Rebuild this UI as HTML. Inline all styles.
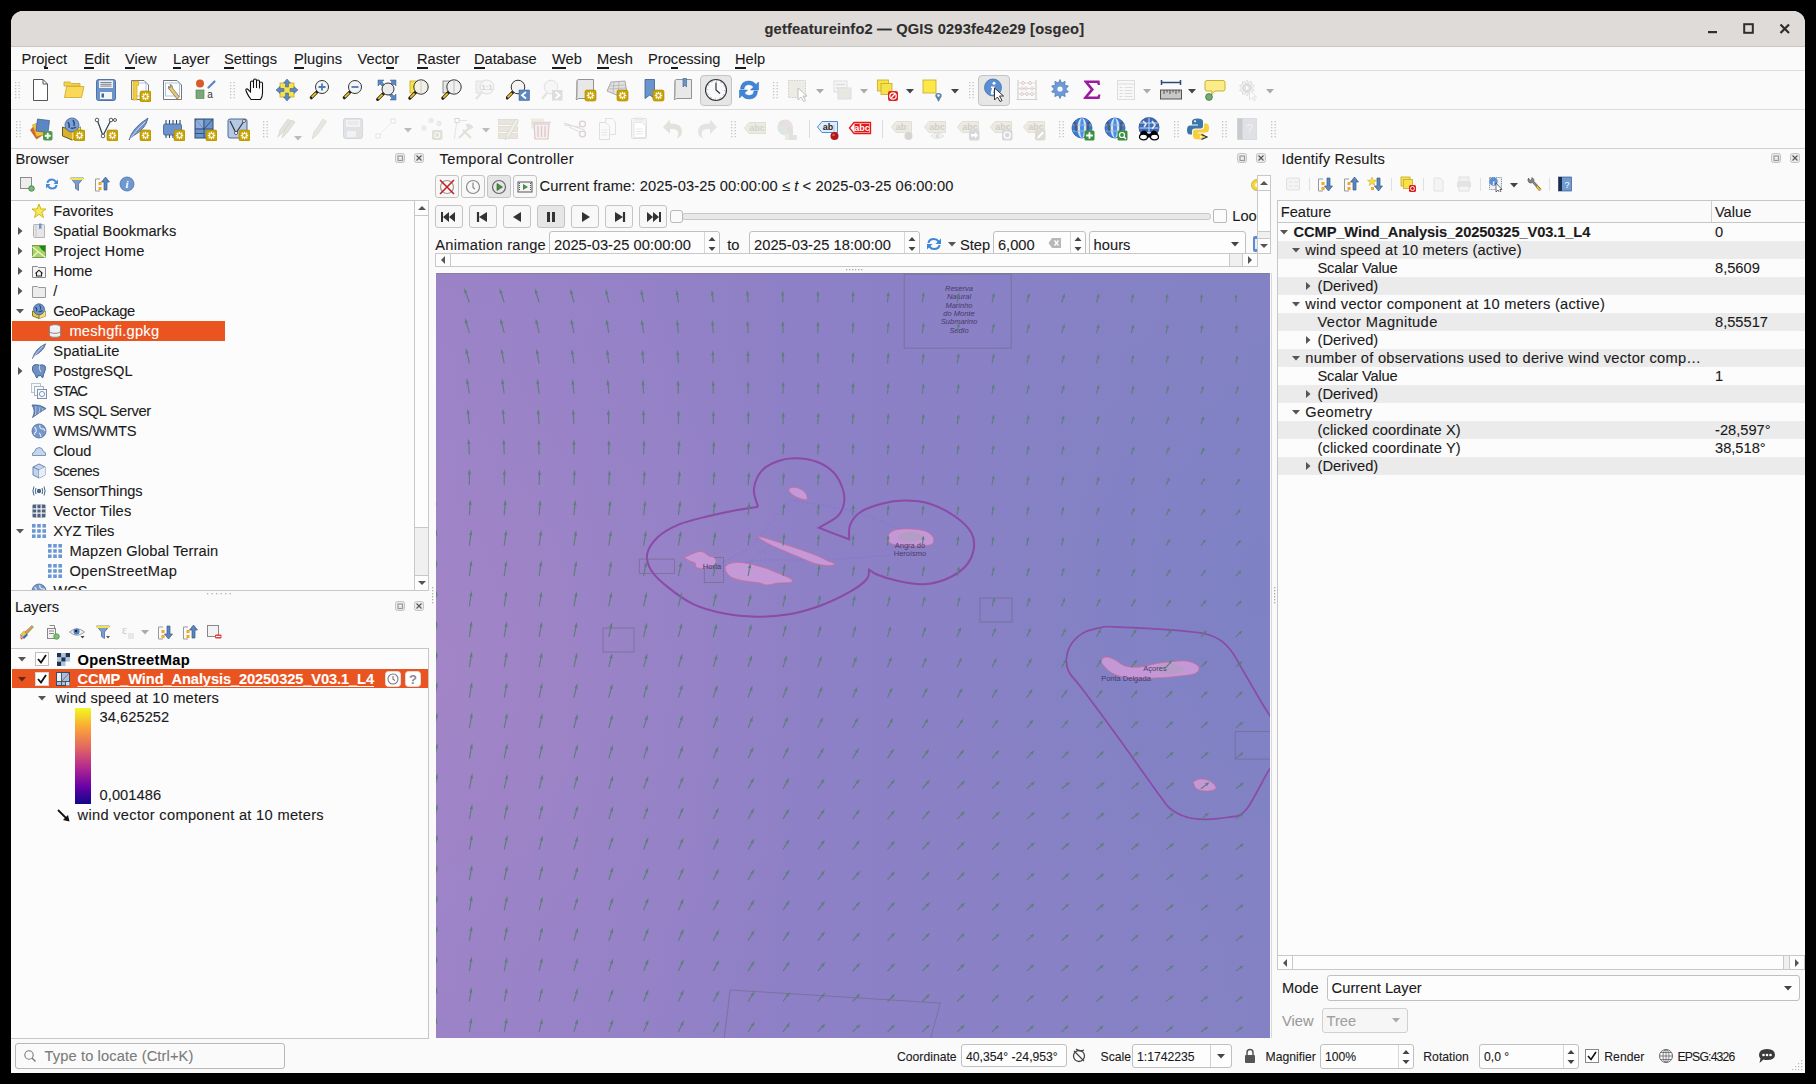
<!DOCTYPE html><html><head><meta charset="utf-8"><style>
html,body{margin:0;padding:0;width:1816px;height:1084px;overflow:hidden;background:#000;}
body{position:relative;font-family:"Liberation Sans",sans-serif;}
.t{position:absolute;white-space:pre;font-family:"Liberation Sans",sans-serif;-webkit-text-stroke:0.1px currentColor;}
.r{position:absolute;box-sizing:border-box;}
u{text-decoration:none;border-bottom:2px solid currentColor;}
</style></head><body>
<div class="r" style="left:11px;top:11px;width:1794px;height:1062px;background:#fafafa;border-radius:12px 12px 0 0;"></div><div class="r" style="left:11px;top:11px;width:1794px;height:36px;background:#dedbd8;border-radius:12px 12px 0 0;border-bottom:1px solid #c9c6c2;"></div><div class="t " style="left:764.50px;top:19.65px;font-size:14.67px;line-height:18px;font-weight:700;color:#2e2e2e;letter-spacing:0.165px;">getfeatureinfo2 — QGIS 0293fe42e29 [osgeo]</div><svg class="r" style="left:1706px;top:22px;" width="14" height="14" viewBox="0 0 14 14"><rect x="2" y="9" width="9" height="2.2" fill="#2e2e2e"/></svg><svg class="r" style="left:1742px;top:22px;" width="14" height="14" viewBox="0 0 14 14"><rect x="2.2" y="2.2" width="8.6" height="8.6" fill="none" stroke="#2e2e2e" stroke-width="2"/></svg><svg class="r" style="left:1778px;top:22px;" width="14" height="14" viewBox="0 0 14 14"><path d="M2.5 2.5 L11 11 M11 2.5 L2.5 11" stroke="#2e2e2e" stroke-width="2.2"/></svg><div class="r" style="left:11px;top:47px;width:1794px;height:24px;background:#fafafa;border-bottom:1px solid #dcdcdc;"></div><div class="t " style="left:21.50px;top:50.15px;font-size:14.67px;line-height:18px;font-weight:400;color:#1a1a1a;">Pro<u>j</u>ect</div><div class="t " style="left:84.20px;top:50.15px;font-size:14.67px;line-height:18px;font-weight:400;color:#1a1a1a;"><u>E</u>dit</div><div class="t " style="left:125.00px;top:50.15px;font-size:14.67px;line-height:18px;font-weight:400;color:#1a1a1a;"><u>V</u>iew</div><div class="t " style="left:173.00px;top:50.15px;font-size:14.67px;line-height:18px;font-weight:400;color:#1a1a1a;"><u>L</u>ayer</div><div class="t " style="left:224.00px;top:50.15px;font-size:14.67px;line-height:18px;font-weight:400;color:#1a1a1a;"><u>S</u>ettings</div><div class="t " style="left:294.00px;top:50.15px;font-size:14.67px;line-height:18px;font-weight:400;color:#1a1a1a;"><u>P</u>lugins</div><div class="t " style="left:357.60px;top:50.15px;font-size:14.67px;line-height:18px;font-weight:400;color:#1a1a1a;">Vect<u>o</u>r</div><div class="t " style="left:417.00px;top:50.15px;font-size:14.67px;line-height:18px;font-weight:400;color:#1a1a1a;"><u>R</u>aster</div><div class="t " style="left:474.00px;top:50.15px;font-size:14.67px;line-height:18px;font-weight:400;color:#1a1a1a;"><u>D</u>atabase</div><div class="t " style="left:552.00px;top:50.15px;font-size:14.67px;line-height:18px;font-weight:400;color:#1a1a1a;"><u>W</u>eb</div><div class="t " style="left:597.00px;top:50.15px;font-size:14.67px;line-height:18px;font-weight:400;color:#1a1a1a;"><u>M</u>esh</div><div class="t " style="left:648.00px;top:50.15px;font-size:14.67px;line-height:18px;font-weight:400;color:#1a1a1a;">Pro<u>c</u>essing</div><div class="t " style="left:735.00px;top:50.15px;font-size:14.67px;line-height:18px;font-weight:400;color:#1a1a1a;"><u>H</u>elp</div><div class="r" style="left:11px;top:71px;width:1794px;height:39px;background:#fafafa;border-bottom:1px solid #dcdcdc;"></div><div class="r" style="left:11px;top:110px;width:1794px;height:39px;background:#fafafa;border-bottom:1px solid #d0d0d0;"></div><div class="t " style="left:15.50px;top:150.15px;font-size:14.67px;line-height:18px;font-weight:400;color:#1a1a1a;">Browser</div><svg class="r" style="left:395px;top:153px;" width="10" height="10" viewBox="0 0 10 10"><rect x="0.5" y="0.5" width="9" height="9" rx="2" fill="#ececec" stroke="#c4c4c4"/><rect x="3" y="3" width="4.5" height="4.5" fill="none" stroke="#9a9a9a" stroke-width="1.2"/></svg><svg class="r" style="left:414px;top:153px;" width="10" height="10" viewBox="0 0 10 10"><rect x="0.5" y="0.5" width="9" height="9" rx="2" fill="#ececec" stroke="#c4c4c4"/><path d="M2.5 2.5L7.5 7.5M7.5 2.5L2.5 7.5" stroke="#555" stroke-width="1.1"/></svg><div class="r" style="left:11px;top:200px;width:418px;height:391px;background:#fcfcfc;border:1px solid #c6c6c6;border-left:none;"></div><div class="r" style="left:414px;top:200px;width:15px;height:391px;background:#fdfdfd;border:1px solid #c8c8c8;"></div><div class="r" style="left:414px;top:215px;width:15px;height:1px;background:#c8c8c8;"></div><div class="r" style="left:414px;top:575px;width:15px;height:1px;background:#c8c8c8;"></div><svg class="r" style="left:416.5px;top:203px;" width="10" height="10" viewBox="0 0 10 10"><path d="M1 7L5 3L9 7Z" fill="#555"/></svg><svg class="r" style="left:416.5px;top:578px;" width="10" height="10" viewBox="0 0 10 10"><path d="M1 3L5 7L9 3Z" fill="#555"/></svg><div class="r" style="left:415px;top:527px;width:13px;height:48px;background:#f0f0f0;border-top:1px solid #c8c8c8;"></div><div class="r" style="left:0;top:0;width:1816px;height:1084px;clip-path:inset(201px 1402px 494px 12px);"><div class="r" style="left:12px;top:321px;width:213px;height:20px;background:#e95420;"></div><svg class="r" style="left:31.0px;top:203.0px;" width="16" height="16" viewBox="0 0 16 16"><g transform="scale(1.0)"><path d="M8 1L9.9 6H15L10.9 9.2L12.5 14.5L8 11.3L3.5 14.5L5.1 9.2L1 6H6.1Z" fill="#f7e85a" stroke="#cbb000" stroke-width="0.9"/></g></svg><div class="t " style="left:53.30px;top:202.15px;font-size:14.67px;line-height:18px;font-weight:400;color:#1a1a1a;letter-spacing:-0.031px;">Favorites</div><svg class="r" style="left:14.5px;top:226px;" width="10" height="10" viewBox="0 0 10 10"><path d="M3 1L3 9L7.5 5Z" fill="#555"/></svg><svg class="r" style="left:31.0px;top:223.0px;" width="16" height="16" viewBox="0 0 16 16"><g transform="scale(1.0)"><path d="M3 1.5H12.5Q13.5 1.5 13.5 2.5V14.5H3.5Q2.5 14.5 2.5 13.5V2.5Q2.5 1.5 3 1.5Z" fill="#e6e6e6" stroke="#b4b4b4"/><path d="M5 1.5V14" stroke="#c8c8c8"/><path d="M8 0.5H10.5V6.5L9.25 5.2L8 6.5Z" fill="#6d96c9"/></g></svg><div class="t " style="left:53.30px;top:222.15px;font-size:14.67px;line-height:18px;font-weight:400;color:#1a1a1a;letter-spacing:0.047px;">Spatial Bookmarks</div><svg class="r" style="left:14.5px;top:246px;" width="10" height="10" viewBox="0 0 10 10"><path d="M3 1L3 9L7.5 5Z" fill="#555"/></svg><svg class="r" style="left:31.0px;top:243.0px;" width="16" height="16" viewBox="0 0 16 16"><g transform="scale(1.0)"><rect x="1.5" y="2.5" width="13" height="12" fill="#a6d266" stroke="#7a9a50"/><path d="M1.5 4L14.5 14.5M1.5 14L7 9" stroke="#e8f4c8" stroke-width="1.5"/><path d="M8 3H14V9L11 7Z" fill="#1a8a1a"/></g></svg><div class="t " style="left:53.30px;top:242.15px;font-size:14.67px;line-height:18px;font-weight:400;color:#1a1a1a;letter-spacing:0.204px;">Project Home</div><svg class="r" style="left:14.5px;top:266px;" width="10" height="10" viewBox="0 0 10 10"><path d="M3 1L3 9L7.5 5Z" fill="#555"/></svg><svg class="r" style="left:31.0px;top:263.0px;" width="16" height="16" viewBox="0 0 16 16"><g transform="scale(1.0)"><path d="M1.5 3.5H6.5L7.5 4.5H14.5V14.5H1.5Z" fill="#f4f4f4" stroke="#8a8a8a"/><path d="M4.5 10.5L8 7.2L11.5 10.5M5.5 9.8V13H10.5V9.8" fill="none" stroke="#222" stroke-width="1.1"/></g></svg><div class="t " style="left:53.30px;top:262.15px;font-size:14.67px;line-height:18px;font-weight:400;color:#1a1a1a;">Home</div><svg class="r" style="left:14.5px;top:286px;" width="10" height="10" viewBox="0 0 10 10"><path d="M3 1L3 9L7.5 5Z" fill="#555"/></svg><svg class="r" style="left:31.0px;top:283.0px;" width="16" height="16" viewBox="0 0 16 16"><g transform="scale(1.0)"><path d="M1.5 3.5H6.5L7.5 4.5H14.5V14.5H1.5Z" fill="#ececec" stroke="#9a9a9a"/></g></svg><div class="t " style="left:53.30px;top:282.15px;font-size:14.67px;line-height:18px;font-weight:400;color:#1a1a1a;">/</div><svg class="r" style="left:14.5px;top:306px;" width="10" height="10" viewBox="0 0 10 10"><path d="M1 3L9 3L5 7.5Z" fill="#555"/></svg><svg class="r" style="left:31.0px;top:303.0px;" width="16" height="16" viewBox="0 0 16 16"><g transform="scale(1.0)"><path d="M1.5 8L8 10.5L14.5 8V13L8 15.5L1.5 13Z" fill="#e8c838" stroke="#6a5a20" stroke-width="0.8"/><path d="M8 10.5L14.5 8V13L8 15.5Z" fill="#f6e070"/><path d="M8 10.5V15.5" stroke="#6a5a20" stroke-width="0.8"/><circle cx="8" cy="6.3" r="5.5" fill="#6e94c8" stroke="#3e5e90" stroke-width="0.8"/><path d="M4.5 4Q6.5 6 5.5 8.5M8.5 2Q10.5 4.5 9.5 6.5M11.5 7.5Q9.5 9 7.5 8.5" stroke="#2a4a80" stroke-width="1.2" fill="none"/></g></svg><div class="t " style="left:53.30px;top:302.15px;font-size:14.67px;line-height:18px;font-weight:400;color:#1a1a1a;letter-spacing:-0.315px;">GeoPackage</div><svg class="r" style="left:47.0px;top:323.0px;" width="16" height="16" viewBox="0 0 16 16"><g transform="scale(1.0)"><ellipse cx="8" cy="4" rx="5.5" ry="2.3" fill="#f6f6f6" stroke="#8a8a8a"/><path d="M2.5 4V12Q2.5 14.3 8 14.3Q13.5 14.3 13.5 12V4" fill="#f0f0f0" stroke="#8a8a8a"/><path d="M2.5 8Q2.5 10.3 8 10.3Q13.5 10.3 13.5 8" fill="none" stroke="#8a8a8a"/></g></svg><div class="t " style="left:69.40px;top:322.15px;font-size:14.67px;line-height:18px;font-weight:400;color:#ffffff;letter-spacing:0.227px;">meshgfi.gpkg</div><svg class="r" style="left:31.0px;top:343.0px;" width="16" height="16" viewBox="0 0 16 16"><g transform="scale(1.0)"><path d="M1.5 15.5Q4 6 14.5 0.8Q13 8 3.5 12.5Z" fill="#7396c8" stroke="#45618e" stroke-width="0.8"/><path d="M2 15Q6 9 12 3" stroke="#d0dcf0" stroke-width="0.8" fill="none"/></g></svg><div class="t " style="left:53.30px;top:342.15px;font-size:14.67px;line-height:18px;font-weight:400;color:#1a1a1a;letter-spacing:0.091px;">SpatiaLite</div><svg class="r" style="left:14.5px;top:366px;" width="10" height="10" viewBox="0 0 10 10"><path d="M3 1L3 9L7.5 5Z" fill="#555"/></svg><svg class="r" style="left:31.0px;top:363.0px;" width="16" height="16" viewBox="0 0 16 16"><g transform="scale(1.0)"><path d="M3 2Q1 3 1.5 7Q2 10 4 11Q4.5 14 6 15Q7 15 7 12.5Q9 13 10 12.5Q10.5 15 12 14.5Q12.5 11 13.5 9Q15.5 5 14 3Q12 1 8.5 2.2Q5.5 1 3 2Z" fill="#6f90c4" stroke="#3f5f8f" stroke-width="0.9"/><path d="M8.5 2.5Q7.5 6 10 9" stroke="#dfe8f5" stroke-width="0.9" fill="none"/></g></svg><div class="t " style="left:53.30px;top:362.15px;font-size:14.67px;line-height:18px;font-weight:400;color:#1a1a1a;letter-spacing:-0.064px;">PostgreSQL</div><svg class="r" style="left:31.0px;top:383.0px;" width="16" height="16" viewBox="0 0 16 16"><g transform="scale(1.0)"><rect x="0.5" y="0.5" width="9" height="9" fill="#f6f8fb" stroke="#b8c4d4"/><rect x="3.5" y="3.5" width="9" height="9" fill="#f6f8fb" stroke="#a4b4c8"/><rect x="6.5" y="6.5" width="9" height="9" fill="#f6f8fb" stroke="#7a90ac"/><circle cx="11" cy="11" r="2.6" fill="none" stroke="#7a90ac" stroke-width="0.9"/></g></svg><div class="t " style="left:53.30px;top:382.15px;font-size:14.67px;line-height:18px;font-weight:400;color:#1a1a1a;letter-spacing:-1.125px;">STAC</div><svg class="r" style="left:31.0px;top:403.0px;" width="16" height="16" viewBox="0 0 16 16"><g transform="scale(1.0)"><path d="M1 2Q9 1 15 5.5Q9 9 1.5 14.5Q5 8 1 2Z" fill="#6d8fc4" stroke="#40608e" stroke-width="0.8"/><path d="M5 3L4.5 12M9 4L8 10M12 5L11.5 7.5" stroke="#c6d4ea" stroke-width="0.7"/></g></svg><div class="t " style="left:53.30px;top:402.15px;font-size:14.67px;line-height:18px;font-weight:400;color:#1a1a1a;letter-spacing:-0.360px;">MS SQL Server</div><svg class="r" style="left:31.0px;top:423.0px;" width="16" height="16" viewBox="0 0 16 16"><g transform="scale(1.0)"><circle cx="8" cy="8" r="7" fill="#7597c9" stroke="#4a6a9a" stroke-width="0.8"/><path d="M3.5 4Q6 6 5 9Q3 10 3.5 12M9 2Q8 5 11 6Q13 5 14 8M8 10Q10 11 10 14" stroke="#e4ecf6" stroke-width="1.1" fill="none"/></g></svg><div class="t " style="left:53.30px;top:422.15px;font-size:14.67px;line-height:18px;font-weight:400;color:#1a1a1a;letter-spacing:-0.196px;">WMS/WMTS</div><svg class="r" style="left:31.0px;top:443.0px;" width="16" height="16" viewBox="0 0 16 16"><g transform="scale(1.0)"><path d="M1.5 12.5Q0.5 9.5 3.5 9Q4 5 8 4.5Q11.5 4.5 12.5 8.5Q15.5 9 14.5 12.5Z" fill="#c6d6ea" stroke="#6e8cb4" stroke-width="0.9"/></g></svg><div class="t " style="left:53.30px;top:442.15px;font-size:14.67px;line-height:18px;font-weight:400;color:#1a1a1a;letter-spacing:-0.039px;">Cloud</div><svg class="r" style="left:31.0px;top:463.0px;" width="16" height="16" viewBox="0 0 16 16"><g transform="scale(1.0)"><path d="M8 1L14 4V12L8 15L2 12V4Z" fill="#c4d4ea" stroke="#5c7aa6" stroke-width="0.9"/><path d="M2 4L8 7L14 4M8 7V15" stroke="#5c7aa6" stroke-width="0.9" fill="none"/><path d="M8 7L14 4V12L8 15Z" fill="#e8eef8"/></g></svg><div class="t " style="left:53.30px;top:462.15px;font-size:14.67px;line-height:18px;font-weight:400;color:#1a1a1a;letter-spacing:-0.532px;">Scenes</div><svg class="r" style="left:31.0px;top:483.0px;" width="16" height="16" viewBox="0 0 16 16"><g transform="scale(1.0)"><circle cx="8" cy="8" r="2.2" fill="#46648e"/><path d="M5 5Q3.5 8 5 11M11 5Q12.5 8 11 11M3 3.5Q0.8 8 3 12.5M13 3.5Q15.2 8 13 12.5" stroke="#46648e" stroke-width="1" fill="none"/></g></svg><div class="t " style="left:53.30px;top:482.15px;font-size:14.67px;line-height:18px;font-weight:400;color:#1a1a1a;letter-spacing:-0.103px;">SensorThings</div><svg class="r" style="left:31.0px;top:503.0px;" width="16" height="16" viewBox="0 0 16 16"><g transform="scale(1.0)"><rect x="1.5" y="1.5" width="13" height="13" rx="1" fill="#4c6180"/><path d="M5.8 1.5V14.5M10.2 1.5V14.5M1.5 5.8H14.5M1.5 10.2H14.5" stroke="#f2f2f2" stroke-width="1.2"/></g></svg><div class="t " style="left:53.30px;top:502.15px;font-size:14.67px;line-height:18px;font-weight:400;color:#1a1a1a;letter-spacing:0.203px;">Vector Tiles</div><svg class="r" style="left:14.5px;top:526px;" width="10" height="10" viewBox="0 0 10 10"><path d="M1 3L9 3L5 7.5Z" fill="#555"/></svg><svg class="r" style="left:31.0px;top:523.0px;" width="16" height="16" viewBox="0 0 16 16"><g transform="scale(1.0)"><g fill="#6b98d2"><rect x="1" y="1" width="3.6" height="3.6"/><rect x="6.2" y="1" width="3.6" height="3.6"/><rect x="11.4" y="1" width="3.6" height="3.6"/><rect x="1" y="6.2" width="3.6" height="3.6"/><rect x="6.2" y="6.2" width="3.6" height="3.6"/><rect x="11.4" y="6.2" width="3.6" height="3.6"/><rect x="1" y="11.4" width="3.6" height="3.6"/><rect x="6.2" y="11.4" width="3.6" height="3.6"/><rect x="11.4" y="11.4" width="3.6" height="3.6"/></g></g></svg><div class="t " style="left:53.30px;top:522.15px;font-size:14.67px;line-height:18px;font-weight:400;color:#1a1a1a;letter-spacing:-0.202px;">XYZ Tiles</div><svg class="r" style="left:47.0px;top:543.0px;" width="16" height="16" viewBox="0 0 16 16"><g transform="scale(1.0)"><g fill="#6b98d2"><rect x="1" y="1" width="3.6" height="3.6"/><rect x="6.2" y="1" width="3.6" height="3.6"/><rect x="11.4" y="1" width="3.6" height="3.6"/><rect x="1" y="6.2" width="3.6" height="3.6"/><rect x="6.2" y="6.2" width="3.6" height="3.6"/><rect x="11.4" y="6.2" width="3.6" height="3.6"/><rect x="1" y="11.4" width="3.6" height="3.6"/><rect x="6.2" y="11.4" width="3.6" height="3.6"/><rect x="11.4" y="11.4" width="3.6" height="3.6"/></g></g></svg><div class="t " style="left:69.40px;top:542.15px;font-size:14.67px;line-height:18px;font-weight:400;color:#1a1a1a;letter-spacing:0.082px;">Mapzen Global Terrain</div><svg class="r" style="left:47.0px;top:563.0px;" width="16" height="16" viewBox="0 0 16 16"><g transform="scale(1.0)"><g fill="#6b98d2"><rect x="1" y="1" width="3.6" height="3.6"/><rect x="6.2" y="1" width="3.6" height="3.6"/><rect x="11.4" y="1" width="3.6" height="3.6"/><rect x="1" y="6.2" width="3.6" height="3.6"/><rect x="6.2" y="6.2" width="3.6" height="3.6"/><rect x="11.4" y="6.2" width="3.6" height="3.6"/><rect x="1" y="11.4" width="3.6" height="3.6"/><rect x="6.2" y="11.4" width="3.6" height="3.6"/><rect x="11.4" y="11.4" width="3.6" height="3.6"/></g></g></svg><div class="t " style="left:69.40px;top:562.15px;font-size:14.67px;line-height:18px;font-weight:400;color:#1a1a1a;letter-spacing:0.333px;">OpenStreetMap</div><svg class="r" style="left:31.0px;top:583.0px;" width="16" height="16" viewBox="0 0 16 16"><g transform="scale(1.0)"><circle cx="8" cy="8" r="7" fill="#7597c9" stroke="#4a6a9a" stroke-width="0.8"/><path d="M3.5 4Q6 6 5 9Q3 10 3.5 12M9 2Q8 5 11 6Q13 5 14 8M8 10Q10 11 10 14" stroke="#e4ecf6" stroke-width="1.1" fill="none"/></g></svg><div class="t " style="left:53.30px;top:582.15px;font-size:14.67px;line-height:18px;font-weight:400;color:#1a1a1a;">WCS</div></div><svg class="r" style="left:19px;top:176px;" width="16" height="16" viewBox="0 0 16 16"><rect x="1.5" y="1.5" width="11" height="11" fill="#ededed" stroke="#8a8a8a"/><circle cx="12.5" cy="12.5" r="2.8" fill="#7cb87a" stroke="#3f7f3f" stroke-width="0.8"/></svg><svg class="r" style="left:44px;top:176px;" width="16" height="16" viewBox="0 0 16 16"><path d="M2.5 7Q3 2.5 8 2.5Q11 2.5 12.5 5L14 3.5V8H9.5L11 6.5Q10 4.5 8 4.5Q5 4.5 4.5 7Z M13.5 9Q13 13.5 8 13.5Q5 13.5 3.5 11L2 12.5V8H6.5L5 9.5Q6 11.5 8 11.5Q11 11.5 11.5 9Z" fill="#4a8ad8"/></svg><svg class="r" style="left:69px;top:176px;" width="16" height="16" viewBox="0 0 16 16"><path d="M1.5 2H14.5L9.5 8V14.5L6.5 12.5V8Z" fill="#7d9dc9" stroke="#4f6f9f" stroke-width="0.8"/><rect x="1.5" y="2" width="13" height="2" fill="#f6e24a"/></svg><svg class="r" style="left:94px;top:176px;" width="16" height="16" viewBox="0 0 16 16"><path d="M1.5 3H6M1.5 3V15H6" stroke="#999" fill="none"/><rect x="4.5" y="6" width="3" height="3" fill="#f5a623"/><rect x="4.5" y="11" width="3" height="3" fill="#f5a623"/><path d="M11.5 1L15.5 6H13V14H10V6H7.5Z" fill="#5a86c0" stroke="#3a5a8a" stroke-width="0.7"/></svg><svg class="r" style="left:119px;top:176px;" width="16" height="16" viewBox="0 0 16 16"><circle cx="8" cy="8" r="7" fill="#6e98d0" stroke="#4a72aa" stroke-width="0.8"/><text x="8" y="12.3" font-family="Liberation Serif" font-style="italic" font-weight="700" font-size="11" fill="#fff" text-anchor="middle">i</text></svg><svg class="r" style="left:207px;top:593px;" width="28" height="3" viewBox="0 0 28 3"><rect x="0.0" y="0" width="1.3" height="1.3" fill="#b0b0b0"/><rect x="4.5" y="0" width="1.3" height="1.3" fill="#b0b0b0"/><rect x="9.0" y="0" width="1.3" height="1.3" fill="#b0b0b0"/><rect x="13.5" y="0" width="1.3" height="1.3" fill="#b0b0b0"/><rect x="18.0" y="0" width="1.3" height="1.3" fill="#b0b0b0"/><rect x="22.5" y="0" width="1.3" height="1.3" fill="#b0b0b0"/></svg><div class="t " style="left:15.00px;top:598.15px;font-size:14.67px;line-height:18px;font-weight:400;color:#1a1a1a;">Layers</div><svg class="r" style="left:395px;top:601px;" width="10" height="10" viewBox="0 0 10 10"><rect x="0.5" y="0.5" width="9" height="9" rx="2" fill="#ececec" stroke="#c4c4c4"/><rect x="3" y="3" width="4.5" height="4.5" fill="none" stroke="#9a9a9a" stroke-width="1.2"/></svg><svg class="r" style="left:414px;top:601px;" width="10" height="10" viewBox="0 0 10 10"><rect x="0.5" y="0.5" width="9" height="9" rx="2" fill="#ececec" stroke="#c4c4c4"/><path d="M2.5 2.5L7.5 7.5M7.5 2.5L2.5 7.5" stroke="#555" stroke-width="1.1"/></svg><div class="r" style="left:11px;top:648px;width:418px;height:391px;background:#fcfcfc;border:1px solid #c6c6c6;border-left:none;"></div><div class="r" style="left:12px;top:669px;width:416px;height:19px;background:#e95420;"></div><svg class="r" style="left:17px;top:654px;" width="10" height="10" viewBox="0 0 10 10"><path d="M1 3L9 3L5 7.5Z" fill="#555"/></svg><svg class="r" style="left:35px;top:652px;" width="14" height="14" viewBox="0 0 14 14"><rect x="0.5" y="0.5" width="13" height="13" fill="#fff" stroke="#bdbdbd"/><path d="M3 7L6 10.5L11 3" stroke="#111" stroke-width="1.8" fill="none"/></svg><svg class="r" style="left:57px;top:653px;" width="13" height="13" viewBox="0 0 13 13"><rect x="0.00" y="0.00" width="4.4" height="4.4" fill="#1f3350"/><rect x="4.33" y="0.00" width="4.4" height="4.4" fill="#a8c4e0"/><rect x="8.66" y="0.00" width="4.4" height="4.4" fill="#1f3350"/><rect x="0.00" y="4.33" width="4.4" height="4.4" fill="#a8c4e0"/><rect x="4.33" y="4.33" width="4.4" height="4.4" fill="#1f3350"/><rect x="8.66" y="4.33" width="4.4" height="4.4" fill="#a8c4e0"/><rect x="0.00" y="8.66" width="4.4" height="4.4" fill="#1f3350"/><rect x="4.33" y="8.66" width="4.4" height="4.4" fill="#a8c4e0"/><rect x="8.66" y="8.66" width="4.4" height="4.4" fill="#fafafa"/></svg><div class="t " style="left:77.50px;top:650.65px;font-size:14.67px;line-height:18px;font-weight:700;color:#000;letter-spacing:0.322px;">OpenStreetMap</div><svg class="r" style="left:17px;top:673.5px;" width="10" height="10" viewBox="0 0 10 10"><path d="M1 3L9 3L5 7.5Z" fill="#5a2a14"/></svg><svg class="r" style="left:35px;top:672px;" width="14" height="14" viewBox="0 0 14 14"><rect x="0.5" y="0.5" width="13" height="13" fill="#fff" stroke="#d8d8d8"/><path d="M3 7L6 10.5L11 3" stroke="#111" stroke-width="1.8" fill="none"/></svg><svg class="r" style="left:56px;top:672px;" width="14" height="14" viewBox="0 0 14 14"><rect x="0.5" y="0.5" width="13" height="13" fill="#a8c0dc" stroke="#3a4a60" stroke-width="1"/><rect x="1" y="1" width="4" height="8" fill="#eef2f6"/><path d="M5.5 0.5V13.5M0.5 9.5H13.5M9.5 9.5V13.5" stroke="#3a4a60" stroke-width="0.9"/><path d="M6 9L13 1" stroke="#9a5050" stroke-width="0.8"/><rect x="10" y="10" width="3.5" height="3.5" fill="#d8dde4"/></svg><div class="t " style="left:77.50px;top:670.15px;font-size:14.67px;line-height:18px;font-weight:700;color:#ffffff;letter-spacing:-0.111px;text-decoration:underline;text-underline-offset:2px;text-decoration-thickness:1px;">CCMP_Wind_Analysis_20250325_V03.1_L4</div><svg class="r" style="left:385px;top:671px;" width="16" height="16" viewBox="0 0 16 16"><rect x="0.5" y="0.5" width="15" height="15" rx="3" fill="#fff" stroke="#ddd"/><circle cx="8" cy="8" r="5" fill="none" stroke="#777" stroke-width="1.1"/><path d="M8 5V8.3L10 9.5" stroke="#777" stroke-width="1.1" fill="none"/></svg><svg class="r" style="left:405px;top:671px;" width="16" height="16" viewBox="0 0 16 16"><rect x="0.5" y="0.5" width="15" height="15" rx="3" fill="#fff" stroke="#ddd"/><text x="8" y="13" font-family="Liberation Sans" font-weight="700" font-size="13" fill="#888" text-anchor="middle">?</text></svg><svg class="r" style="left:37px;top:693px;" width="10" height="10" viewBox="0 0 10 10"><path d="M1 3L9 3L5 7.5Z" fill="#555"/></svg><div class="t " style="left:55.50px;top:689.15px;font-size:14.67px;line-height:18px;font-weight:400;color:#1a1a1a;letter-spacing:0.166px;">wind speed at 10 meters</div><div class="r" style="left:75px;top:708px;width:16px;height:96px;background:linear-gradient(to bottom,#f0f921 0%,#fca636 20%,#e16462 42%,#b12a90 62%,#6a00a8 82%,#0d0887 100%);"></div><div class="t " style="left:99.50px;top:708.15px;font-size:14.67px;line-height:18px;font-weight:400;color:#1a1a1a;letter-spacing:0.052px;">34,625252</div><div class="t " style="left:99.50px;top:785.65px;font-size:14.67px;line-height:18px;font-weight:400;color:#1a1a1a;letter-spacing:0.076px;">0,001486</div><svg class="r" style="left:56px;top:808px;" width="16" height="16" viewBox="0 0 16 16"><path d="M2 2L12 12" stroke="#111" stroke-width="1.8"/><path d="M13.5 13.5L7 12L12 7Z" fill="#111"/></svg><div class="t " style="left:77.50px;top:805.65px;font-size:14.67px;line-height:18px;font-weight:400;color:#1a1a1a;letter-spacing:0.301px;">wind vector component at 10 meters</div><svg class="r" style="left:19.0px;top:624.0px;" width="16" height="16" viewBox="0 0 16 16"><path d="M1 11L5 7L9 11L5 15Z" fill="#3a6ab8"/><path d="M1.5 10.5L5.5 6.5L8 9L4 13Z" fill="#f2c83a"/><path d="M1 12L4 15L2 15.5Z" fill="#e04040"/><path d="M6 8L13 1.5L14.5 3L8 10Z" fill="#c8a060" stroke="#8a6a30" stroke-width="0.5"/></svg><svg class="r" style="left:44.0px;top:624.0px;" width="16" height="16" viewBox="0 0 16 16"><rect x="3.5" y="4.5" width="8" height="10" fill="#f2f2f2" stroke="#888"/><path d="M5.5 1.5H10.5V4.5M5 7H10M5 9.5H10" stroke="#888" fill="none"/><circle cx="12.5" cy="12.5" r="2.8" fill="#7cc070" stroke="#3f8f3f" stroke-width="0.7"/></svg><svg class="r" style="left:69.0px;top:624.0px;" width="16" height="16" viewBox="0 0 16 16"><path d="M0.5 8Q8 1.5 15.5 8Q8 14.5 0.5 8Z" fill="#f0f0f0" stroke="#999"/><circle cx="7.5" cy="7.5" r="3" fill="#4a7ac0"/><circle cx="7" cy="7" r="1.1" fill="#111"/><path d="M11.5 12H15.5L13.5 14.5Z" fill="#444"/></svg><svg class="r" style="left:94.5px;top:624.0px;" width="16" height="16" viewBox="0 0 16 16"><path d="M1.5 2H14.5L9.5 8V14.5L6.5 12.5V8Z" fill="#7d9dc9" stroke="#4f6f9f" stroke-width="0.8"/><rect x="1.5" y="2" width="13" height="2" fill="#f6e24a"/><path d="M11 12H15L13 14.5Z" fill="#555"/></svg><svg class="r" style="left:120.0px;top:624.0px;" width="16" height="16" viewBox="0 0 16 16"><text x="2" y="10" font-family="Liberation Serif" font-size="12" fill="#c8c8c8">ε</text><rect x="8" y="9" width="6" height="6" fill="#e8e8e8"/></svg><svg class="r" style="left:140px;top:627px;" width="10" height="10" viewBox="0 0 10 10"><path d="M1 3L9 3L5 7.5Z" fill="#aaa"/></svg><svg class="r" style="left:156.5px;top:624.0px;" width="16" height="16" viewBox="0 0 16 16"><path d="M1.5 3H6M1.5 3V15H6" stroke="#999" fill="none"/><rect x="4.5" y="6" width="3" height="3" fill="#f5a623"/><rect x="4.5" y="11" width="3" height="3" fill="#f5a623"/><path d="M11.5 15L15.5 10H13V2H10V10H7.5Z" fill="#5a86c0" stroke="#3a5a8a" stroke-width="0.7"/></svg><svg class="r" style="left:181.5px;top:624.0px;" width="16" height="16" viewBox="0 0 16 16"><path d="M1.5 3H6M1.5 3V15H6" stroke="#999" fill="none"/><rect x="4.5" y="6" width="3" height="3" fill="#f5a623"/><rect x="4.5" y="11" width="3" height="3" fill="#f5a623"/><path d="M11.5 1L15.5 6H13V14H10V6H7.5Z" fill="#5a86c0" stroke="#3a5a8a" stroke-width="0.7"/></svg><svg class="r" style="left:205.75px;top:624.0px;" width="16" height="16" viewBox="0 0 16 16"><rect x="1.5" y="1.5" width="11" height="11" fill="#f2f2f2" stroke="#888"/><rect x="9" y="10.5" width="6.5" height="4" rx="1" fill="#e04040"/><rect x="10" y="12" width="4.5" height="1" fill="#fff"/></svg><div class="r" style="left:15px;top:1043px;width:270px;height:26px;background:#fafafa;border:1px solid #b8b8b8;border-radius:3px;"></div><svg class="r" style="left:23px;top:1049px;" width="14" height="14" viewBox="0 0 14 14"><circle cx="6" cy="6" r="4.2" fill="none" stroke="#7a7a7a" stroke-width="1.1"/><path d="M9 9L12.5 12.5" stroke="#7a7a7a" stroke-width="1.4"/></svg><div class="t " style="left:44.50px;top:1047.15px;font-size:14.67px;line-height:18px;font-weight:400;color:#7a7a7a;letter-spacing:0.121px;">Type to locate (Ctrl+K)</div><div class="t " style="left:439.50px;top:150.15px;font-size:14.67px;line-height:18px;font-weight:400;color:#1a1a1a;letter-spacing:0.348px;">Temporal Controller</div><svg class="r" style="left:1237px;top:153px;" width="10" height="10" viewBox="0 0 10 10"><rect x="0.5" y="0.5" width="9" height="9" rx="2" fill="#ececec" stroke="#c4c4c4"/><rect x="3" y="3" width="4.5" height="4.5" fill="none" stroke="#9a9a9a" stroke-width="1.2"/></svg><svg class="r" style="left:1256px;top:153px;" width="10" height="10" viewBox="0 0 10 10"><rect x="0.5" y="0.5" width="9" height="9" rx="2" fill="#ececec" stroke="#c4c4c4"/><path d="M2.5 2.5L7.5 7.5M7.5 2.5L2.5 7.5" stroke="#555" stroke-width="1.1"/></svg><div class="r" style="left:435px;top:175px;width:24px;height:23px;background:#f8f8f8;border:1px solid #c4c4c4;border-radius:3px;"></div><div class="r" style="left:461px;top:175px;width:24px;height:23px;background:#f8f8f8;border:1px solid #c4c4c4;border-radius:3px;"></div><div class="r" style="left:487px;top:175px;width:24px;height:23px;background:#e6e6e6;border:1px solid #c4c4c4;border-radius:3px;"></div><div class="r" style="left:513px;top:175px;width:24px;height:23px;background:#f8f8f8;border:1px solid #c4c4c4;border-radius:3px;"></div><svg class="r" style="left:437px;top:177px;" width="20" height="20" viewBox="0 0 20 20"><circle cx="10" cy="10" r="6.5" fill="none" stroke="#999" stroke-width="1.2"/><path d="M3 3L17 17M17 3L3 17" stroke="#c81818" stroke-width="1.5"/></svg><svg class="r" style="left:463px;top:177px;" width="20" height="20" viewBox="0 0 20 20"><circle cx="10" cy="10" r="6.5" fill="none" stroke="#888" stroke-width="1.2"/><path d="M10 5.5V10.5L12 12" stroke="#888" stroke-width="1.2" fill="none"/></svg><svg class="r" style="left:489px;top:177px;" width="20" height="20" viewBox="0 0 20 20"><circle cx="10" cy="10" r="6.5" fill="none" stroke="#666" stroke-width="1.2"/><path d="M8 6.5V13.5L13.5 10Z" fill="#4a8a4a" stroke="#2a5a2a" stroke-width="0.6"/></svg><svg class="r" style="left:515px;top:177px;" width="20" height="20" viewBox="0 0 20 20"><rect x="3" y="5" width="14" height="10" fill="#f4f4f4" stroke="#555" stroke-width="1"/><path d="M4.5 6V14M15.5 6V14" stroke="#555" stroke-dasharray="1 1"/><path d="M8 7V13L13 10Z" fill="#4a8a4a"/></svg><div class="t " style="left:539.50px;top:177.15px;font-size:14.67px;line-height:18px;font-weight:400;color:#1a1a1a;letter-spacing:0.105px;">Current frame: 2025-03-25 00:00:00 ≤ <i>t</i> &lt; 2025-03-25 06:00:00</div><div class="r" style="left:435px;top:205px;width:28px;height:23px;background:#f8f8f8;border:1px solid #c4c4c4;border-radius:3px;"></div><div class="r" style="left:469px;top:205px;width:28px;height:23px;background:#f8f8f8;border:1px solid #c4c4c4;border-radius:3px;"></div><div class="r" style="left:503px;top:205px;width:28px;height:23px;background:#f8f8f8;border:1px solid #c4c4c4;border-radius:3px;"></div><div class="r" style="left:537px;top:205px;width:28px;height:23px;background:#e6e6e6;border:1px solid #c4c4c4;border-radius:3px;"></div><div class="r" style="left:571px;top:205px;width:28px;height:23px;background:#f8f8f8;border:1px solid #c4c4c4;border-radius:3px;"></div><div class="r" style="left:605px;top:205px;width:28px;height:23px;background:#f8f8f8;border:1px solid #c4c4c4;border-radius:3px;"></div><div class="r" style="left:639px;top:205px;width:28px;height:23px;background:#f8f8f8;border:1px solid #c4c4c4;border-radius:3px;"></div><svg class="r" style="left:439.0px;top:206.5px;" width="20" height="20" viewBox="0 0 20 20"><path d="M3 5V15" stroke="#333" stroke-width="2"/><path d="M4 10L10 5V15Z M10 10L16 5V15Z" fill="#333"/></svg><svg class="r" style="left:473.0px;top:206.5px;" width="20" height="20" viewBox="0 0 20 20"><path d="M5 5V15" stroke="#333" stroke-width="2.2"/><path d="M6 10L14 5V15Z" fill="#333"/></svg><svg class="r" style="left:507.0px;top:206.5px;" width="20" height="20" viewBox="0 0 20 20"><path d="M6 10L14 5V15Z" fill="#333"/></svg><svg class="r" style="left:541.0px;top:206.5px;" width="20" height="20" viewBox="0 0 20 20"><rect x="6" y="5" width="3" height="10" fill="#333"/><rect x="11" y="5" width="3" height="10" fill="#333"/></svg><svg class="r" style="left:575.0px;top:206.5px;" width="20" height="20" viewBox="0 0 20 20"><path d="M7 5V15L15 10Z" fill="#333"/></svg><svg class="r" style="left:609.0px;top:206.5px;" width="20" height="20" viewBox="0 0 20 20"><path d="M6 5V15L14 10Z" fill="#333"/><path d="M15 5V15" stroke="#333" stroke-width="2.2"/></svg><svg class="r" style="left:643.0px;top:206.5px;" width="20" height="20" viewBox="0 0 20 20"><path d="M4 5V15L10 10Z M10 5V15L16 10Z" fill="#333"/><path d="M17 5V15" stroke="#333" stroke-width="2"/></svg><div class="r" style="left:682px;top:213px;width:529px;height:7px;background:#e8e8e8;border:1px solid #c8c8c8;border-radius:3px;"></div><div class="r" style="left:670px;top:210px;width:13px;height:13px;background:#fafafa;border:1px solid #b8b8b8;border-radius:3px;"></div><svg class="r" style="left:1213px;top:209px;" width="14" height="14" viewBox="0 0 14 14"><rect x="0.5" y="0.5" width="13" height="13" rx="1.5" fill="#fbfbfb" stroke="#b8b8b8"/></svg><div class="t " style="left:1232.30px;top:207.15px;font-size:14.67px;line-height:18px;font-weight:400;color:#1a1a1a;">Loo</div><div class="r" style="left:0;top:0;width:1816px;height:1084px;clip-path:inset(175px 559px 831px 435px);"><div class="t " style="left:435.30px;top:236.15px;font-size:14.67px;line-height:18px;font-weight:400;color:#1a1a1a;letter-spacing:0.264px;">Animation range</div><div class="r" style="left:549px;top:231px;width:171px;height:25px;background:#fdfdfd;border:1px solid #c0c0c0;border-radius:3px;"></div><div class="r" style="left:704px;top:232px;width:1px;height:23px;background:#d8d8d8;"></div><svg class="r" style="left:707px;top:234.5px;" width="10" height="8" viewBox="0 0 10 8"><path d="M1.5 6L5 2L8.5 6Z" fill="#444"/></svg><svg class="r" style="left:707px;top:244.5px;" width="10" height="8" viewBox="0 0 10 8"><path d="M1.5 2L5 6L8.5 2Z" fill="#444"/></svg><div class="t " style="left:554.00px;top:236.15px;font-size:14.67px;line-height:18px;font-weight:400;color:#1a1a1a;letter-spacing:0.048px;">2025-03-25 00:00:00</div><div class="t " style="left:727.30px;top:236.15px;font-size:14.67px;line-height:18px;font-weight:400;color:#1a1a1a;">to</div><div class="r" style="left:749px;top:231px;width:171px;height:25px;background:#fdfdfd;border:1px solid #c0c0c0;border-radius:3px;"></div><div class="r" style="left:904px;top:232px;width:1px;height:23px;background:#d8d8d8;"></div><svg class="r" style="left:907px;top:234.5px;" width="10" height="8" viewBox="0 0 10 8"><path d="M1.5 6L5 2L8.5 6Z" fill="#444"/></svg><svg class="r" style="left:907px;top:244.5px;" width="10" height="8" viewBox="0 0 10 8"><path d="M1.5 2L5 6L8.5 2Z" fill="#444"/></svg><div class="t " style="left:754.00px;top:236.15px;font-size:14.67px;line-height:18px;font-weight:400;color:#1a1a1a;letter-spacing:0.048px;">2025-03-25 18:00:00</div><svg class="r" style="left:925px;top:235px;" width="18" height="18" viewBox="0 0 18 18"><path d="M2.5 8Q3 3 9 3Q12.5 3 14 5.5L16 3.5V9H10.5L12.5 7Q11.5 5 9 5Q5 5 4.5 8Z M15.5 10Q15 15 9 15Q5.5 15 4 12.5L2 14.5V9H7.5L5.5 11Q6.5 13 9 13Q13 13 13.5 10Z" fill="#3d85d8"/></svg><svg class="r" style="left:947px;top:239px;" width="10" height="10" viewBox="0 0 10 10"><path d="M1 3L9 3L5 7.5Z" fill="#555"/></svg><div class="t " style="left:960.00px;top:236.15px;font-size:14.67px;line-height:18px;font-weight:400;color:#1a1a1a;letter-spacing:-0.039px;">Step</div><div class="r" style="left:993px;top:231px;width:93px;height:25px;background:#fdfdfd;border:1px solid #c0c0c0;border-radius:3px;"></div><div class="r" style="left:1070px;top:232px;width:1px;height:23px;background:#d8d8d8;"></div><svg class="r" style="left:1073px;top:234.5px;" width="10" height="8" viewBox="0 0 10 8"><path d="M1.5 6L5 2L8.5 6Z" fill="#444"/></svg><svg class="r" style="left:1073px;top:244.5px;" width="10" height="8" viewBox="0 0 10 8"><path d="M1.5 2L5 6L8.5 2Z" fill="#444"/></svg><div class="t " style="left:998.00px;top:236.15px;font-size:14.67px;line-height:18px;font-weight:400;color:#1a1a1a;letter-spacing:-0.037px;">6,000</div><svg class="r" style="left:1048px;top:237px;" width="14" height="12" viewBox="0 0 14 12"><path d="M4 1H13V11H4L0.5 6Z" fill="#b8b8b8"/><path d="M6.5 3.5L10.5 8.5M10.5 3.5L6.5 8.5" stroke="#fff" stroke-width="1.3"/></svg><div class="r" style="left:1089px;top:231px;width:157px;height:25px;background:#fdfdfd;border:1px solid #c0c0c0;border-radius:3px;"></div><div class="t " style="left:1093.50px;top:236.15px;font-size:14.67px;line-height:18px;font-weight:400;color:#1a1a1a;letter-spacing:0.066px;">hours</div><svg class="r" style="left:1229.5px;top:238.5px;" width="10" height="10" viewBox="0 0 10 10"><path d="M1 3L9 3L5 7.5Z" fill="#444"/></svg><svg class="r" style="left:1251px;top:235px;" width="10" height="18" viewBox="0 0 10 18"><rect x="2" y="1" width="12" height="16" rx="2" fill="#5b8bd0"/><rect x="4" y="4" width="6" height="10" fill="#e8eef8"/></svg></div><div class="r" style="left:1257px;top:175px;width:14px;height:79px;background:#fdfdfd;border:1px solid #c8c8c8;"></div><div class="r" style="left:1257px;top:190px;width:14px;height:1px;background:#c8c8c8;"></div><div class="r" style="left:1257px;top:238px;width:14px;height:1px;background:#c8c8c8;"></div><svg class="r" style="left:1259.0px;top:178px;" width="10" height="10" viewBox="0 0 10 10"><path d="M1 7L5 3L9 7Z" fill="#555"/></svg><svg class="r" style="left:1259.0px;top:241px;" width="10" height="10" viewBox="0 0 10 10"><path d="M1 3L5 7L9 3Z" fill="#555"/></svg><div class="r" style="left:1258px;top:231px;width:12px;height:7px;background:#f0f0f0;border-top:1px solid #c8c8c8;"></div><div class="r" style="left:435px;top:253px;width:823px;height:14px;background:#fdfdfd;border:1px solid #c8c8c8;"></div><div class="r" style="left:450px;top:253px;width:1px;height:14px;background:#c8c8c8;"></div><div class="r" style="left:1242px;top:253px;width:1px;height:14px;background:#c8c8c8;"></div><svg class="r" style="left:438px;top:255.0px;" width="10" height="10" viewBox="0 0 10 10"><path d="M7 1L3 5L7 9Z" fill="#555"/></svg><svg class="r" style="left:1245px;top:255.0px;" width="10" height="10" viewBox="0 0 10 10"><path d="M3 1L7 5L3 9Z" fill="#555"/></svg><div class="r" style="left:1229px;top:254px;width:13px;height:12px;background:#f0f0f0;border-left:1px solid #c8c8c8;"></div><svg class="r" style="left:846px;top:269px;" width="18" height="2" viewBox="0 0 18 2"><rect x="0" y="0" width="1.3" height="1.3" fill="#a8a8a8"/><rect x="3" y="0" width="1.3" height="1.3" fill="#a8a8a8"/><rect x="6" y="0" width="1.3" height="1.3" fill="#a8a8a8"/><rect x="9" y="0" width="1.3" height="1.3" fill="#a8a8a8"/><rect x="12" y="0" width="1.3" height="1.3" fill="#a8a8a8"/><rect x="15" y="0" width="1.3" height="1.3" fill="#a8a8a8"/></svg><svg class="r" style="left:432px;top:587px;" width="2" height="18" viewBox="0 0 2 18"><rect x="0" y="0" width="1.3" height="1.3" fill="#b0b0b0"/><rect x="0" y="3" width="1.3" height="1.3" fill="#b0b0b0"/><rect x="0" y="6" width="1.3" height="1.3" fill="#b0b0b0"/><rect x="0" y="9" width="1.3" height="1.3" fill="#b0b0b0"/><rect x="0" y="12" width="1.3" height="1.3" fill="#b0b0b0"/><rect x="0" y="15" width="1.3" height="1.3" fill="#b0b0b0"/></svg><svg class="r" style="left:1274px;top:587px;" width="2" height="18" viewBox="0 0 2 18"><rect x="0" y="0" width="1.3" height="1.3" fill="#a8a8a8"/><rect x="0" y="3" width="1.3" height="1.3" fill="#a8a8a8"/><rect x="0" y="6" width="1.3" height="1.3" fill="#a8a8a8"/><rect x="0" y="9" width="1.3" height="1.3" fill="#a8a8a8"/><rect x="0" y="12" width="1.3" height="1.3" fill="#a8a8a8"/><rect x="0" y="15" width="1.3" height="1.3" fill="#a8a8a8"/></svg><div class="t " style="left:1281.40px;top:150.15px;font-size:14.67px;line-height:18px;font-weight:400;color:#1a1a1a;letter-spacing:0.212px;">Identify Results</div><svg class="r" style="left:1771px;top:153px;" width="10" height="10" viewBox="0 0 10 10"><rect x="0.5" y="0.5" width="9" height="9" rx="2" fill="#ececec" stroke="#c4c4c4"/><rect x="3" y="3" width="4.5" height="4.5" fill="none" stroke="#9a9a9a" stroke-width="1.2"/></svg><svg class="r" style="left:1790px;top:153px;" width="10" height="10" viewBox="0 0 10 10"><rect x="0.5" y="0.5" width="9" height="9" rx="2" fill="#ececec" stroke="#c4c4c4"/><path d="M2.5 2.5L7.5 7.5M7.5 2.5L2.5 7.5" stroke="#555" stroke-width="1.1"/></svg><div class="r" style="left:1277px;top:200px;width:528px;height:770px;background:#fcfcfc;border:1px solid #c6c6c6;border-right:none;"></div><div class="r" style="left:1278px;top:201px;width:527px;height:22px;background:#fafafa;border-bottom:1px solid #c6c6c6;"></div><div class="r" style="left:1711px;top:201px;width:1px;height:21px;background:#d0d0d0;"></div><div class="t " style="left:1280.70px;top:203.15px;font-size:14.67px;line-height:18px;font-weight:400;color:#1a1a1a;">Feature</div><div class="t " style="left:1714.90px;top:203.15px;font-size:14.67px;line-height:18px;font-weight:400;color:#1a1a1a;">Value</div><svg class="r" style="left:1279px;top:227px;" width="10" height="10" viewBox="0 0 10 10"><path d="M1 3L9 3L5 7.5Z" fill="#555"/></svg><div class="t " style="left:1293.60px;top:223.15px;font-size:14.67px;line-height:18px;font-weight:400;color:#1a1a1a;letter-spacing:-0.108px;"><b>CCMP_Wind_Analysis_20250325_V03.1_L4</b></div><div class="t " style="left:1715.00px;top:223.15px;font-size:14.67px;line-height:18px;font-weight:400;color:#1a1a1a;">0</div><div class="r" style="left:1278px;top:241px;width:527px;height:18px;background:#ebebeb;"></div><svg class="r" style="left:1291px;top:245px;" width="10" height="10" viewBox="0 0 10 10"><path d="M1 3L9 3L5 7.5Z" fill="#555"/></svg><div class="t " style="left:1305.30px;top:241.15px;font-size:14.67px;line-height:18px;font-weight:400;color:#1a1a1a;letter-spacing:0.143px;">wind speed at 10 meters (active)</div><div class="t " style="left:1317.50px;top:259.15px;font-size:14.67px;line-height:18px;font-weight:400;color:#1a1a1a;letter-spacing:-0.168px;">Scalar Value</div><div class="t " style="left:1715.00px;top:259.15px;font-size:14.67px;line-height:18px;font-weight:400;color:#1a1a1a;">8,5609</div><div class="r" style="left:1278px;top:277px;width:527px;height:18px;background:#ebebeb;"></div><svg class="r" style="left:1303px;top:281px;" width="10" height="10" viewBox="0 0 10 10"><path d="M3 1L3 9L7.5 5Z" fill="#555"/></svg><div class="t " style="left:1317.50px;top:277.15px;font-size:14.67px;line-height:18px;font-weight:400;color:#1a1a1a;letter-spacing:0.059px;">(Derived)</div><svg class="r" style="left:1291px;top:299px;" width="10" height="10" viewBox="0 0 10 10"><path d="M1 3L9 3L5 7.5Z" fill="#555"/></svg><div class="t " style="left:1305.30px;top:295.15px;font-size:14.67px;line-height:18px;font-weight:400;color:#1a1a1a;letter-spacing:0.266px;">wind vector component at 10 meters (active)</div><div class="r" style="left:1278px;top:313px;width:527px;height:18px;background:#ebebeb;"></div><div class="t " style="left:1317.50px;top:313.15px;font-size:14.67px;line-height:18px;font-weight:400;color:#1a1a1a;letter-spacing:0.383px;">Vector Magnitude</div><div class="t " style="left:1715.00px;top:313.15px;font-size:14.67px;line-height:18px;font-weight:400;color:#1a1a1a;">8,55517</div><svg class="r" style="left:1303px;top:335px;" width="10" height="10" viewBox="0 0 10 10"><path d="M3 1L3 9L7.5 5Z" fill="#555"/></svg><div class="t " style="left:1317.50px;top:331.15px;font-size:14.67px;line-height:18px;font-weight:400;color:#1a1a1a;letter-spacing:0.059px;">(Derived)</div><div class="r" style="left:1278px;top:349px;width:527px;height:18px;background:#ebebeb;"></div><svg class="r" style="left:1291px;top:353px;" width="10" height="10" viewBox="0 0 10 10"><path d="M1 3L9 3L5 7.5Z" fill="#555"/></svg><div class="t " style="left:1305.30px;top:349.15px;font-size:14.67px;line-height:18px;font-weight:400;color:#1a1a1a;letter-spacing:0.253px;">number of observations used to derive wind vector comp…</div><div class="t " style="left:1317.50px;top:367.15px;font-size:14.67px;line-height:18px;font-weight:400;color:#1a1a1a;letter-spacing:-0.168px;">Scalar Value</div><div class="t " style="left:1715.00px;top:367.15px;font-size:14.67px;line-height:18px;font-weight:400;color:#1a1a1a;">1</div><div class="r" style="left:1278px;top:385px;width:527px;height:18px;background:#ebebeb;"></div><svg class="r" style="left:1303px;top:389px;" width="10" height="10" viewBox="0 0 10 10"><path d="M3 1L3 9L7.5 5Z" fill="#555"/></svg><div class="t " style="left:1317.50px;top:385.15px;font-size:14.67px;line-height:18px;font-weight:400;color:#1a1a1a;letter-spacing:0.059px;">(Derived)</div><svg class="r" style="left:1291px;top:407px;" width="10" height="10" viewBox="0 0 10 10"><path d="M1 3L9 3L5 7.5Z" fill="#555"/></svg><div class="t " style="left:1305.30px;top:403.15px;font-size:14.67px;line-height:18px;font-weight:400;color:#1a1a1a;letter-spacing:0.332px;">Geometry</div><div class="r" style="left:1278px;top:421px;width:527px;height:18px;background:#ebebeb;"></div><div class="t " style="left:1317.50px;top:421.15px;font-size:14.67px;line-height:18px;font-weight:400;color:#1a1a1a;letter-spacing:0.107px;">(clicked coordinate X)</div><div class="t " style="left:1715.00px;top:421.15px;font-size:14.67px;line-height:18px;font-weight:400;color:#1a1a1a;">-28,597°</div><div class="t " style="left:1317.50px;top:439.15px;font-size:14.67px;line-height:18px;font-weight:400;color:#1a1a1a;letter-spacing:0.119px;">(clicked coordinate Y)</div><div class="t " style="left:1715.00px;top:439.15px;font-size:14.67px;line-height:18px;font-weight:400;color:#1a1a1a;">38,518°</div><div class="r" style="left:1278px;top:457px;width:527px;height:18px;background:#ebebeb;"></div><svg class="r" style="left:1303px;top:461px;" width="10" height="10" viewBox="0 0 10 10"><path d="M3 1L3 9L7.5 5Z" fill="#555"/></svg><div class="t " style="left:1317.50px;top:457.15px;font-size:14.67px;line-height:18px;font-weight:400;color:#1a1a1a;letter-spacing:0.059px;">(Derived)</div><div class="r" style="left:1277px;top:955px;width:528px;height:15px;background:#fdfdfd;border:1px solid #c8c8c8;"></div><div class="r" style="left:1292px;top:955px;width:1px;height:15px;background:#c8c8c8;"></div><div class="r" style="left:1789px;top:955px;width:1px;height:15px;background:#c8c8c8;"></div><svg class="r" style="left:1280px;top:957.5px;" width="10" height="10" viewBox="0 0 10 10"><path d="M7 1L3 5L7 9Z" fill="#555"/></svg><svg class="r" style="left:1792px;top:957.5px;" width="10" height="10" viewBox="0 0 10 10"><path d="M3 1L7 5L3 9Z" fill="#555"/></svg><div class="r" style="left:1783px;top:956px;width:6px;height:13px;background:#f0f0f0;border-left:1px solid #c8c8c8;"></div><div class="t " style="left:1282.00px;top:979.15px;font-size:14.67px;line-height:18px;font-weight:400;color:#1a1a1a;">Mode</div><div class="r" style="left:1327px;top:975px;width:473px;height:26px;background:#fdfdfd;border:1px solid #c0c0c0;border-radius:3px;"></div><div class="t " style="left:1331.60px;top:979.15px;font-size:14.67px;line-height:18px;font-weight:400;color:#1a1a1a;letter-spacing:0.045px;">Current Layer</div><svg class="r" style="left:1783px;top:983px;" width="10" height="10" viewBox="0 0 10 10"><path d="M1 3L9 3L5 7.5Z" fill="#444"/></svg><div class="t " style="left:1282.00px;top:1011.95px;font-size:14.67px;line-height:18px;font-weight:400;color:#9a9a9a;">View</div><div class="r" style="left:1322px;top:1008px;width:86px;height:25px;background:#f6f6f6;border:1px solid #d0d0d0;border-radius:3px;"></div><div class="t " style="left:1326.50px;top:1011.95px;font-size:14.67px;line-height:18px;font-weight:400;color:#a0a0a0;">Tree</div><svg class="r" style="left:1391px;top:1014.5px;" width="10" height="10" viewBox="0 0 10 10"><path d="M1 3L9 3L5 7.5Z" fill="#aaa"/></svg><div class="r" style="left:1271px;top:273px;width:1px;height:765px;background:#d8d8d8;"></div><div class="r" style="left:0;top:0;width:1816px;height:1084px;clip-path:inset(170px 559px 884px 1240px);"><svg class="r" style="left:1250px;top:178px;" width="14" height="14" viewBox="0 0 14 14"><circle cx="7" cy="7" r="5.5" fill="#f4d838" stroke="#c8a820" stroke-width="0.8"/><circle cx="7" cy="7" r="2" fill="#fafafa"/></svg></div><div class="r" style="left:436px;top:273px;width:834px;height:765px;overflow:hidden;background:radial-gradient(ellipse 330px 420px at 100% 40%,rgba(122,130,198,0.6) 0%,rgba(122,130,198,0) 100%),radial-gradient(ellipse 380px 520px at 0% 52%,rgba(164,134,198,0.7) 0%,rgba(164,134,198,0.35) 45%,rgba(164,134,198,0) 100%),linear-gradient(90deg,#9a82c8 0%,#9381c7 25%,#8c80c6 50%,#8881c5 75%,#8482c4 100%);"><svg class="r" style="left:0;top:0" width="834" height="765"><path d="M322.1 233.8 C321.4 230.8 317.2 222.1 317.9 216.0 C318.6 209.9 322.1 201.9 326.3 197.2 C330.5 192.5 337.4 189.8 343.0 187.8 C348.6 185.8 353.5 185.1 359.8 185.3 C366.1 185.5 374.4 186.5 380.7 188.8 C387.0 191.1 393.0 194.8 397.4 199.3 C401.8 203.8 405.0 210.8 406.8 216.0 C408.5 221.2 408.8 226.1 407.9 230.7 C407.0 235.2 405.8 239.3 401.6 243.3 C397.4 247.3 385.9 252.9 382.8 254.8 L382.8 254.8 C387.8 256.7 408.0 264.4 413.1 266.3 L413.1 266.3 C413.3 263.8 412.3 256.1 414.2 251.6 C416.1 247.1 419.4 242.5 424.6 239.0 C429.8 235.5 438.3 232.6 445.6 230.7 C452.9 228.8 460.6 227.6 468.6 227.6 C476.6 227.6 485.3 228.1 493.7 230.7 C502.1 233.3 511.8 238.4 518.8 243.3 C525.8 248.2 532.4 254.4 535.5 260.0 C538.6 265.6 538.6 271.1 537.6 276.7 C536.6 282.3 533.8 288.6 529.3 293.5 C524.8 298.4 517.4 303.0 510.4 306.0 C503.4 309.0 495.4 310.9 487.4 311.3 C479.4 311.6 470.0 309.7 462.3 308.1 C454.6 306.5 446.3 303.7 441.4 301.8 C436.5 299.9 434.4 297.5 433.0 296.6 L433.0 296.6 C432.6 298.2 434.0 302.3 430.9 306.0 C427.8 309.7 422.2 314.1 414.2 318.6 C406.2 323.1 393.3 329.4 382.8 333.2 C372.3 337.0 361.9 339.9 351.4 341.6 C340.9 343.4 330.5 343.9 320.0 343.7 C309.5 343.5 299.1 342.7 288.6 340.6 C278.1 338.5 266.6 335.5 257.2 331.1 C247.8 326.7 239.1 320.0 232.1 314.4 C225.1 308.8 218.9 303.3 215.4 297.7 C211.9 292.1 210.2 286.5 211.2 280.9 C212.2 275.3 216.5 269.1 221.7 264.2 C226.9 259.3 234.2 255.1 242.6 251.6 C251.0 248.1 262.1 245.7 271.9 243.3 C281.7 240.9 292.8 238.6 301.2 237.0 C309.6 235.4 318.6 234.3 322.1 233.8" fill="none" stroke="#8a4aa6" stroke-width="2" stroke-linejoin="miter"/><path d="M669.8 353.5 C680.0 354.0 715.0 355.5 731.3 356.7 C747.6 357.9 758.6 358.8 767.4 360.5 C776.2 362.2 779.2 363.9 784.0 367.0 C788.8 370.1 791.8 373.3 796.0 379.0 C800.2 384.7 802.8 390.6 809.0 401.0 C815.2 411.4 825.7 430.6 833.2 441.6 C840.7 452.6 854.0 457.8 854.0 467.0 C854.0 476.2 840.6 485.0 833.2 496.7 C825.8 508.4 816.9 529.0 809.8 537.0 C802.7 545.0 799.5 543.1 790.7 544.5 C781.9 545.9 765.9 546.8 756.8 545.5 C747.7 544.2 741.5 540.8 736.0 537.0 C730.5 533.2 732.7 534.7 724.0 523.0 C715.3 511.3 696.9 484.8 684.0 467.0 C671.1 449.2 654.9 427.4 646.4 416.1 C637.9 404.8 635.7 404.2 633.0 399.0 C630.3 393.8 630.0 389.8 630.5 385.0 C631.0 380.2 632.9 374.3 636.0 370.0 C639.1 365.7 643.4 361.8 649.0 359.0 C654.6 356.2 666.3 354.4 669.8 353.5" fill="none" stroke="#8a4ca6" stroke-width="1.7"/><rect x="468.20000000000005" y="1" width="107.0" height="74.10000000000002" fill="none" stroke="#6f6a8a" stroke-width="0.8" opacity="0.8"/><rect x="203.29999999999995" y="286.1" width="35.10000000000002" height="14.299999999999955" fill="none" stroke="#6f6a8a" stroke-width="0.8" opacity="0.8"/><rect x="268.29999999999995" y="284.5" width="19.300000000000068" height="25.100000000000023" fill="none" stroke="#6f6a8a" stroke-width="0.8" opacity="0.8"/><rect x="167" y="355" width="31" height="24" fill="none" stroke="#6f6a8a" stroke-width="0.8" opacity="0.8"/><rect x="544" y="325" width="32" height="24" fill="none" stroke="#6f6a8a" stroke-width="0.8" opacity="0.8"/><rect x="799.2" y="458.5" width="36.799999999999955" height="27.600000000000023" fill="none" stroke="#6f6a8a" stroke-width="0.8" opacity="0.8"/><path d="M288.0 767.0 L294.2 717.0 L418.6 724.7 L504.3 730.1 L494.2 767.0" fill="none" stroke="#6f6a8a" stroke-width="0.8" opacity="0.8"/><path d="M281.0 292.0 L314.0 275.0 L354.0 227.0 L414.0 237.0 L494.0 267.0" fill="none" stroke="#7070e0" stroke-width="0.8" stroke-dasharray="2 2" opacity="0.7"/><path d="M281.0 294.0 L324.0 287.0 L394.0 287.0 L454.0 282.0" fill="none" stroke="#7070e0" stroke-width="0.8" stroke-dasharray="2 2" opacity="0.7"/><path d="M299.0 302.0 L334.0 272.0" fill="none" stroke="#7070e0" stroke-width="0.8" stroke-dasharray="2 2" opacity="0.7"/><path d="M354.0 215.0 C355.0 214.9 358.0 214.2 360.0 214.5 C362.0 214.8 364.3 215.9 366.0 217.0 C367.7 218.1 369.2 219.4 370.0 221.0 C370.8 222.6 372.0 225.8 371.0 226.5 C370.0 227.2 366.3 226.2 364.0 225.5 C361.7 224.8 358.8 223.2 357.0 222.0 C355.2 220.8 353.5 219.2 353.0 218.0 C352.5 216.8 353.8 215.5 354.0 215.0" fill="#c89ad8" stroke="#d86a8a" stroke-width="0.7" opacity="0.95"/><path d="M321.0 263.0 C323.2 263.6 329.3 265.1 334.0 266.5 C338.7 267.9 344.0 269.8 349.0 271.5 C354.0 273.2 359.0 274.8 364.0 276.5 C369.0 278.2 374.3 280.1 379.0 282.0 C383.7 283.9 388.7 286.5 392.0 288.0 C395.3 289.5 399.0 290.2 399.0 291.0 C399.0 291.8 395.3 292.6 392.0 292.5 C388.7 292.4 383.7 291.8 379.0 290.5 C374.3 289.2 368.7 286.4 364.0 284.5 C359.3 282.6 355.5 280.9 351.0 279.0 C346.5 277.1 341.2 275.0 337.0 273.0 C332.8 271.0 328.7 268.7 326.0 267.0 C323.3 265.3 321.8 263.7 321.0 263.0" fill="#c89ad8" stroke="#d86a8a" stroke-width="0.7" opacity="0.95"/><path d="M248.5 284.5 C249.9 283.8 254.4 281.5 257.0 280.5 C259.6 279.5 262.2 278.7 264.0 278.5 C265.8 278.3 266.5 278.8 268.0 279.5 C269.5 280.2 271.3 282.2 273.0 283.0 C274.7 283.8 276.8 283.5 278.0 284.5 C279.2 285.5 280.2 287.6 280.0 289.0 C279.8 290.4 278.5 292.2 277.0 293.0 C275.5 293.8 273.0 293.6 271.0 294.0 C269.0 294.4 266.8 295.5 265.0 295.5 C263.2 295.5 261.0 294.9 260.0 294.0 C259.0 293.1 260.0 291.0 259.0 290.0 C258.0 289.0 255.8 288.9 254.0 288.0 C252.2 287.1 249.4 285.1 248.5 284.5" fill="#c89ad8" stroke="#d86a8a" stroke-width="0.7" opacity="0.95"/><path d="M289.0 294.0 C289.8 293.4 291.5 291.2 294.0 290.5 C296.5 289.8 300.7 289.4 304.0 289.5 C307.3 289.6 309.8 290.1 314.0 291.0 C318.2 291.9 324.8 293.7 329.0 295.0 C333.2 296.3 335.7 297.7 339.0 299.0 C342.3 300.3 346.2 301.7 349.0 303.0 C351.8 304.3 355.2 305.9 356.0 307.0 C356.8 308.1 356.3 309.0 354.0 309.5 C351.7 310.0 345.8 309.6 342.0 310.0 C338.2 310.4 334.0 312.0 331.0 312.0 C328.0 312.0 327.7 310.7 324.0 310.0 C320.3 309.3 313.5 308.8 309.0 308.0 C304.5 307.2 300.0 306.3 297.0 305.0 C294.0 303.7 292.3 301.8 291.0 300.0 C289.7 298.2 289.3 295.0 289.0 294.0" fill="#c89ad8" stroke="#d86a8a" stroke-width="0.7" opacity="0.95"/><path d="M452.0 262.0 C453.2 261.2 455.3 258.0 459.0 257.0 C462.7 256.0 469.0 255.8 474.0 256.0 C479.0 256.2 485.2 256.7 489.0 258.0 C492.8 259.3 495.8 261.8 497.0 264.0 C498.2 266.2 498.2 269.5 496.0 271.0 C493.8 272.5 488.5 272.7 484.0 273.0 C479.5 273.3 474.0 273.5 469.0 273.0 C464.0 272.5 456.8 271.8 454.0 270.0 C451.2 268.2 452.3 263.3 452.0 262.0" fill="#c89ad8" stroke="#d86a8a" stroke-width="0.7" opacity="0.95"/><path d="M664.0 388.0 C665.0 387.3 667.5 384.2 670.0 384.0 C672.5 383.8 675.8 385.5 679.0 387.0 C682.2 388.5 684.8 391.8 689.0 393.0 C693.2 394.2 698.2 394.5 704.0 394.0 C709.8 393.5 716.5 391.0 724.0 390.0 C731.5 389.0 742.7 387.5 749.0 388.0 C755.3 388.5 760.2 391.0 762.0 393.0 C763.8 395.0 763.0 398.3 760.0 400.0 C757.0 401.7 750.8 402.2 744.0 403.0 C737.2 403.8 727.3 404.7 719.0 405.0 C710.7 405.3 701.2 405.8 694.0 405.0 C686.8 404.2 681.0 402.8 676.0 400.0 C671.0 397.2 666.0 390.0 664.0 388.0" fill="#c89ad8" stroke="#d86a8a" stroke-width="0.7" opacity="0.95"/><path d="M757.0 509.0 C758.2 508.5 761.2 506.2 764.0 506.0 C766.8 505.8 771.3 506.5 774.0 508.0 C776.7 509.5 780.3 513.3 780.0 515.0 C779.7 516.7 775.2 517.8 772.0 518.0 C768.8 518.2 763.5 517.5 761.0 516.0 C758.5 514.5 757.7 510.2 757.0 509.0" fill="#c89ad8" stroke="#d86a8a" stroke-width="0.7" opacity="0.95"/><ellipse cx="474" cy="264" rx="12" ry="5" fill="#a8a0b8" opacity="0.6"/><ellipse cx="734" cy="396" rx="14" ry="5" fill="#a8a0b8" opacity="0.5"/><text x="474" y="275" font-family="Liberation Sans" font-size="7.5" fill="#4a3a6a" text-anchor="middle">Angra do</text><text x="474" y="283" font-family="Liberation Sans" font-size="7.5" fill="#4a3a6a" text-anchor="middle">Heroísmo</text><text x="276" y="295.5" font-family="Liberation Sans" font-size="7.5" fill="#4a3a6a" text-anchor="middle">Horta</text><text x="690" y="408" font-family="Liberation Sans" font-size="7.5" fill="#4a3a6a" text-anchor="middle">Ponta Delgada</text><text x="719" y="398" font-family="Liberation Sans" font-size="7.5" fill="#4a3a6a" text-anchor="middle">Açores</text><text x="523" y="18.0" font-family="Liberation Sans" font-style="italic" font-size="7.5" fill="#4a3a6a" text-anchor="middle">Reserva</text><text x="523" y="26.30000000000001" font-family="Liberation Sans" font-style="italic" font-size="7.5" fill="#4a3a6a" text-anchor="middle">Natural</text><text x="523" y="34.60000000000002" font-family="Liberation Sans" font-style="italic" font-size="7.5" fill="#4a3a6a" text-anchor="middle">Marinho</text><text x="523" y="42.89999999999998" font-family="Liberation Sans" font-style="italic" font-size="7.5" fill="#4a3a6a" text-anchor="middle">do Monte</text><text x="523" y="51.19999999999999" font-family="Liberation Sans" font-style="italic" font-size="7.5" fill="#4a3a6a" text-anchor="middle">Submarino</text><text x="523" y="59.5" font-family="Liberation Sans" font-style="italic" font-size="7.5" fill="#4a3a6a" text-anchor="middle">Sedlo</text><path d="M-6.7 15.0L-3.3 19.6L-6.3 20.7Z" fill="#5d7e78"/><path d="M28.1 15.0L31.5 19.6L28.5 20.7Z" fill="#5d7e78"/><path d="M63.6 15.2L66.8 20.0L63.8 21.0Z" fill="#5d7e78"/><path d="M99.0 15.5L102.1 20.3L99.0 21.2Z" fill="#5d7e78"/><path d="M134.4 15.8L137.3 20.7L134.2 21.5Z" fill="#5d7e78"/><path d="M169.7 16.0L172.5 21.1L169.4 21.8Z" fill="#5d7e78"/><path d="M205.1 16.3L207.7 21.4L204.5 22.0Z" fill="#5d7e78"/><path d="M240.4 16.7L242.8 21.8L239.7 22.3Z" fill="#5d7e78"/><path d="M275.8 16.9L278.0 22.0L274.8 22.4Z" fill="#5d7e78"/><path d="M311.2 17.1L313.2 22.2L310.0 22.4Z" fill="#5d7e78"/><path d="M346.6 17.4L348.3 22.4L345.1 22.5Z" fill="#5d7e78"/><path d="M381.9 17.7L383.5 22.7L380.3 22.6Z" fill="#5d7e78"/><path d="M417.2 18.0L418.6 22.9L415.4 22.8Z" fill="#5d7e78"/><path d="M452.6 18.4L453.7 23.2L450.5 22.9Z" fill="#5d7e78"/><path d="M487.9 18.8L488.8 23.5L485.6 23.1Z" fill="#5d7e78"/><path d="M523.2 19.2L523.9 23.8L520.8 23.2Z" fill="#5d7e78"/><path d="M558.4 19.6L558.9 24.1L555.8 23.4Z" fill="#5d7e78"/><path d="M593.6 20.1L594.0 24.5L590.9 23.6Z" fill="#5d7e78"/><path d="M628.8 20.5L629.0 24.8L626.0 23.8Z" fill="#5d7e78"/><path d="M663.0 20.6L663.5 24.8L660.4 23.9Z" fill="#5d7e78"/><path d="M697.3 20.7L698.0 24.7L694.9 24.1Z" fill="#5d7e78"/><path d="M731.5 20.9L732.6 24.7L729.4 24.3Z" fill="#5d7e78"/><path d="M765.8 21.1L767.1 24.8L763.9 24.5Z" fill="#5d7e78"/><path d="M800.2 21.3L801.6 24.8L798.4 24.7Z" fill="#5d7e78"/><path d="M835.0 21.3L836.5 24.8L833.3 24.7Z" fill="#5d7e78"/><path d="M-5.9 45.1L-2.8 49.9L-5.8 50.8Z" fill="#5d7e78"/><path d="M29.0 45.1L32.1 49.9L29.0 50.8Z" fill="#5d7e78"/><path d="M64.3 45.3L67.3 50.2L64.2 51.0Z" fill="#5d7e78"/><path d="M99.7 45.6L102.5 50.5L99.4 51.3Z" fill="#5d7e78"/><path d="M135.0 45.8L137.7 50.9L134.6 51.5Z" fill="#5d7e78"/><path d="M170.3 46.1L172.9 51.2L169.7 51.8Z" fill="#5d7e78"/><path d="M205.6 46.4L208.0 51.6L204.8 52.1Z" fill="#5d7e78"/><path d="M240.9 46.7L243.1 52.0L240.0 52.4Z" fill="#5d7e78"/><path d="M276.2 47.0L278.3 52.3L275.1 52.6Z" fill="#5d7e78"/><path d="M311.5 47.4L313.4 52.6L310.2 52.7Z" fill="#5d7e78"/><path d="M346.8 47.7L348.5 52.8L345.3 52.9Z" fill="#5d7e78"/><path d="M382.0 48.1L383.5 53.1L380.3 53.0Z" fill="#5d7e78"/><path d="M417.3 48.5L418.6 53.4L415.4 53.2Z" fill="#5d7e78"/><path d="M452.6 48.8L453.7 53.6L450.5 53.3Z" fill="#5d7e78"/><path d="M487.8 49.2L488.8 53.9L485.6 53.5Z" fill="#5d7e78"/><path d="M523.1 49.6L523.8 54.2L520.7 53.7Z" fill="#5d7e78"/><path d="M558.3 50.1L558.9 54.6L555.8 53.8Z" fill="#5d7e78"/><path d="M593.4 50.5L593.9 54.9L590.8 54.0Z" fill="#5d7e78"/><path d="M628.6 51.0L628.9 55.2L625.8 54.2Z" fill="#5d7e78"/><path d="M663.0 51.1L663.5 55.2L660.4 54.4Z" fill="#5d7e78"/><path d="M697.5 51.3L698.1 55.3L695.0 54.5Z" fill="#5d7e78"/><path d="M731.9 51.4L732.8 55.3L729.6 54.7Z" fill="#5d7e78"/><path d="M766.4 51.6L767.4 55.4L764.2 54.8Z" fill="#5d7e78"/><path d="M800.9 51.8L802.1 55.4L798.9 55.0Z" fill="#5d7e78"/><path d="M835.7 51.8L836.9 55.4L833.7 55.0Z" fill="#5d7e78"/><path d="M-5.0 75.1L-2.2 80.1L-5.3 80.9Z" fill="#5d7e78"/><path d="M29.8 75.1L32.7 80.1L29.5 80.9Z" fill="#5d7e78"/><path d="M65.1 75.4L67.8 80.4L64.7 81.1Z" fill="#5d7e78"/><path d="M100.4 75.7L103.0 80.8L99.8 81.3Z" fill="#5d7e78"/><path d="M135.7 75.9L138.1 81.1L135.0 81.6Z" fill="#5d7e78"/><path d="M171.0 76.2L173.3 81.5L170.1 81.9Z" fill="#5d7e78"/><path d="M206.2 76.5L208.4 81.8L205.2 82.1Z" fill="#5d7e78"/><path d="M241.4 76.8L243.4 82.2L240.3 82.4Z" fill="#5d7e78"/><path d="M276.7 77.2L278.5 82.6L275.3 82.8Z" fill="#5d7e78"/><path d="M311.8 77.6L313.6 82.9L310.4 83.0Z" fill="#5d7e78"/><path d="M347.0 78.1L348.6 83.2L345.4 83.2Z" fill="#5d7e78"/><path d="M382.2 78.5L383.6 83.5L380.4 83.4Z" fill="#5d7e78"/><path d="M417.3 78.9L418.6 83.8L415.4 83.6Z" fill="#5d7e78"/><path d="M452.5 79.3L453.7 84.1L450.5 83.8Z" fill="#5d7e78"/><path d="M487.8 79.7L488.7 84.4L485.6 83.9Z" fill="#5d7e78"/><path d="M523.0 80.1L523.8 84.7L520.6 84.1Z" fill="#5d7e78"/><path d="M558.1 80.5L558.8 85.0L555.7 84.3Z" fill="#5d7e78"/><path d="M593.3 81.0L593.8 85.3L590.7 84.5Z" fill="#5d7e78"/><path d="M628.4 81.4L628.8 85.6L625.7 84.7Z" fill="#5d7e78"/><path d="M663.0 81.6L663.5 85.7L660.4 84.8Z" fill="#5d7e78"/><path d="M697.6 81.8L698.2 85.8L695.1 84.9Z" fill="#5d7e78"/><path d="M732.3 82.0L733.0 85.9L729.9 85.1Z" fill="#5d7e78"/><path d="M766.9 82.2L767.7 86.0L764.6 85.2Z" fill="#5d7e78"/><path d="M801.6 82.4L802.4 86.1L799.3 85.4Z" fill="#5d7e78"/><path d="M836.4 82.4L837.3 86.1L834.1 85.4Z" fill="#5d7e78"/><path d="M-4.1 105.3L-1.6 110.4L-4.8 111.0Z" fill="#5d7e78"/><path d="M30.7 105.3L33.2 110.4L30.1 111.0Z" fill="#5d7e78"/><path d="M66.0 105.5L68.4 110.7L65.2 111.2Z" fill="#5d7e78"/><path d="M101.2 105.8L103.5 111.0L100.3 111.4Z" fill="#5d7e78"/><path d="M136.4 106.1L138.6 111.4L135.4 111.7Z" fill="#5d7e78"/><path d="M171.6 106.3L173.7 111.7L170.5 111.9Z" fill="#5d7e78"/><path d="M206.8 106.6L208.7 112.0L205.5 112.2Z" fill="#5d7e78"/><path d="M242.0 106.9L243.8 112.4L240.6 112.5Z" fill="#5d7e78"/><path d="M277.1 107.4L278.8 112.9L275.6 112.9Z" fill="#5d7e78"/><path d="M312.2 107.9L313.7 113.3L310.5 113.3Z" fill="#5d7e78"/><path d="M347.2 108.4L348.7 113.6L345.5 113.5Z" fill="#5d7e78"/><path d="M382.3 108.9L383.7 113.9L380.5 113.8Z" fill="#5d7e78"/><path d="M417.3 109.4L418.6 114.2L415.4 114.0Z" fill="#5d7e78"/><path d="M452.5 109.8L453.7 114.5L450.5 114.2Z" fill="#5d7e78"/><path d="M487.7 110.2L488.7 114.8L485.5 114.4Z" fill="#5d7e78"/><path d="M522.9 110.6L523.7 115.1L520.6 114.5Z" fill="#5d7e78"/><path d="M558.0 111.0L558.7 115.4L555.6 114.7Z" fill="#5d7e78"/><path d="M593.1 111.4L593.7 115.7L590.6 114.9Z" fill="#5d7e78"/><path d="M628.2 111.8L628.7 116.0L625.6 115.1Z" fill="#5d7e78"/><path d="M663.0 112.1L663.5 116.1L660.4 115.2Z" fill="#5d7e78"/><path d="M697.8 112.3L698.3 116.3L695.3 115.4Z" fill="#5d7e78"/><path d="M732.6 112.6L733.1 116.4L730.1 115.5Z" fill="#5d7e78"/><path d="M767.4 112.8L768.0 116.6L764.9 115.7Z" fill="#5d7e78"/><path d="M802.3 113.1L802.8 116.8L799.7 115.8Z" fill="#5d7e78"/><path d="M837.1 113.1L837.6 116.8L834.6 115.8Z" fill="#5d7e78"/><path d="M-3.2 135.5L-1.0 140.7L-4.2 141.1Z" fill="#5d7e78"/><path d="M31.6 135.5L33.8 140.7L30.7 141.1Z" fill="#5d7e78"/><path d="M66.8 135.7L68.9 141.0L65.7 141.3Z" fill="#5d7e78"/><path d="M102.0 136.0L104.0 141.3L100.8 141.6Z" fill="#5d7e78"/><path d="M137.1 136.2L139.0 141.6L135.8 141.8Z" fill="#5d7e78"/><path d="M172.3 136.5L174.1 141.9L170.9 142.0Z" fill="#5d7e78"/><path d="M207.4 136.8L209.1 142.3L205.9 142.3Z" fill="#5d7e78"/><path d="M242.6 137.1L244.1 142.6L240.9 142.5Z" fill="#5d7e78"/><path d="M277.5 137.6L279.0 143.1L275.8 143.1Z" fill="#5d7e78"/><path d="M312.5 138.2L313.9 143.6L310.7 143.5Z" fill="#5d7e78"/><path d="M347.5 138.7L348.8 144.0L345.6 143.8Z" fill="#5d7e78"/><path d="M382.4 139.3L383.7 144.3L380.5 144.1Z" fill="#5d7e78"/><path d="M417.3 139.8L418.6 144.6L415.4 144.4Z" fill="#5d7e78"/><path d="M452.5 140.2L453.7 144.9L450.5 144.6Z" fill="#5d7e78"/><path d="M487.7 140.6L488.7 145.2L485.5 144.8Z" fill="#5d7e78"/><path d="M522.8 141.0L523.7 145.5L520.5 145.0Z" fill="#5d7e78"/><path d="M557.9 141.4L558.7 145.8L555.5 145.2Z" fill="#5d7e78"/><path d="M593.0 141.8L593.6 146.1L590.5 145.4Z" fill="#5d7e78"/><path d="M628.0 142.3L628.6 146.4L625.5 145.5Z" fill="#5d7e78"/><path d="M663.0 142.6L663.5 146.6L660.4 145.7Z" fill="#5d7e78"/><path d="M698.0 142.9L698.4 146.8L695.4 145.8Z" fill="#5d7e78"/><path d="M733.0 143.2L733.3 147.0L730.3 146.0Z" fill="#5d7e78"/><path d="M767.9 143.5L768.2 147.2L765.2 146.1Z" fill="#5d7e78"/><path d="M802.9 143.8L803.1 147.5L800.1 146.2Z" fill="#5d7e78"/><path d="M837.7 143.8L837.9 147.5L835.0 146.2Z" fill="#5d7e78"/><path d="M-2.3 165.7L-0.4 171.1L-3.6 171.3Z" fill="#5d7e78"/><path d="M32.5 165.7L34.4 171.1L31.2 171.3Z" fill="#5d7e78"/><path d="M67.7 165.9L69.5 171.4L66.3 171.5Z" fill="#5d7e78"/><path d="M102.8 166.2L104.5 171.7L101.3 171.7Z" fill="#5d7e78"/><path d="M137.9 166.4L139.5 171.9L136.3 171.9Z" fill="#5d7e78"/><path d="M173.0 166.7L174.5 172.2L171.3 172.2Z" fill="#5d7e78"/><path d="M208.1 167.0L209.5 172.5L206.3 172.4Z" fill="#5d7e78"/><path d="M243.2 167.2L244.5 172.8L241.3 172.6Z" fill="#5d7e78"/><path d="M278.0 167.8L279.3 173.4L276.1 173.2Z" fill="#5d7e78"/><path d="M312.8 168.4L314.1 174.0L310.9 173.8Z" fill="#5d7e78"/><path d="M347.7 169.1L349.0 174.4L345.8 174.2Z" fill="#5d7e78"/><path d="M382.5 169.7L383.8 174.7L380.6 174.5Z" fill="#5d7e78"/><path d="M417.3 170.3L418.6 175.1L415.5 174.9Z" fill="#5d7e78"/><path d="M452.5 170.7L453.7 175.3L450.5 175.1Z" fill="#5d7e78"/><path d="M487.6 171.1L488.7 175.6L485.5 175.2Z" fill="#5d7e78"/><path d="M522.7 171.5L523.6 175.9L520.5 175.4Z" fill="#5d7e78"/><path d="M557.8 171.9L558.6 176.2L555.5 175.6Z" fill="#5d7e78"/><path d="M592.8 172.3L593.6 176.5L590.4 175.8Z" fill="#5d7e78"/><path d="M627.9 172.7L628.5 176.8L625.4 176.0Z" fill="#5d7e78"/><path d="M663.0 173.1L663.5 177.0L660.4 176.1Z" fill="#5d7e78"/><path d="M698.2 173.4L698.5 177.3L695.5 176.3Z" fill="#5d7e78"/><path d="M733.3 173.8L733.5 177.6L730.5 176.4Z" fill="#5d7e78"/><path d="M768.4 174.2L768.4 177.9L765.5 176.6Z" fill="#5d7e78"/><path d="M803.5 174.6L803.4 178.2L800.6 176.7Z" fill="#5d7e78"/><path d="M838.3 174.6L838.2 178.2L835.4 176.7Z" fill="#5d7e78"/><path d="M-1.4 196.0L0.2 201.5L-3.0 201.5Z" fill="#5d7e78"/><path d="M33.5 196.0L35.0 201.5L31.8 201.5Z" fill="#5d7e78"/><path d="M68.5 196.2L70.0 201.7L66.8 201.7Z" fill="#5d7e78"/><path d="M103.6 196.4L105.0 202.0L101.8 201.9Z" fill="#5d7e78"/><path d="M138.6 196.7L140.0 202.3L136.8 202.1Z" fill="#5d7e78"/><path d="M173.7 196.9L174.9 202.5L171.8 202.3Z" fill="#5d7e78"/><path d="M208.7 197.2L209.9 202.8L206.7 202.5Z" fill="#5d7e78"/><path d="M243.8 197.4L244.9 203.0L241.7 202.7Z" fill="#5d7e78"/><path d="M278.5 198.1L279.6 203.7L276.4 203.4Z" fill="#5d7e78"/><path d="M313.2 198.7L314.3 204.3L311.1 204.1Z" fill="#5d7e78"/><path d="M347.9 199.4L349.1 204.7L345.9 204.5Z" fill="#5d7e78"/><path d="M382.6 200.1L383.9 205.1L380.7 204.9Z" fill="#5d7e78"/><path d="M417.4 200.7L418.7 205.5L415.5 205.3Z" fill="#5d7e78"/><path d="M452.5 201.1L453.6 205.8L450.5 205.5Z" fill="#5d7e78"/><path d="M487.6 201.5L488.6 206.1L485.4 205.7Z" fill="#5d7e78"/><path d="M522.6 201.9L523.6 206.3L520.4 205.9Z" fill="#5d7e78"/><path d="M557.7 202.3L558.5 206.6L555.4 206.1Z" fill="#5d7e78"/><path d="M592.7 202.8L593.5 206.9L590.3 206.3Z" fill="#5d7e78"/><path d="M627.7 203.2L628.4 207.2L625.3 206.5Z" fill="#5d7e78"/><path d="M663.0 203.6L663.5 207.5L660.5 206.6Z" fill="#5d7e78"/><path d="M698.4 204.0L698.6 207.9L695.6 206.7Z" fill="#5d7e78"/><path d="M733.6 204.4L733.6 208.2L730.7 206.9Z" fill="#5d7e78"/><path d="M768.9 204.9L768.7 208.6L765.9 207.0Z" fill="#5d7e78"/><path d="M804.0 205.4L803.6 209.0L800.9 207.2Z" fill="#5d7e78"/><path d="M838.9 205.4L838.5 209.0L835.8 207.2Z" fill="#5d7e78"/><path d="M-0.4 226.3L0.8 231.9L-2.4 231.7Z" fill="#5d7e78"/><path d="M34.4 226.3L35.7 231.9L32.5 231.7Z" fill="#5d7e78"/><path d="M69.4 226.5L70.6 232.1L67.4 231.9Z" fill="#5d7e78"/><path d="M104.4 226.8L105.5 232.4L102.4 232.1Z" fill="#5d7e78"/><path d="M139.4 227.0L140.5 232.6L137.3 232.3Z" fill="#5d7e78"/><path d="M174.4 227.2L175.4 232.8L172.2 232.5Z" fill="#5d7e78"/><path d="M209.4 227.4L210.3 233.0L207.2 232.7Z" fill="#5d7e78"/><path d="M244.4 227.6L245.3 233.3L242.1 232.8Z" fill="#5d7e78"/><path d="M279.0 228.3L279.9 234.0L276.7 233.6Z" fill="#5d7e78"/><path d="M313.5 229.0L314.5 234.7L311.4 234.3Z" fill="#5d7e78"/><path d="M348.1 229.7L349.2 235.1L346.0 234.8Z" fill="#5d7e78"/><path d="M382.8 230.5L383.9 235.5L380.8 235.3Z" fill="#5d7e78"/><path d="M417.4 231.2L418.7 235.9L415.5 235.7Z" fill="#5d7e78"/><path d="M452.5 231.6L453.6 236.2L450.5 235.9Z" fill="#5d7e78"/><path d="M487.5 232.0L488.6 236.5L485.4 236.1Z" fill="#5d7e78"/><path d="M522.5 232.4L523.5 236.7L520.4 236.3Z" fill="#5d7e78"/><path d="M557.5 232.8L558.5 237.0L555.3 236.5Z" fill="#5d7e78"/><path d="M592.5 233.2L593.4 237.3L590.3 236.7Z" fill="#5d7e78"/><path d="M627.5 233.6L628.3 237.6L625.2 236.9Z" fill="#5d7e78"/><path d="M663.0 234.1L663.5 238.0L660.5 237.0Z" fill="#5d7e78"/><path d="M698.5 234.5L698.7 238.4L695.7 237.2Z" fill="#5d7e78"/><path d="M733.9 235.1L733.8 238.8L730.9 237.3Z" fill="#5d7e78"/><path d="M769.3 235.6L768.8 239.3L766.1 237.5Z" fill="#5d7e78"/><path d="M804.5 236.2L803.8 239.7L801.3 237.8Z" fill="#5d7e78"/><path d="M839.4 236.2L838.7 239.7L836.2 237.8Z" fill="#5d7e78"/><path d="M0.5 256.7L1.4 262.4L-1.7 262.0Z" fill="#5d7e78"/><path d="M35.3 256.7L36.3 262.4L33.1 262.0Z" fill="#5d7e78"/><path d="M70.3 256.9L71.2 262.6L68.0 262.2Z" fill="#5d7e78"/><path d="M105.3 257.1L106.1 262.8L102.9 262.3Z" fill="#5d7e78"/><path d="M140.2 257.3L141.0 263.0L137.8 262.5Z" fill="#5d7e78"/><path d="M175.2 257.5L175.9 263.2L172.7 262.7Z" fill="#5d7e78"/><path d="M210.1 257.7L210.8 263.3L207.6 262.8Z" fill="#5d7e78"/><path d="M245.0 257.8L245.7 263.5L242.5 263.0Z" fill="#5d7e78"/><path d="M279.5 258.6L280.2 264.3L277.0 263.8Z" fill="#5d7e78"/><path d="M313.9 259.3L314.8 265.0L311.6 264.6Z" fill="#5d7e78"/><path d="M348.4 260.1L349.4 265.5L346.2 265.2Z" fill="#5d7e78"/><path d="M382.9 260.9L384.0 265.9L380.8 265.7Z" fill="#5d7e78"/><path d="M417.4 261.6L418.7 266.4L415.5 266.1Z" fill="#5d7e78"/><path d="M452.4 262.0L453.6 266.6L450.4 266.3Z" fill="#5d7e78"/><path d="M487.4 262.4L488.6 266.9L485.4 266.5Z" fill="#5d7e78"/><path d="M522.4 262.9L523.5 267.2L520.3 266.7Z" fill="#5d7e78"/><path d="M557.4 263.3L558.4 267.4L555.2 267.0Z" fill="#5d7e78"/><path d="M592.4 263.7L593.3 267.7L590.2 267.2Z" fill="#5d7e78"/><path d="M627.3 264.1L628.2 268.0L625.1 267.4Z" fill="#5d7e78"/><path d="M663.0 264.5L663.5 268.4L660.5 267.5Z" fill="#5d7e78"/><path d="M698.7 265.1L698.7 268.9L695.8 267.6Z" fill="#5d7e78"/><path d="M734.2 265.7L733.9 269.4L731.1 267.8Z" fill="#5d7e78"/><path d="M769.7 266.4L769.0 270.0L766.4 268.1Z" fill="#5d7e78"/><path d="M805.0 267.1L804.0 270.5L801.7 268.3Z" fill="#5d7e78"/><path d="M839.8 267.1L838.9 270.5L836.5 268.3Z" fill="#5d7e78"/><path d="M0.6 287.2L1.5 292.9L-1.7 292.4Z" fill="#5d7e78"/><path d="M35.5 287.2L36.4 292.9L33.2 292.4Z" fill="#5d7e78"/><path d="M70.5 287.4L71.3 293.1L68.1 292.6Z" fill="#5d7e78"/><path d="M105.5 287.6L106.2 293.3L103.0 292.8Z" fill="#5d7e78"/><path d="M140.5 287.9L141.1 293.5L138.0 293.0Z" fill="#5d7e78"/><path d="M175.4 288.1L176.0 293.8L172.9 293.2Z" fill="#5d7e78"/><path d="M210.4 288.3L211.0 294.0L207.8 293.4Z" fill="#5d7e78"/><path d="M245.4 288.5L245.9 294.2L242.7 293.6Z" fill="#5d7e78"/><path d="M279.9 289.2L280.5 294.9L277.3 294.3Z" fill="#5d7e78"/><path d="M314.5 289.9L315.1 295.6L311.9 295.0Z" fill="#5d7e78"/><path d="M349.0 290.6L349.7 296.1L346.6 295.5Z" fill="#5d7e78"/><path d="M383.6 291.3L384.4 296.4L381.3 296.0Z" fill="#5d7e78"/><path d="M418.2 292.0L419.1 296.8L416.0 296.4Z" fill="#5d7e78"/><path d="M453.2 292.4L454.1 297.1L450.9 296.6Z" fill="#5d7e78"/><path d="M488.2 292.8L489.0 297.4L485.9 296.8Z" fill="#5d7e78"/><path d="M523.2 293.2L523.9 297.6L520.8 297.0Z" fill="#5d7e78"/><path d="M558.2 293.6L558.8 297.9L555.7 297.2Z" fill="#5d7e78"/><path d="M593.2 294.0L593.8 298.2L590.7 297.4Z" fill="#5d7e78"/><path d="M628.1 294.4L628.6 298.4L625.6 297.6Z" fill="#5d7e78"/><path d="M663.7 294.9L663.9 298.9L660.9 297.7Z" fill="#5d7e78"/><path d="M699.3 295.4L699.0 299.3L696.2 297.9Z" fill="#5d7e78"/><path d="M734.7 296.0L734.2 299.8L731.5 298.1Z" fill="#5d7e78"/><path d="M770.1 296.7L769.2 300.3L766.7 298.3Z" fill="#5d7e78"/><path d="M805.4 297.3L804.2 300.8L801.9 298.6Z" fill="#5d7e78"/><path d="M840.2 297.3L839.1 300.8L836.8 298.6Z" fill="#5d7e78"/><path d="M0.8 317.7L1.6 323.3L-1.6 322.9Z" fill="#5d7e78"/><path d="M35.6 317.7L36.4 323.3L33.3 322.9Z" fill="#5d7e78"/><path d="M70.6 317.9L71.4 323.6L68.2 323.1Z" fill="#5d7e78"/><path d="M105.7 318.2L106.3 323.9L103.2 323.3Z" fill="#5d7e78"/><path d="M140.7 318.4L141.3 324.1L138.1 323.5Z" fill="#5d7e78"/><path d="M175.7 318.7L176.2 324.4L173.1 323.8Z" fill="#5d7e78"/><path d="M210.7 319.0L211.1 324.7L208.0 324.0Z" fill="#5d7e78"/><path d="M245.7 319.2L246.0 324.9L242.9 324.2Z" fill="#5d7e78"/><path d="M280.4 319.8L280.7 325.6L277.6 324.8Z" fill="#5d7e78"/><path d="M315.0 320.5L315.4 326.2L312.3 325.5Z" fill="#5d7e78"/><path d="M349.7 321.1L350.1 326.6L347.0 325.9Z" fill="#5d7e78"/><path d="M384.3 321.7L384.8 327.0L381.7 326.3Z" fill="#5d7e78"/><path d="M419.0 322.3L419.6 327.3L416.4 326.6Z" fill="#5d7e78"/><path d="M454.0 322.7L454.5 327.6L451.4 326.8Z" fill="#5d7e78"/><path d="M489.1 323.1L489.5 327.9L486.4 327.0Z" fill="#5d7e78"/><path d="M524.1 323.5L524.4 328.1L521.3 327.2Z" fill="#5d7e78"/><path d="M559.0 323.9L559.3 328.4L556.2 327.4Z" fill="#5d7e78"/><path d="M594.0 324.3L594.2 328.7L591.2 327.6Z" fill="#5d7e78"/><path d="M629.0 324.7L629.1 328.9L626.1 327.8Z" fill="#5d7e78"/><path d="M664.4 325.2L664.2 329.4L661.4 328.0Z" fill="#5d7e78"/><path d="M699.9 325.8L699.3 329.8L696.6 328.2Z" fill="#5d7e78"/><path d="M735.2 326.3L734.4 330.2L731.8 328.4Z" fill="#5d7e78"/><path d="M770.5 326.9L769.4 330.7L767.0 328.6Z" fill="#5d7e78"/><path d="M805.8 327.6L804.4 331.2L802.2 328.9Z" fill="#5d7e78"/><path d="M840.6 327.6L839.3 331.2L837.0 328.9Z" fill="#5d7e78"/><path d="M0.9 348.1L1.7 353.8L-1.5 353.3Z" fill="#5d7e78"/><path d="M35.7 348.1L36.5 353.8L33.3 353.3Z" fill="#5d7e78"/><path d="M70.8 348.4L71.5 354.1L68.3 353.6Z" fill="#5d7e78"/><path d="M105.9 348.7L106.4 354.4L103.3 353.8Z" fill="#5d7e78"/><path d="M140.9 349.0L141.4 354.7L138.3 354.1Z" fill="#5d7e78"/><path d="M176.0 349.3L176.3 355.0L173.2 354.3Z" fill="#5d7e78"/><path d="M211.0 349.6L211.3 355.3L208.2 354.6Z" fill="#5d7e78"/><path d="M246.0 349.9L246.2 355.6L243.1 354.8Z" fill="#5d7e78"/><path d="M280.8 350.5L280.9 356.2L277.8 355.4Z" fill="#5d7e78"/><path d="M315.6 351.1L315.7 356.8L312.6 355.9Z" fill="#5d7e78"/><path d="M350.3 351.6L350.4 357.2L347.4 356.3Z" fill="#5d7e78"/><path d="M385.1 352.2L385.2 357.5L382.2 356.6Z" fill="#5d7e78"/><path d="M419.8 352.7L420.0 357.8L416.9 356.9Z" fill="#5d7e78"/><path d="M454.9 353.2L455.0 358.1L451.9 357.1Z" fill="#5d7e78"/><path d="M489.9 353.6L489.9 358.4L486.9 357.3Z" fill="#5d7e78"/><path d="M524.9 354.0L524.8 358.7L521.8 357.5Z" fill="#5d7e78"/><path d="M559.9 354.4L559.7 358.9L556.8 357.7Z" fill="#5d7e78"/><path d="M594.9 354.8L594.6 359.2L591.7 357.9Z" fill="#5d7e78"/><path d="M629.8 355.2L629.5 359.5L626.6 358.1Z" fill="#5d7e78"/><path d="M665.2 355.7L664.6 359.9L661.8 358.3Z" fill="#5d7e78"/><path d="M700.5 356.2L699.7 360.3L697.0 358.5Z" fill="#5d7e78"/><path d="M735.8 356.7L734.7 360.7L732.2 358.7Z" fill="#5d7e78"/><path d="M771.0 357.2L769.7 361.1L767.3 358.9Z" fill="#5d7e78"/><path d="M806.2 357.8L804.6 361.5L802.4 359.2Z" fill="#5d7e78"/><path d="M841.0 357.8L839.5 361.5L837.3 359.2Z" fill="#5d7e78"/><path d="M1.0 378.6L1.8 384.3L-1.4 383.8Z" fill="#5d7e78"/><path d="M35.9 378.6L36.6 384.3L33.4 383.8Z" fill="#5d7e78"/><path d="M71.0 378.9L71.6 384.6L68.4 384.0Z" fill="#5d7e78"/><path d="M106.1 379.2L106.6 385.0L103.4 384.3Z" fill="#5d7e78"/><path d="M141.2 379.6L141.5 385.3L138.4 384.6Z" fill="#5d7e78"/><path d="M176.2 379.9L176.5 385.7L173.4 384.9Z" fill="#5d7e78"/><path d="M211.3 380.3L211.4 386.0L208.3 385.2Z" fill="#5d7e78"/><path d="M246.3 380.6L246.3 386.4L243.3 385.5Z" fill="#5d7e78"/><path d="M281.2 381.2L281.2 386.9L278.1 386.0Z" fill="#5d7e78"/><path d="M316.1 381.7L315.9 387.4L312.9 386.4Z" fill="#5d7e78"/><path d="M350.9 382.2L350.8 387.7L347.8 386.7Z" fill="#5d7e78"/><path d="M385.8 382.7L385.6 388.1L382.6 387.0Z" fill="#5d7e78"/><path d="M420.6 383.2L420.5 388.4L417.4 387.3Z" fill="#5d7e78"/><path d="M455.7 383.6L455.4 388.7L452.4 387.5Z" fill="#5d7e78"/><path d="M490.7 384.1L490.3 388.9L487.4 387.7Z" fill="#5d7e78"/><path d="M525.7 384.5L525.3 389.2L522.4 387.9Z" fill="#5d7e78"/><path d="M560.7 384.9L560.2 389.5L557.3 388.1Z" fill="#5d7e78"/><path d="M595.7 385.3L595.1 389.8L592.3 388.3Z" fill="#5d7e78"/><path d="M630.7 385.7L629.9 390.1L627.2 388.5Z" fill="#5d7e78"/><path d="M665.9 386.2L665.0 390.4L662.3 388.6Z" fill="#5d7e78"/><path d="M701.1 386.6L700.0 390.8L697.4 388.8Z" fill="#5d7e78"/><path d="M736.3 387.1L734.9 391.1L732.5 389.0Z" fill="#5d7e78"/><path d="M771.4 387.6L769.9 391.5L767.6 389.2Z" fill="#5d7e78"/><path d="M806.6 388.1L804.8 391.8L802.7 389.5Z" fill="#5d7e78"/><path d="M841.4 388.1L839.7 391.8L837.5 389.5Z" fill="#5d7e78"/><path d="M1.2 409.0L1.8 414.7L-1.3 414.2Z" fill="#5d7e78"/><path d="M36.0 409.0L36.7 414.7L33.5 414.2Z" fill="#5d7e78"/><path d="M71.1 409.4L71.7 415.1L68.5 414.5Z" fill="#5d7e78"/><path d="M106.3 409.8L106.7 415.5L103.5 414.8Z" fill="#5d7e78"/><path d="M141.4 410.2L141.6 415.9L138.5 415.1Z" fill="#5d7e78"/><path d="M176.5 410.6L176.6 416.3L173.5 415.5Z" fill="#5d7e78"/><path d="M211.6 410.9L211.6 416.7L208.5 415.8Z" fill="#5d7e78"/><path d="M246.6 411.3L246.5 417.1L243.4 416.1Z" fill="#5d7e78"/><path d="M281.6 411.8L281.4 417.5L278.3 416.5Z" fill="#5d7e78"/><path d="M316.6 412.3L316.2 418.0L313.2 416.9Z" fill="#5d7e78"/><path d="M351.6 412.8L351.1 418.3L348.1 417.2Z" fill="#5d7e78"/><path d="M386.5 413.3L386.0 418.6L383.1 417.4Z" fill="#5d7e78"/><path d="M421.4 413.8L420.9 419.0L418.0 417.7Z" fill="#5d7e78"/><path d="M456.5 414.2L455.8 419.3L453.0 417.9Z" fill="#5d7e78"/><path d="M491.6 414.6L490.8 419.6L487.9 418.1Z" fill="#5d7e78"/><path d="M526.6 415.1L525.7 419.8L522.9 418.3Z" fill="#5d7e78"/><path d="M561.6 415.5L560.6 420.1L557.9 418.5Z" fill="#5d7e78"/><path d="M596.6 415.9L595.5 420.4L592.8 418.7Z" fill="#5d7e78"/><path d="M631.5 416.4L630.4 420.7L627.8 418.9Z" fill="#5d7e78"/><path d="M666.6 416.7L665.3 421.0L662.8 419.0Z" fill="#5d7e78"/><path d="M701.8 417.1L700.3 421.3L697.9 419.2Z" fill="#5d7e78"/><path d="M736.9 417.5L735.2 421.6L732.9 419.4Z" fill="#5d7e78"/><path d="M771.9 417.9L770.1 421.9L767.9 419.6Z" fill="#5d7e78"/><path d="M807.0 418.3L805.0 422.2L802.9 419.8Z" fill="#5d7e78"/><path d="M841.8 418.3L839.9 422.2L837.8 419.8Z" fill="#5d7e78"/><path d="M1.3 439.5L1.9 445.2L-1.2 444.6Z" fill="#5d7e78"/><path d="M36.1 439.5L36.7 445.2L33.6 444.6Z" fill="#5d7e78"/><path d="M71.3 439.9L71.8 445.6L68.6 445.0Z" fill="#5d7e78"/><path d="M106.5 440.3L106.8 446.0L103.7 445.3Z" fill="#5d7e78"/><path d="M141.6 440.8L141.8 446.5L138.7 445.7Z" fill="#5d7e78"/><path d="M176.7 441.2L176.7 446.9L173.7 446.0Z" fill="#5d7e78"/><path d="M211.8 441.6L211.7 447.3L208.6 446.4Z" fill="#5d7e78"/><path d="M246.9 442.1L246.6 447.8L243.6 446.7Z" fill="#5d7e78"/><path d="M282.0 442.5L281.6 448.2L278.6 447.1Z" fill="#5d7e78"/><path d="M317.1 443.0L316.5 448.6L313.5 447.4Z" fill="#5d7e78"/><path d="M352.2 443.4L351.4 448.9L348.5 447.6Z" fill="#5d7e78"/><path d="M387.2 443.9L386.4 449.3L383.5 447.8Z" fill="#5d7e78"/><path d="M422.3 444.4L421.3 449.6L418.5 448.1Z" fill="#5d7e78"/><path d="M457.3 444.8L456.3 449.9L453.5 448.3Z" fill="#5d7e78"/><path d="M492.4 445.3L491.2 450.2L488.5 448.5Z" fill="#5d7e78"/><path d="M527.4 445.7L526.1 450.5L523.5 448.7Z" fill="#5d7e78"/><path d="M562.4 446.2L561.0 450.8L558.4 448.9Z" fill="#5d7e78"/><path d="M597.4 446.6L595.9 451.1L593.4 449.1Z" fill="#5d7e78"/><path d="M632.4 447.1L630.8 451.4L628.3 449.3Z" fill="#5d7e78"/><path d="M667.4 447.4L665.7 451.6L663.3 449.5Z" fill="#5d7e78"/><path d="M702.4 447.7L700.6 451.8L698.3 449.6Z" fill="#5d7e78"/><path d="M737.4 448.0L735.5 452.1L733.3 449.8Z" fill="#5d7e78"/><path d="M772.4 448.3L770.4 452.3L768.2 449.9Z" fill="#5d7e78"/><path d="M807.4 448.6L805.3 452.5L803.2 450.1Z" fill="#5d7e78"/><path d="M842.2 448.6L840.1 452.5L838.0 450.1Z" fill="#5d7e78"/><path d="M1.4 470.0L2.0 475.7L-1.2 475.1Z" fill="#5d7e78"/><path d="M36.3 470.0L36.8 475.7L33.7 475.1Z" fill="#5d7e78"/><path d="M71.5 470.4L71.9 476.1L68.7 475.5Z" fill="#5d7e78"/><path d="M106.6 470.9L106.9 476.6L103.8 475.8Z" fill="#5d7e78"/><path d="M141.8 471.3L141.9 477.1L138.8 476.2Z" fill="#5d7e78"/><path d="M176.9 471.8L176.8 477.5L173.8 476.6Z" fill="#5d7e78"/><path d="M212.1 472.3L211.8 478.0L208.8 477.0Z" fill="#5d7e78"/><path d="M247.1 472.8L246.7 478.5L243.7 477.4Z" fill="#5d7e78"/><path d="M282.4 473.2L281.7 478.9L278.8 477.7Z" fill="#5d7e78"/><path d="M317.6 473.7L316.7 479.2L313.8 477.9Z" fill="#5d7e78"/><path d="M352.8 474.1L351.8 479.6L348.9 478.1Z" fill="#5d7e78"/><path d="M387.9 474.6L386.8 479.9L384.0 478.3Z" fill="#5d7e78"/><path d="M423.1 475.1L421.7 480.2L419.0 478.5Z" fill="#5d7e78"/><path d="M458.2 475.5L456.7 480.5L454.0 478.7Z" fill="#5d7e78"/><path d="M493.2 476.0L491.6 480.9L489.0 479.0Z" fill="#5d7e78"/><path d="M528.3 476.5L526.5 481.2L524.0 479.2Z" fill="#5d7e78"/><path d="M563.3 476.9L561.4 481.5L559.0 479.4Z" fill="#5d7e78"/><path d="M598.2 477.4L596.3 481.8L594.0 479.6Z" fill="#5d7e78"/><path d="M633.2 477.9L631.2 482.1L628.9 479.9Z" fill="#5d7e78"/><path d="M668.1 478.1L666.0 482.3L663.8 480.0Z" fill="#5d7e78"/><path d="M703.1 478.3L700.9 482.4L698.7 480.1Z" fill="#5d7e78"/><path d="M738.0 478.5L735.8 482.6L733.7 480.2Z" fill="#5d7e78"/><path d="M772.9 478.7L770.6 482.7L768.6 480.3Z" fill="#5d7e78"/><path d="M807.8 478.9L805.5 482.9L803.5 480.4Z" fill="#5d7e78"/><path d="M842.6 478.9L840.3 482.9L838.3 480.4Z" fill="#5d7e78"/><path d="M1.5 500.4L2.1 506.1L-1.1 505.5Z" fill="#5d7e78"/><path d="M36.4 500.4L36.9 506.1L33.8 505.5Z" fill="#5d7e78"/><path d="M71.6 500.9L72.0 506.6L68.8 505.9Z" fill="#5d7e78"/><path d="M106.8 501.4L107.0 507.1L103.9 506.3Z" fill="#5d7e78"/><path d="M142.0 501.9L142.0 507.7L138.9 506.8Z" fill="#5d7e78"/><path d="M177.2 502.5L177.0 508.2L173.9 507.2Z" fill="#5d7e78"/><path d="M212.3 503.0L211.9 508.7L208.9 507.6Z" fill="#5d7e78"/><path d="M247.4 503.5L246.8 509.2L243.8 508.0Z" fill="#5d7e78"/><path d="M282.7 503.9L281.9 509.6L279.0 508.2Z" fill="#5d7e78"/><path d="M318.1 504.4L317.0 509.9L314.2 508.4Z" fill="#5d7e78"/><path d="M353.4 504.8L352.1 510.2L349.3 508.6Z" fill="#5d7e78"/><path d="M388.6 505.3L387.1 510.6L384.4 508.8Z" fill="#5d7e78"/><path d="M423.9 505.8L422.1 510.9L419.5 509.0Z" fill="#5d7e78"/><path d="M459.0 506.3L457.1 511.2L454.6 509.3Z" fill="#5d7e78"/><path d="M494.0 506.8L492.0 511.6L489.6 509.5Z" fill="#5d7e78"/><path d="M529.1 507.3L526.9 511.9L524.6 509.7Z" fill="#5d7e78"/><path d="M564.1 507.7L561.8 512.2L559.6 510.0Z" fill="#5d7e78"/><path d="M599.1 508.2L596.7 512.6L594.5 510.2Z" fill="#5d7e78"/><path d="M634.0 508.7L631.6 512.9L629.5 510.5Z" fill="#5d7e78"/><path d="M668.9 508.8L666.4 513.0L664.3 510.5Z" fill="#5d7e78"/><path d="M703.7 508.9L701.2 513.0L699.2 510.5Z" fill="#5d7e78"/><path d="M738.6 509.0L736.0 513.1L734.0 510.6Z" fill="#5d7e78"/><path d="M773.4 509.1L770.9 513.2L768.9 510.6Z" fill="#5d7e78"/><path d="M808.2 509.2L805.7 513.2L803.7 510.7Z" fill="#5d7e78"/><path d="M843.1 509.2L840.5 513.2L838.6 510.7Z" fill="#5d7e78"/><path d="M1.4 531.0L2.0 536.7L-1.2 536.1Z" fill="#5d7e78"/><path d="M36.3 531.0L36.8 536.7L33.7 536.1Z" fill="#5d7e78"/><path d="M71.5 531.4L71.9 537.2L68.8 536.5Z" fill="#5d7e78"/><path d="M106.8 531.9L106.9 537.6L103.8 536.8Z" fill="#5d7e78"/><path d="M142.0 532.4L142.0 538.1L138.9 537.2Z" fill="#5d7e78"/><path d="M177.2 532.9L176.9 538.6L173.9 537.6Z" fill="#5d7e78"/><path d="M212.3 533.4L211.9 539.1L208.9 538.0Z" fill="#5d7e78"/><path d="M247.5 533.9L246.8 539.6L243.9 538.4Z" fill="#5d7e78"/><path d="M282.8 534.4L281.9 540.0L279.1 538.6Z" fill="#5d7e78"/><path d="M318.2 534.9L317.0 540.4L314.2 538.9Z" fill="#5d7e78"/><path d="M353.5 535.4L352.1 540.7L349.4 539.1Z" fill="#5d7e78"/><path d="M388.8 535.9L387.2 541.1L384.5 539.3Z" fill="#5d7e78"/><path d="M424.0 536.5L422.2 541.5L419.6 539.6Z" fill="#5d7e78"/><path d="M459.0 536.9L457.1 541.8L454.6 539.8Z" fill="#5d7e78"/><path d="M494.0 537.4L492.0 542.1L489.6 540.0Z" fill="#5d7e78"/><path d="M529.0 537.8L526.9 542.4L524.6 540.2Z" fill="#5d7e78"/><path d="M564.0 538.3L561.8 542.7L559.5 540.4Z" fill="#5d7e78"/><path d="M598.9 538.7L596.6 543.0L594.5 540.7Z" fill="#5d7e78"/><path d="M633.9 539.2L631.5 543.3L629.4 540.9Z" fill="#5d7e78"/><path d="M668.7 539.3L666.3 543.4L664.2 540.9Z" fill="#5d7e78"/><path d="M703.6 539.4L701.1 543.5L699.1 541.0Z" fill="#5d7e78"/><path d="M738.4 539.5L736.0 543.6L734.0 541.1Z" fill="#5d7e78"/><path d="M773.2 539.7L770.8 543.6L768.8 541.1Z" fill="#5d7e78"/><path d="M808.1 539.8L805.6 543.7L803.7 541.2Z" fill="#5d7e78"/><path d="M842.9 539.8L840.5 543.7L838.5 541.2Z" fill="#5d7e78"/><path d="M1.3 561.5L1.9 567.2L-1.3 566.6Z" fill="#5d7e78"/><path d="M36.2 561.5L36.7 567.2L33.6 566.6Z" fill="#5d7e78"/><path d="M71.5 561.9L71.8 567.7L68.7 567.0Z" fill="#5d7e78"/><path d="M106.7 562.4L106.9 568.1L103.8 567.3Z" fill="#5d7e78"/><path d="M142.0 562.9L141.9 568.6L138.9 567.7Z" fill="#5d7e78"/><path d="M177.2 563.4L176.9 569.1L173.9 568.1Z" fill="#5d7e78"/><path d="M212.4 563.9L211.9 569.6L208.9 568.5Z" fill="#5d7e78"/><path d="M247.5 564.4L246.9 570.1L243.9 568.8Z" fill="#5d7e78"/><path d="M282.9 564.9L282.0 570.5L279.1 569.1Z" fill="#5d7e78"/><path d="M318.3 565.4L317.1 570.9L314.3 569.3Z" fill="#5d7e78"/><path d="M353.6 566.0L352.2 571.3L349.5 569.6Z" fill="#5d7e78"/><path d="M388.9 566.6L387.2 571.7L384.6 569.8Z" fill="#5d7e78"/><path d="M424.1 567.1L422.2 572.1L419.7 570.1Z" fill="#5d7e78"/><path d="M459.1 567.6L457.1 572.4L454.7 570.3Z" fill="#5d7e78"/><path d="M494.0 568.0L492.0 572.6L489.6 570.5Z" fill="#5d7e78"/><path d="M529.0 568.4L526.8 572.9L524.5 570.7Z" fill="#5d7e78"/><path d="M563.9 568.8L561.7 573.2L559.5 570.9Z" fill="#5d7e78"/><path d="M598.8 569.2L596.5 573.5L594.4 571.1Z" fill="#5d7e78"/><path d="M633.7 569.6L631.4 573.7L629.3 571.3Z" fill="#5d7e78"/><path d="M668.5 569.8L666.2 573.8L664.1 571.4Z" fill="#5d7e78"/><path d="M703.4 569.9L701.0 573.9L699.0 571.5Z" fill="#5d7e78"/><path d="M738.2 570.1L735.9 574.0L733.9 571.5Z" fill="#5d7e78"/><path d="M773.1 570.2L770.7 574.1L768.7 571.6Z" fill="#5d7e78"/><path d="M808.0 570.3L805.5 574.2L803.6 571.7Z" fill="#5d7e78"/><path d="M842.8 570.3L840.4 574.2L838.4 571.7Z" fill="#5d7e78"/><path d="M1.2 592.0L1.8 597.7L-1.3 597.2Z" fill="#5d7e78"/><path d="M36.0 592.0L36.7 597.7L33.5 597.2Z" fill="#5d7e78"/><path d="M71.4 592.5L71.8 598.2L68.6 597.5Z" fill="#5d7e78"/><path d="M106.7 592.9L106.9 598.6L103.8 597.8Z" fill="#5d7e78"/><path d="M142.0 593.4L141.9 599.1L138.8 598.2Z" fill="#5d7e78"/><path d="M177.2 593.9L176.9 599.6L173.9 598.5Z" fill="#5d7e78"/><path d="M212.4 594.3L211.9 600.1L209.0 598.9Z" fill="#5d7e78"/><path d="M247.6 594.8L246.9 600.5L244.0 599.3Z" fill="#5d7e78"/><path d="M283.0 595.4L282.0 600.9L279.2 599.5Z" fill="#5d7e78"/><path d="M318.4 596.0L317.1 601.4L314.4 599.8Z" fill="#5d7e78"/><path d="M353.7 596.6L352.2 601.8L349.5 600.0Z" fill="#5d7e78"/><path d="M389.0 597.2L387.2 602.2L384.7 600.3Z" fill="#5d7e78"/><path d="M424.2 597.8L422.3 602.7L419.8 600.6Z" fill="#5d7e78"/><path d="M459.1 598.2L457.1 602.9L454.7 600.8Z" fill="#5d7e78"/><path d="M494.0 598.6L492.0 603.2L489.6 601.0Z" fill="#5d7e78"/><path d="M528.9 599.0L526.8 603.4L524.5 601.2Z" fill="#5d7e78"/><path d="M563.8 599.3L561.6 603.7L559.4 601.4Z" fill="#5d7e78"/><path d="M598.6 599.7L596.5 603.9L594.3 601.6Z" fill="#5d7e78"/><path d="M633.5 600.1L631.3 604.2L629.2 601.7Z" fill="#5d7e78"/><path d="M668.4 600.2L666.1 604.3L664.0 601.8Z" fill="#5d7e78"/><path d="M703.2 600.4L700.9 604.4L698.9 601.9Z" fill="#5d7e78"/><path d="M738.1 600.6L735.8 604.5L733.8 602.0Z" fill="#5d7e78"/><path d="M773.0 600.7L770.6 604.6L768.6 602.1Z" fill="#5d7e78"/><path d="M807.8 600.9L805.4 604.7L803.5 602.1Z" fill="#5d7e78"/><path d="M842.7 600.9L840.3 604.7L838.4 602.1Z" fill="#5d7e78"/><path d="M1.1 622.6L1.7 628.3L-1.4 627.7Z" fill="#5d7e78"/><path d="M35.9 622.6L36.6 628.3L33.4 627.7Z" fill="#5d7e78"/><path d="M71.3 623.0L71.7 628.7L68.6 628.0Z" fill="#5d7e78"/><path d="M106.6 623.4L106.8 629.1L103.7 628.3Z" fill="#5d7e78"/><path d="M141.9 623.9L141.9 629.6L138.8 628.7Z" fill="#5d7e78"/><path d="M177.2 624.3L176.9 630.0L173.9 629.0Z" fill="#5d7e78"/><path d="M212.5 624.8L212.0 630.5L209.0 629.3Z" fill="#5d7e78"/><path d="M247.7 625.3L246.9 631.0L244.0 629.7Z" fill="#5d7e78"/><path d="M283.1 625.9L282.1 631.4L279.2 630.0Z" fill="#5d7e78"/><path d="M318.5 626.5L317.2 631.9L314.4 630.2Z" fill="#5d7e78"/><path d="M353.8 627.2L352.3 632.3L349.6 630.5Z" fill="#5d7e78"/><path d="M389.1 627.8L387.3 632.8L384.7 630.8Z" fill="#5d7e78"/><path d="M424.3 628.5L422.3 633.3L419.9 631.2Z" fill="#5d7e78"/><path d="M459.2 628.9L457.1 633.5L454.7 631.3Z" fill="#5d7e78"/><path d="M494.0 629.2L491.9 633.7L489.6 631.5Z" fill="#5d7e78"/><path d="M528.9 629.5L526.8 633.9L524.5 631.7Z" fill="#5d7e78"/><path d="M563.7 629.9L561.6 634.1L559.3 631.8Z" fill="#5d7e78"/><path d="M598.5 630.2L596.4 634.4L594.2 632.0Z" fill="#5d7e78"/><path d="M633.3 630.5L631.2 634.6L629.1 632.2Z" fill="#5d7e78"/><path d="M668.2 630.7L666.0 634.7L663.9 632.3Z" fill="#5d7e78"/><path d="M703.1 630.9L700.9 634.8L698.8 632.4Z" fill="#5d7e78"/><path d="M737.9 631.1L735.7 634.9L733.7 632.4Z" fill="#5d7e78"/><path d="M772.8 631.3L770.5 635.1L768.6 632.5Z" fill="#5d7e78"/><path d="M807.7 631.4L805.4 635.2L803.4 632.6Z" fill="#5d7e78"/><path d="M842.5 631.4L840.2 635.2L838.3 632.6Z" fill="#5d7e78"/><path d="M1.0 653.1L1.7 658.8L-1.5 658.3Z" fill="#5d7e78"/><path d="M35.8 653.1L36.5 658.8L33.3 658.3Z" fill="#5d7e78"/><path d="M71.2 653.5L71.7 659.2L68.5 658.6Z" fill="#5d7e78"/><path d="M106.6 653.9L106.8 659.6L103.7 658.8Z" fill="#5d7e78"/><path d="M141.9 654.3L141.9 660.1L138.8 659.2Z" fill="#5d7e78"/><path d="M177.2 654.8L176.9 660.5L173.9 659.5Z" fill="#5d7e78"/><path d="M212.5 655.3L212.0 661.0L209.0 659.8Z" fill="#5d7e78"/><path d="M247.7 655.7L247.0 661.4L244.0 660.1Z" fill="#5d7e78"/><path d="M283.2 656.4L282.1 661.9L279.3 660.4Z" fill="#5d7e78"/><path d="M318.6 657.1L317.2 662.3L314.5 660.7Z" fill="#5d7e78"/><path d="M353.9 657.7L352.3 662.8L349.7 661.0Z" fill="#5d7e78"/><path d="M389.2 658.5L387.3 663.3L384.8 661.3Z" fill="#5d7e78"/><path d="M424.4 659.2L422.3 663.8L419.9 661.7Z" fill="#5d7e78"/><path d="M459.2 659.5L457.1 664.0L454.8 661.8Z" fill="#5d7e78"/><path d="M494.0 659.8L491.9 664.2L489.6 662.0Z" fill="#5d7e78"/><path d="M528.8 660.1L526.7 664.4L524.5 662.2Z" fill="#5d7e78"/><path d="M563.6 660.4L561.5 664.6L559.3 662.3Z" fill="#5d7e78"/><path d="M598.4 660.7L596.3 664.8L594.1 662.5Z" fill="#5d7e78"/><path d="M633.1 661.0L631.1 665.0L628.9 662.6Z" fill="#5d7e78"/><path d="M668.0 661.2L665.9 665.1L663.8 662.7Z" fill="#5d7e78"/><path d="M702.9 661.4L700.8 665.3L698.7 662.8Z" fill="#5d7e78"/><path d="M737.8 661.6L735.6 665.4L733.6 662.9Z" fill="#5d7e78"/><path d="M772.7 661.8L770.4 665.5L768.5 663.0Z" fill="#5d7e78"/><path d="M807.5 662.0L805.3 665.7L803.4 663.1Z" fill="#5d7e78"/><path d="M842.4 662.0L840.1 665.7L838.2 663.1Z" fill="#5d7e78"/><path d="M0.9 683.6L1.6 689.3L-1.6 688.8Z" fill="#5d7e78"/><path d="M35.7 683.6L36.4 689.3L33.3 688.8Z" fill="#5d7e78"/><path d="M71.1 684.0L71.6 689.7L68.5 689.1Z" fill="#5d7e78"/><path d="M106.5 684.4L106.7 690.1L103.6 689.3Z" fill="#5d7e78"/><path d="M141.9 684.8L141.8 690.6L138.8 689.6Z" fill="#5d7e78"/><path d="M177.2 685.3L176.9 691.0L173.9 689.9Z" fill="#5d7e78"/><path d="M212.5 685.7L212.0 691.4L209.0 690.2Z" fill="#5d7e78"/><path d="M247.8 686.2L247.0 691.8L244.1 690.5Z" fill="#5d7e78"/><path d="M283.3 686.9L282.2 692.3L279.3 690.8Z" fill="#5d7e78"/><path d="M318.7 687.6L317.3 692.8L314.6 691.2Z" fill="#5d7e78"/><path d="M354.0 688.3L352.3 693.4L349.7 691.5Z" fill="#5d7e78"/><path d="M389.2 689.1L387.4 693.9L384.9 691.8Z" fill="#5d7e78"/><path d="M424.4 689.9L422.3 694.4L420.0 692.2Z" fill="#5d7e78"/><path d="M459.2 690.1L457.1 694.6L454.8 692.4Z" fill="#5d7e78"/><path d="M494.0 690.4L491.9 694.8L489.6 692.5Z" fill="#5d7e78"/><path d="M528.7 690.7L526.7 694.9L524.4 692.6Z" fill="#5d7e78"/><path d="M563.5 690.9L561.4 695.1L559.2 692.8Z" fill="#5d7e78"/><path d="M598.2 691.2L596.2 695.3L594.0 692.9Z" fill="#5d7e78"/><path d="M633.0 691.5L631.0 695.4L628.8 693.1Z" fill="#5d7e78"/><path d="M667.9 691.7L665.8 695.6L663.7 693.2Z" fill="#5d7e78"/><path d="M702.8 691.9L700.7 695.7L698.6 693.3Z" fill="#5d7e78"/><path d="M737.6 692.1L735.5 695.9L733.5 693.4Z" fill="#5d7e78"/><path d="M772.5 692.3L770.3 696.0L768.4 693.5Z" fill="#5d7e78"/><path d="M807.4 692.5L805.2 696.1L803.3 693.6Z" fill="#5d7e78"/><path d="M842.2 692.5L840.0 696.1L838.1 693.6Z" fill="#5d7e78"/><path d="M0.8 714.2L1.5 719.9L-1.6 719.4Z" fill="#5d7e78"/><path d="M35.6 714.2L36.4 719.9L33.2 719.4Z" fill="#5d7e78"/><path d="M71.1 714.5L71.5 720.2L68.4 719.6Z" fill="#5d7e78"/><path d="M106.5 714.9L106.7 720.6L103.6 719.9Z" fill="#5d7e78"/><path d="M141.9 715.3L141.8 721.0L138.8 720.1Z" fill="#5d7e78"/><path d="M177.2 715.7L176.9 721.4L173.9 720.4Z" fill="#5d7e78"/><path d="M212.6 716.2L212.0 721.9L209.0 720.7Z" fill="#5d7e78"/><path d="M247.9 716.6L247.0 722.3L244.1 720.9Z" fill="#5d7e78"/><path d="M283.3 717.4L282.2 722.8L279.4 721.3Z" fill="#5d7e78"/><path d="M318.7 718.1L317.3 723.3L314.6 721.6Z" fill="#5d7e78"/><path d="M354.1 718.9L352.4 723.9L349.8 722.0Z" fill="#5d7e78"/><path d="M389.3 719.7L387.4 724.4L385.0 722.4Z" fill="#5d7e78"/><path d="M424.5 720.5L422.3 725.0L420.1 722.7Z" fill="#5d7e78"/><path d="M459.2 720.8L457.1 725.1L454.8 722.9Z" fill="#5d7e78"/><path d="M493.9 721.0L491.9 725.3L489.6 723.0Z" fill="#5d7e78"/><path d="M528.7 721.2L526.6 725.4L524.4 723.1Z" fill="#5d7e78"/><path d="M563.4 721.5L561.4 725.6L559.2 723.2Z" fill="#5d7e78"/><path d="M598.1 721.7L596.1 725.7L594.0 723.4Z" fill="#5d7e78"/><path d="M632.8 721.9L630.9 725.8L628.7 723.5Z" fill="#5d7e78"/><path d="M667.7 722.2L665.7 726.0L663.6 723.6Z" fill="#5d7e78"/><path d="M702.6 722.4L700.6 726.2L698.5 723.7Z" fill="#5d7e78"/><path d="M737.5 722.6L735.4 726.3L733.4 723.8Z" fill="#5d7e78"/><path d="M772.4 722.9L770.3 726.5L768.3 723.9Z" fill="#5d7e78"/><path d="M807.2 723.1L805.1 726.6L803.2 724.1Z" fill="#5d7e78"/><path d="M842.1 723.1L839.9 726.6L838.0 724.1Z" fill="#5d7e78"/><path d="M0.7 744.7L1.4 750.4L-1.7 749.9Z" fill="#5d7e78"/><path d="M35.5 744.7L36.3 750.4L33.1 749.9Z" fill="#5d7e78"/><path d="M71.0 745.0L71.5 750.8L68.3 750.1Z" fill="#5d7e78"/><path d="M106.4 745.4L106.7 751.1L103.6 750.4Z" fill="#5d7e78"/><path d="M141.9 745.8L141.8 751.5L138.7 750.6Z" fill="#5d7e78"/><path d="M177.2 746.2L176.9 751.9L173.9 750.8Z" fill="#5d7e78"/><path d="M212.6 746.6L212.0 752.3L209.0 751.1Z" fill="#5d7e78"/><path d="M247.9 747.1L247.1 752.7L244.2 751.4Z" fill="#5d7e78"/><path d="M283.4 747.9L282.2 753.3L279.4 751.7Z" fill="#5d7e78"/><path d="M318.8 748.7L317.4 753.8L314.7 752.1Z" fill="#5d7e78"/><path d="M354.2 749.5L352.4 754.4L349.9 752.5Z" fill="#5d7e78"/><path d="M389.4 750.4L387.4 755.0L385.0 752.9Z" fill="#5d7e78"/><path d="M424.6 751.2L422.3 755.6L420.1 753.3Z" fill="#5d7e78"/><path d="M459.2 751.4L457.1 755.7L454.9 753.4Z" fill="#5d7e78"/><path d="M493.9 751.6L491.8 755.8L489.6 753.5Z" fill="#5d7e78"/><path d="M528.6 751.8L526.6 755.9L524.4 753.6Z" fill="#5d7e78"/><path d="M563.3 752.0L561.3 756.0L559.1 753.7Z" fill="#5d7e78"/><path d="M598.0 752.2L596.1 756.2L593.9 753.8Z" fill="#5d7e78"/><path d="M632.6 752.4L630.8 756.3L628.6 753.9Z" fill="#5d7e78"/><path d="M667.5 752.6L665.7 756.4L663.5 754.1Z" fill="#5d7e78"/><path d="M702.4 752.9L700.5 756.6L698.4 754.2Z" fill="#5d7e78"/><path d="M737.3 753.1L735.3 756.8L733.3 754.3Z" fill="#5d7e78"/><path d="M772.2 753.4L770.2 757.0L768.2 754.4Z" fill="#5d7e78"/><path d="M807.1 753.6L805.0 757.1L803.1 754.5Z" fill="#5d7e78"/><path d="M841.9 753.6L839.8 757.1L838.0 754.5Z" fill="#5d7e78"/><path d="M0.7 775.1L1.4 780.8L-1.7 780.3Z" fill="#5d7e78"/><path d="M35.5 775.1L36.3 780.8L33.1 780.3Z" fill="#5d7e78"/><path d="M71.0 775.4L71.5 781.1L68.3 780.5Z" fill="#5d7e78"/><path d="M106.4 775.8L106.7 781.5L103.6 780.7Z" fill="#5d7e78"/><path d="M141.9 776.2L141.8 781.9L138.7 781.0Z" fill="#5d7e78"/><path d="M177.2 776.6L176.9 782.3L173.9 781.2Z" fill="#5d7e78"/><path d="M212.6 777.0L212.0 782.7L209.0 781.5Z" fill="#5d7e78"/><path d="M247.9 777.5L247.1 783.1L244.2 781.7Z" fill="#5d7e78"/><path d="M283.4 778.3L282.2 783.7L279.4 782.1Z" fill="#5d7e78"/><path d="M318.8 779.1L317.4 784.2L314.7 782.5Z" fill="#5d7e78"/><path d="M354.2 779.9L352.4 784.8L349.9 782.9Z" fill="#5d7e78"/><path d="M389.4 780.8L387.4 785.4L385.0 783.3Z" fill="#5d7e78"/><path d="M424.6 781.6L422.3 786.0L420.1 783.7Z" fill="#5d7e78"/><path d="M459.2 781.8L457.1 786.1L454.9 783.8Z" fill="#5d7e78"/><path d="M493.9 782.0L491.8 786.2L489.6 783.9Z" fill="#5d7e78"/><path d="M528.6 782.2L526.6 786.3L524.4 784.0Z" fill="#5d7e78"/><path d="M563.3 782.4L561.3 786.4L559.1 784.1Z" fill="#5d7e78"/><path d="M598.0 782.6L596.1 786.5L593.9 784.2Z" fill="#5d7e78"/><path d="M632.6 782.8L630.8 786.7L628.6 784.3Z" fill="#5d7e78"/><path d="M667.5 783.0L665.7 786.8L663.5 784.4Z" fill="#5d7e78"/><path d="M702.4 783.3L700.5 787.0L698.4 784.6Z" fill="#5d7e78"/><path d="M737.3 783.5L735.3 787.2L733.3 784.7Z" fill="#5d7e78"/><path d="M772.2 783.8L770.2 787.3L768.2 784.8Z" fill="#5d7e78"/><path d="M807.1 784.0L805.0 787.5L803.1 784.9Z" fill="#5d7e78"/><path d="M841.9 784.0L839.8 787.5L838.0 784.9Z" fill="#5d7e78"/><path d="M-1.4 29.5L-4.8 20.2M33.4 29.5L30.0 20.2M68.2 29.5L65.3 20.5M103.1 29.5L100.5 20.8M137.9 29.5L135.7 21.1M172.8 29.5L170.9 21.4M207.6 29.5L206.1 21.7M242.4 29.5L241.3 22.1M277.3 29.5L276.4 22.2M312.1 29.5L311.6 22.3M347.0 29.5L346.7 22.5M381.8 29.5L381.9 22.7M416.6 29.5L417.0 22.8M451.5 29.5L452.1 23.1M486.3 29.5L487.2 23.3M521.2 29.5L522.3 23.5M556.0 29.5L557.4 23.8M590.8 29.5L592.4 24.0M625.7 29.5L627.5 24.3M660.5 29.5L662.0 24.3M695.4 29.5L696.5 24.4M730.2 29.5L731.0 24.5M765.0 29.5L765.5 24.6M799.9 29.5L800.0 24.7M834.7 29.5L834.9 24.7M-1.4 59.9L-4.3 50.3M33.4 59.9L30.5 50.3M68.2 59.9L65.8 50.6M103.1 59.9L101.0 50.9M137.9 59.9L136.1 51.2M172.8 59.9L171.3 51.5M207.6 59.9L206.4 51.9M242.4 59.9L241.5 52.2M277.3 59.9L276.7 52.4M312.1 59.9L311.8 52.6M347.0 59.9L346.9 52.8M381.8 59.9L381.9 53.0M416.6 59.9L417.0 53.3M451.5 59.9L452.1 53.5M486.3 59.9L487.2 53.7M521.2 59.9L522.3 53.9M556.0 59.9L557.3 54.2M590.8 59.9L592.4 54.4M625.7 59.9L627.4 54.7M660.5 59.9L662.0 54.8M695.4 59.9L696.6 54.9M730.2 59.9L731.2 55.0M765.0 59.9L765.8 55.1M799.9 59.9L800.5 55.2M834.7 59.9L835.3 55.2M-1.4 90.3L-3.7 80.5M33.4 90.3L31.1 80.5M68.2 90.3L66.3 80.8M103.1 90.3L101.4 81.1M137.9 90.3L136.5 81.4M172.8 90.3L171.7 81.7M207.6 90.3L206.8 82.0M242.4 90.3L241.8 82.3M277.3 90.3L276.9 82.7M312.1 90.3L312.0 82.9M347.0 90.3L347.0 83.2M381.8 90.3L382.0 83.4M416.6 90.3L417.0 83.7M451.5 90.3L452.1 83.9M486.3 90.3L487.2 84.1M521.2 90.3L522.2 84.4M556.0 90.3L557.2 84.6M590.8 90.3L592.3 84.9M625.7 90.3L627.3 85.1M660.5 90.3L662.0 85.2M695.4 90.3L696.7 85.4M730.2 90.3L731.4 85.5M765.0 90.3L766.1 85.6M799.9 90.3L800.9 85.7M834.7 90.3L835.7 85.7M-1.4 120.7L-3.2 110.7M33.4 120.7L31.7 110.7M68.2 120.7L66.8 111.0M103.1 120.7L101.9 111.2M137.9 120.7L137.0 111.5M172.8 120.7L172.1 111.8M207.6 120.7L207.1 112.1M242.4 120.7L242.2 112.4M277.3 120.7L277.2 112.9M312.1 120.7L312.1 113.3M347.0 120.7L347.1 113.5M381.8 120.7L382.1 113.8M416.6 120.7L417.0 114.1M451.5 120.7L452.1 114.3M486.3 120.7L487.1 114.6M521.2 120.7L522.2 114.8M556.0 120.7L557.2 115.0M590.8 120.7L592.2 115.3M625.7 120.7L627.2 115.5M660.5 120.7L662.0 115.7M695.4 120.7L696.8 115.8M730.2 120.7L731.6 116.0M765.0 120.7L766.4 116.1M799.9 120.7L801.3 116.3M834.7 120.7L836.1 116.3M-1.4 151.1L-2.6 140.9M33.4 151.1L32.2 140.9M68.2 151.1L67.3 141.2M103.1 151.1L102.4 141.5M137.9 151.1L137.4 141.7M172.8 151.1L172.5 142.0M207.6 151.1L207.5 142.3M242.4 151.1L242.5 142.6M277.3 151.1L277.4 143.1M312.1 151.1L312.3 143.6M347.0 151.1L347.2 143.9M381.8 151.1L382.1 144.2M416.6 151.1L417.0 144.5M451.5 151.1L452.1 144.8M486.3 151.1L487.1 145.0M521.2 151.1L522.1 145.2M556.0 151.1L557.1 145.5M590.8 151.1L592.1 145.7M625.7 151.1L627.0 146.0M660.5 151.1L662.0 146.1M695.4 151.1L696.9 146.3M730.2 151.1L731.8 146.5M765.0 151.1L766.7 146.7M799.9 151.1L801.6 146.9M834.7 151.1L836.5 146.9M-1.4 181.4L-2.0 171.2M33.4 181.4L32.8 171.2M68.2 181.4L67.9 171.4M103.1 181.4L102.9 171.7M137.9 181.4L137.9 171.9M172.8 181.4L172.9 172.2M207.6 181.4L207.9 172.5M242.4 181.4L242.9 172.7M277.3 181.4L277.7 173.3M312.1 181.4L312.5 173.9M347.0 181.4L347.4 174.3M381.8 181.4L382.2 174.6M416.6 181.4L417.1 175.0M451.5 181.4L452.1 175.2M486.3 181.4L487.1 175.4M521.2 181.4L522.1 175.7M556.0 181.4L557.0 175.9M590.8 181.4L592.0 176.1M625.7 181.4L626.9 176.4M660.5 181.4L662.0 176.6M695.4 181.4L697.0 176.8M730.2 181.4L732.0 177.0M765.0 181.4L767.0 177.2M799.9 181.4L802.0 177.5M834.7 181.4L836.8 177.5M-1.4 211.8L-1.4 201.5M33.4 211.8L33.4 201.5M68.2 211.8L68.4 201.7M103.1 211.8L103.4 201.9M137.9 211.8L138.4 202.2M172.8 211.8L173.4 202.4M207.6 211.8L208.3 202.6M242.4 211.8L243.3 202.9M277.3 211.8L278.0 203.5M312.1 211.8L312.7 204.2M347.0 211.8L347.5 204.6M381.8 211.8L382.3 205.0M416.6 211.8L417.1 205.4M451.5 211.8L452.1 205.6M486.3 211.8L487.0 205.9M521.2 211.8L522.0 206.1M556.0 211.8L557.0 206.3M590.8 211.8L591.9 206.6M625.7 211.8L626.8 206.8M660.5 211.8L662.0 207.0M695.4 211.8L697.1 207.3M730.2 211.8L732.2 207.5M765.0 211.8L767.3 207.8M799.9 211.8L802.3 208.1M834.7 211.8L837.1 208.1M-1.4 242.2L-0.8 231.8M33.4 242.2L34.1 231.8M68.2 242.2L69.0 232.0M103.1 242.2L103.9 232.2M137.9 242.2L138.9 232.4M172.8 242.2L173.8 232.6M207.6 242.2L208.7 232.9M242.4 242.2L243.7 233.1M277.3 242.2L278.3 233.8M312.1 242.2L312.9 234.5M347.0 242.2L347.6 235.0M381.8 242.2L382.4 235.4M416.6 242.2L417.1 235.8M451.5 242.2L452.0 236.1M486.3 242.2L487.0 236.3M521.2 242.2L522.0 236.5M556.0 242.2L556.9 236.8M590.8 242.2L591.8 237.0M625.7 242.2L626.7 237.2M660.5 242.2L662.0 237.5M695.4 242.2L697.2 237.8M730.2 242.2L732.4 238.1M765.0 242.2L767.5 238.4M799.9 242.2L802.6 238.8M834.7 242.2L837.4 238.8M-1.4 272.6L-0.2 262.2M33.4 272.6L34.7 262.2M68.2 272.6L69.6 262.4M103.1 272.6L104.5 262.6M137.9 272.6L139.4 262.7M172.8 272.6L174.3 262.9M207.6 272.6L209.2 263.1M242.4 272.6L244.1 263.3M277.3 272.6L278.6 264.0M312.1 272.6L313.2 264.8M347.0 272.6L347.8 265.4M381.8 272.6L382.4 265.8M416.6 272.6L417.1 266.3M451.5 272.6L452.0 266.5M486.3 272.6L487.0 266.7M521.2 272.6L521.9 267.0M556.0 272.6L556.8 267.2M590.8 272.6L591.7 267.4M625.7 272.6L626.6 267.7M660.5 272.6L662.0 267.9M695.4 272.6L697.3 268.3M730.2 272.6L732.5 268.6M765.0 272.6L767.7 269.0M799.9 272.6L802.8 269.4M834.7 272.6L837.7 269.4M-1.4 303.0L-0.1 292.6M33.4 303.0L34.8 292.6M68.2 303.0L69.7 292.9M103.1 303.0L104.6 293.1M137.9 303.0L139.5 293.3M172.8 303.0L174.5 293.5M207.6 303.0L209.4 293.7M242.4 303.0L244.3 293.9M277.3 303.0L278.9 294.6M312.1 303.0L313.5 295.3M347.0 303.0L348.2 295.8M381.8 303.0L382.8 296.2M416.6 303.0L417.5 296.6M451.5 303.0L452.5 296.8M486.3 303.0L487.4 297.1M521.2 303.0L522.4 297.3M556.0 303.0L557.3 297.5M590.8 303.0L592.2 297.8M625.7 303.0L627.1 298.0M660.5 303.0L662.4 298.3M695.4 303.0L697.6 298.6M730.2 303.0L732.8 299.0M765.0 303.0L768.0 299.3M799.9 303.0L803.1 299.7M834.7 303.0L837.9 299.7M-1.4 333.4L0.0 323.1M33.4 333.4L34.8 323.1M68.2 333.4L69.8 323.3M103.1 333.4L104.8 323.6M137.9 333.4L139.7 323.8M172.8 333.4L174.6 324.1M207.6 333.4L209.6 324.3M242.4 333.4L244.5 324.6M277.3 333.4L279.1 325.2M312.1 333.4L313.8 325.8M347.0 333.4L348.5 326.3M381.8 333.4L383.3 326.6M416.6 333.4L418.0 327.0M451.5 333.4L453.0 327.2M486.3 333.4L487.9 327.4M521.2 333.4L522.8 327.7M556.0 333.4L557.8 327.9M590.8 333.4L592.7 328.1M625.7 333.4L627.6 328.4M660.5 333.4L662.8 328.7M695.4 333.4L698.0 329.0M730.2 333.4L733.1 329.3M765.0 333.4L768.2 329.7M799.9 333.4L803.3 330.0M834.7 333.4L838.1 330.0M-1.4 363.8L0.1 353.6M33.4 363.8L34.9 353.6M68.2 363.8L69.9 353.8M103.1 363.8L104.9 354.1M137.9 363.8L139.8 354.4M172.8 363.8L174.8 354.7M207.6 363.8L209.7 355.0M242.4 363.8L244.6 355.2M277.3 363.8L279.4 355.8M312.1 363.8L314.1 356.4M347.0 363.8L348.9 356.7M381.8 363.8L383.7 357.1M416.6 363.8L418.5 357.4M451.5 363.8L453.4 357.6M486.3 363.8L488.4 357.9M521.2 363.8L523.3 358.1M556.0 363.8L558.3 358.3M590.8 363.8L593.2 358.6M625.7 363.8L628.1 358.8M660.5 363.8L663.2 359.1M695.4 363.8L698.3 359.4M730.2 363.8L733.4 359.7M765.0 363.8L768.5 360.0M799.9 363.8L803.5 360.3M834.7 363.8L838.4 360.3M-1.4 394.2L0.2 384.0M33.4 394.2L35.0 384.0M68.2 394.2L70.0 384.3M103.1 394.2L105.0 384.6M137.9 394.2L140.0 385.0M172.8 394.2L174.9 385.3M207.6 394.2L209.9 385.6M242.4 394.2L244.8 385.9M277.3 394.2L279.6 386.4M312.1 394.2L314.4 386.9M347.0 394.2L349.3 387.2M381.8 394.2L384.1 387.5M416.6 394.2L419.0 387.8M451.5 394.2L453.9 388.1M486.3 394.2L488.9 388.3M521.2 394.2L523.8 388.6M556.0 394.2L558.7 388.8M590.8 394.2L593.7 389.0M625.7 394.2L628.6 389.3M660.5 394.2L663.6 389.5M695.4 394.2L698.7 389.8M730.2 394.2L733.7 390.1M765.0 394.2L768.8 390.3M799.9 394.2L803.7 390.6M834.7 394.2L838.6 390.6M-1.4 424.6L0.3 414.5M33.4 424.6L35.1 414.5M68.2 424.6L70.1 414.8M103.1 424.6L105.1 415.2M137.9 424.6L140.1 415.5M172.8 424.6L175.1 415.9M207.6 424.6L210.0 416.2M242.4 424.6L245.0 416.6M277.3 424.6L279.8 417.0M312.1 424.6L314.7 417.5M347.0 424.6L349.6 417.7M381.8 424.6L384.5 418.0M416.6 424.6L419.4 418.3M451.5 424.6L454.4 418.6M486.3 424.6L489.4 418.8M521.2 424.6L524.3 419.1M556.0 424.6L559.2 419.3M590.8 424.6L594.2 419.6M625.7 424.6L629.1 419.8M660.5 424.6L664.1 420.0M695.4 424.6L699.1 420.3M730.2 424.6L734.1 420.5M765.0 424.6L769.0 420.7M799.9 424.6L804.0 421.0M834.7 424.6L838.8 421.0M-1.4 455.0L0.3 444.9M33.4 455.0L35.2 444.9M68.2 455.0L70.2 445.3M103.1 455.0L105.2 445.7M137.9 455.0L140.2 446.1M172.8 455.0L175.2 446.5M207.6 455.0L210.2 446.9M242.4 455.0L245.1 447.3M277.3 455.0L280.1 447.7M312.1 455.0L315.0 448.0M347.0 455.0L350.0 448.3M381.8 455.0L385.0 448.6M416.6 455.0L419.9 448.8M451.5 455.0L454.9 449.1M486.3 455.0L489.8 449.3M521.2 455.0L524.8 449.6M556.0 455.0L559.7 449.9M590.8 455.0L594.7 450.1M625.7 455.0L629.6 450.4M660.5 455.0L664.5 450.6M695.4 455.0L699.4 450.7M730.2 455.0L734.4 450.9M765.0 455.0L769.3 451.1M799.9 455.0L804.2 451.3M834.7 455.0L839.1 451.3M-1.4 485.4L0.4 475.4M33.4 485.4L35.2 475.4M68.2 485.4L70.3 475.8M103.1 485.4L105.3 476.2M137.9 485.4L140.3 476.6M172.8 485.4L175.3 477.1M207.6 485.4L210.3 477.5M242.4 485.4L245.2 477.9M277.3 485.4L280.3 478.3M312.1 485.4L315.3 478.6M347.0 485.4L350.3 478.8M381.8 485.4L385.4 479.1M416.6 485.4L420.4 479.4M451.5 485.4L455.4 479.6M486.3 485.4L490.3 479.9M521.2 485.4L525.3 480.2M556.0 485.4L560.2 480.5M590.8 485.4L595.1 480.7M625.7 485.4L630.0 481.0M660.5 485.4L664.9 481.1M695.4 485.4L699.8 481.2M730.2 485.4L734.7 481.4M765.0 485.4L769.6 481.5M799.9 485.4L804.5 481.6M834.7 485.4L839.3 481.6M-1.4 515.7L0.5 505.8M33.4 515.7L35.3 505.8M68.2 515.7L70.4 506.3M103.1 515.7L105.4 506.7M137.9 515.7L140.4 507.2M172.8 515.7L175.4 507.7M207.6 515.7L210.4 508.1M242.4 515.7L245.3 508.6M277.3 515.7L280.4 508.9M312.1 515.7L315.6 509.1M347.0 515.7L350.7 509.4M381.8 515.7L385.8 509.7M416.6 515.7L420.8 510.0M451.5 515.7L455.8 510.3M486.3 515.7L490.8 510.5M521.2 515.7L525.7 510.8M556.0 515.7L560.7 511.1M590.8 515.7L595.6 511.4M625.7 515.7L630.5 511.7M660.5 515.7L665.4 511.7M695.4 515.7L700.2 511.8M730.2 515.7L735.0 511.8M765.0 515.7L769.9 511.9M799.9 515.7L804.7 512.0M834.7 515.7L839.6 512.0M-1.4 546.1L0.4 536.4M33.4 546.1L35.2 536.4M68.2 546.1L70.3 536.8M103.1 546.1L105.4 537.2M137.9 546.1L140.4 537.7M172.8 546.1L175.4 538.1M207.6 546.1L210.4 538.6M242.4 546.1L245.4 539.0M277.3 546.1L280.5 539.3M312.1 546.1L315.6 539.6M347.0 546.1L350.7 539.9M381.8 546.1L385.8 540.2M416.6 546.1L420.9 540.5M451.5 546.1L455.9 540.8M486.3 546.1L490.8 541.1M521.2 546.1L525.7 541.3M556.0 546.1L560.6 541.6M590.8 546.1L595.5 541.8M625.7 546.1L630.4 542.1M660.5 546.1L665.3 542.2M695.4 546.1L700.1 542.2M730.2 546.1L735.0 542.3M765.0 546.1L769.8 542.4M799.9 546.1L804.6 542.4M834.7 546.1L839.5 542.4M-1.4 576.5L0.3 566.9M33.4 576.5L35.2 566.9M68.2 576.5L70.3 567.3M103.1 576.5L105.4 567.7M137.9 576.5L140.4 568.2M172.8 576.5L175.4 568.6M207.6 576.5L210.4 569.0M242.4 576.5L245.4 569.5M277.3 576.5L280.6 569.8M312.1 576.5L315.7 570.1M347.0 576.5L350.8 570.4M381.8 576.5L385.9 570.7M416.6 576.5L421.0 571.1M451.5 576.5L455.9 571.3M486.3 576.5L490.8 571.6M521.2 576.5L525.7 571.8M556.0 576.5L560.6 572.1M590.8 576.5L595.4 572.3M625.7 576.5L630.3 572.5M660.5 576.5L665.2 572.6M695.4 576.5L700.0 572.7M730.2 576.5L734.9 572.8M765.0 576.5L769.7 572.8M799.9 576.5L804.6 572.9M834.7 576.5L839.4 572.9M-1.4 606.9L0.2 597.4M33.4 606.9L35.1 597.4M68.2 606.9L70.2 597.8M103.1 606.9L105.3 598.2M137.9 606.9L140.4 598.7M172.8 606.9L175.4 599.1M207.6 606.9L210.4 599.5M242.4 606.9L245.4 599.9M277.3 606.9L280.6 600.2M312.1 606.9L315.7 600.6M347.0 606.9L350.9 600.9M381.8 606.9L386.0 601.3M416.6 606.9L421.0 601.6M451.5 606.9L455.9 601.9M486.3 606.9L490.8 602.1M521.2 606.9L525.7 602.3M556.0 606.9L560.5 602.5M590.8 606.9L595.4 602.7M625.7 606.9L630.2 603.0M660.5 606.9L665.1 603.0M695.4 606.9L699.9 603.1M730.2 606.9L734.8 603.2M765.0 606.9L769.6 603.3M799.9 606.9L804.5 603.4M834.7 606.9L839.3 603.4M-1.4 637.3L0.2 628.0M33.4 637.3L35.0 628.0M68.2 637.3L70.1 628.4M103.1 637.3L105.3 628.7M137.9 637.3L140.4 629.1M172.8 637.3L175.4 629.5M207.6 637.3L210.5 629.9M242.4 637.3L245.5 630.3M277.3 637.3L280.7 630.7M312.1 637.3L315.8 631.0M347.0 637.3L350.9 631.4M381.8 637.3L386.0 631.8M416.6 637.3L421.1 632.2M451.5 637.3L455.9 632.4M486.3 637.3L490.8 632.6M521.2 637.3L525.6 632.8M556.0 637.3L560.5 633.0M590.8 637.3L595.3 633.2M625.7 637.3L630.1 633.4M660.5 637.3L665.0 633.5M695.4 637.3L699.8 633.6M730.2 637.3L734.7 633.7M765.0 637.3L769.5 633.8M799.9 637.3L804.4 633.9M834.7 637.3L839.2 633.9M-1.4 667.7L0.1 658.5M33.4 667.7L34.9 658.5M68.2 667.7L70.1 658.9M103.1 667.7L105.2 659.2M137.9 667.7L140.3 659.6M172.8 667.7L175.4 660.0M207.6 667.7L210.5 660.4M242.4 667.7L245.5 660.8M277.3 667.7L280.7 661.1M312.1 667.7L315.9 661.5M347.0 667.7L351.0 661.9M381.8 667.7L386.1 662.3M416.6 667.7L421.1 662.8M451.5 667.7L455.9 662.9M486.3 667.7L490.8 663.1M521.2 667.7L525.6 663.3M556.0 667.7L560.4 663.5M590.8 667.7L595.2 663.6M625.7 667.7L630.0 663.8M660.5 667.7L664.9 663.9M695.4 667.7L699.7 664.0M730.2 667.7L734.6 664.2M765.0 667.7L769.5 664.3M799.9 667.7L804.3 664.4M834.7 667.7L839.2 664.4M-1.4 698.1L0.0 689.1M33.4 698.1L34.8 689.1M68.2 698.1L70.0 689.4M103.1 698.1L105.2 689.7M137.9 698.1L140.3 690.1M172.8 698.1L175.4 690.5M207.6 698.1L210.5 690.8M242.4 698.1L245.5 691.2M277.3 698.1L280.8 691.6M312.1 698.1L315.9 692.0M347.0 698.1L351.0 692.4M381.8 698.1L386.1 692.9M416.6 698.1L421.2 693.3M451.5 698.1L456.0 693.5M486.3 698.1L490.8 693.6M521.2 698.1L525.5 693.8M556.0 698.1L560.3 693.9M590.8 698.1L595.1 694.1M625.7 698.1L629.9 694.2M660.5 698.1L664.8 694.4M695.4 698.1L699.6 694.5M730.2 698.1L734.5 694.6M765.0 698.1L769.4 694.7M799.9 698.1L804.2 694.9M834.7 698.1L839.1 694.9M-1.4 728.5L-0.1 719.6M33.4 728.5L34.8 719.6M68.2 728.5L70.0 719.9M103.1 728.5L105.1 720.2M137.9 728.5L140.3 720.6M172.8 728.5L175.4 720.9M207.6 728.5L210.5 721.3M242.4 728.5L245.6 721.6M277.3 728.5L280.8 722.0M312.1 728.5L316.0 722.5M347.0 728.5L351.1 722.9M381.8 728.5L386.2 723.4M416.6 728.5L421.2 723.9M451.5 728.5L456.0 724.0M486.3 728.5L490.7 724.1M521.2 728.5L525.5 724.3M556.0 728.5L560.3 724.4M590.8 728.5L595.0 724.5M625.7 728.5L629.8 724.7M660.5 728.5L664.7 724.8M695.4 728.5L699.6 724.9M730.2 728.5L734.4 725.1M765.0 728.5L769.3 725.2M799.9 728.5L804.1 725.3M834.7 728.5L839.0 725.3M-1.4 758.9L-0.1 750.2M33.4 758.9L34.7 750.2M68.2 758.9L69.9 750.4M103.1 758.9L105.1 750.7M137.9 758.9L140.3 751.1M172.8 758.9L175.4 751.4M207.6 758.9L210.5 751.7M242.4 758.9L245.6 752.0M277.3 758.9L280.8 752.5M312.1 758.9L316.0 753.0M347.0 758.9L351.1 753.4M381.8 758.9L386.2 753.9M416.6 758.9L421.2 754.4M451.5 758.9L456.0 754.5M486.3 758.9L490.7 754.7M521.2 758.9L525.5 754.8M556.0 758.9L560.2 754.9M590.8 758.9L595.0 755.0M625.7 758.9L629.7 755.1M660.5 758.9L664.6 755.2M695.4 758.9L699.5 755.4M730.2 758.9L734.3 755.5M765.0 758.9L769.2 755.7M799.9 758.9L804.1 755.8M834.7 758.9L838.9 755.8M-1.4 789.2L-0.1 780.5M33.4 789.2L34.7 780.5M68.2 789.2L69.9 780.8M103.1 789.2L105.1 781.1M137.9 789.2L140.3 781.4M172.8 789.2L175.4 781.8M207.6 789.2L210.5 782.1M242.4 789.2L245.6 782.4M277.3 789.2L280.8 782.9M312.1 789.2L316.0 783.3M347.0 789.2L351.1 783.8M381.8 789.2L386.2 784.3M416.6 789.2L421.2 784.8M451.5 789.2L456.0 784.9M486.3 789.2L490.7 785.0M521.2 789.2L525.5 785.2M556.0 789.2L560.2 785.3M590.8 789.2L595.0 785.4M625.7 789.2L629.7 785.5M660.5 789.2L664.6 785.6M695.4 789.2L699.5 785.8M730.2 789.2L734.3 785.9M765.0 789.2L769.2 786.1M799.9 789.2L804.1 786.2M834.7 789.2L838.9 786.2" stroke="#5d7e78" stroke-width="1.15" fill="none"/></svg></div><div class="r" style="left:436px;top:273px;width:834px;height:1px;background:rgba(120,120,120,0.5);"></div><svg class="r" style="left:1790px;top:1058px;" width="14" height="14" viewBox="0 0 14 14"><rect x="11" y="2" width="1.2" height="1.2" fill="#b8b8b8"/><rect x="8" y="5" width="1.2" height="1.2" fill="#b8b8b8"/><rect x="11" y="5" width="1.2" height="1.2" fill="#b8b8b8"/><rect x="5" y="8" width="1.2" height="1.2" fill="#b8b8b8"/><rect x="8" y="8" width="1.2" height="1.2" fill="#b8b8b8"/><rect x="11" y="8" width="1.2" height="1.2" fill="#b8b8b8"/><rect x="2" y="11" width="1.2" height="1.2" fill="#b8b8b8"/><rect x="5" y="11" width="1.2" height="1.2" fill="#b8b8b8"/><rect x="8" y="11" width="1.2" height="1.2" fill="#b8b8b8"/><rect x="11" y="11" width="1.2" height="1.2" fill="#b8b8b8"/></svg><div class="t " style="left:897.00px;top:1050.47px;font-size:12.2px;line-height:15px;font-weight:400;color:#1a1a1a;">Coordinate</div><div class="r" style="left:961px;top:1044px;width:106px;height:23px;background:#fdfdfd;border:1px solid #c0c0c0;border-radius:3px;"></div><div class="t " style="left:966.00px;top:1050.47px;font-size:12.2px;line-height:15px;font-weight:400;color:#1a1a1a;">40,354° -24,953°</div><svg class="r" style="left:1071px;top:1047px;" width="18" height="18" viewBox="0 0 18 18"><circle cx="8" cy="9" r="5.5" fill="none" stroke="#444" stroke-width="1.3"/><path d="M3 4L13 14M5 2Q9 5 13 3" stroke="#444" stroke-width="1.2" fill="none"/></svg><div class="t " style="left:1100.60px;top:1050.47px;font-size:12.2px;line-height:15px;font-weight:400;color:#1a1a1a;">Scale</div><div class="r" style="left:1132px;top:1044px;width:100px;height:24px;background:#fdfdfd;border:1px solid #c0c0c0;border-radius:3px;"></div><div class="r" style="left:1210px;top:1045px;width:1px;height:22px;background:#d0d0d0;"></div><div class="t " style="left:1137.00px;top:1050.47px;font-size:12.2px;line-height:15px;font-weight:400;color:#1a1a1a;">1:1742235</div><svg class="r" style="left:1215.5px;top:1051px;" width="10" height="10" viewBox="0 0 10 10"><path d="M1 3L9 3L5 7.5Z" fill="#444"/></svg><svg class="r" style="left:1243px;top:1048px;" width="14" height="16" viewBox="0 0 14 16"><path d="M4 7V4.5Q4 1.5 7 1.5Q10 1.5 10 4.5V7" fill="none" stroke="#555" stroke-width="1.5"/><rect x="2" y="7" width="10" height="8" rx="1" fill="#555"/></svg><div class="t " style="left:1265.60px;top:1050.47px;font-size:12.2px;line-height:15px;font-weight:400;color:#1a1a1a;">Magnifier</div><div class="r" style="left:1320px;top:1044px;width:94px;height:25px;background:#fdfdfd;border:1px solid #c0c0c0;border-radius:3px;"></div><div class="r" style="left:1398px;top:1045px;width:1px;height:23px;background:#d8d8d8;"></div><svg class="r" style="left:1401px;top:1047.5px;" width="10" height="8" viewBox="0 0 10 8"><path d="M1.5 6L5 2L8.5 6Z" fill="#444"/></svg><svg class="r" style="left:1401px;top:1057.5px;" width="10" height="8" viewBox="0 0 10 8"><path d="M1.5 2L5 6L8.5 2Z" fill="#444"/></svg><div class="t " style="left:1325.00px;top:1050.47px;font-size:12.2px;line-height:15px;font-weight:400;color:#1a1a1a;">100%</div><div class="t " style="left:1423.30px;top:1050.47px;font-size:12.2px;line-height:15px;font-weight:400;color:#1a1a1a;">Rotation</div><div class="r" style="left:1479px;top:1044px;width:100px;height:25px;background:#fdfdfd;border:1px solid #c0c0c0;border-radius:3px;"></div><div class="r" style="left:1563px;top:1045px;width:1px;height:23px;background:#d8d8d8;"></div><svg class="r" style="left:1566px;top:1047.5px;" width="10" height="8" viewBox="0 0 10 8"><path d="M1.5 6L5 2L8.5 6Z" fill="#444"/></svg><svg class="r" style="left:1566px;top:1057.5px;" width="10" height="8" viewBox="0 0 10 8"><path d="M1.5 2L5 6L8.5 2Z" fill="#444"/></svg><div class="t " style="left:1484.00px;top:1050.47px;font-size:12.2px;line-height:15px;font-weight:400;color:#1a1a1a;">0,0 °</div><svg class="r" style="left:1585px;top:1049px;" width="14" height="14" viewBox="0 0 14 14"><rect x="0.5" y="0.5" width="13" height="13" fill="#fff" stroke="#888"/><path d="M3 7L6 10.5L11 3" stroke="#111" stroke-width="1.6" fill="none"/></svg><div class="t " style="left:1604.30px;top:1050.47px;font-size:12.2px;line-height:15px;font-weight:400;color:#1a1a1a;">Render</div><svg class="r" style="left:1658px;top:1048px;" width="16" height="16" viewBox="0 0 16 16"><circle cx="8" cy="8" r="6.5" fill="none" stroke="#666" stroke-width="1"/><path d="M1.5 8H14.5M8 1.5V14.5M3 4.5H13M3 11.5H13" stroke="#666" stroke-width="0.8"/><ellipse cx="8" cy="8" rx="3" ry="6.5" fill="none" stroke="#666" stroke-width="0.8"/></svg><div class="t " style="left:1677.40px;top:1050.47px;font-size:12.2px;line-height:15px;font-weight:400;color:#1a1a1a;letter-spacing:-0.8px;">EPSG:4326</div><svg class="r" style="left:1757px;top:1047px;" width="20" height="18" viewBox="0 0 20 18"><path d="M10 2Q18 2 18 8Q18 13 10 13Q8 13 6.5 12.5L2.5 16L3.5 11.5Q2 10 2 8Q2 2 10 2Z" fill="#3a3a3a"/><circle cx="6.5" cy="8" r="1.3" fill="#fff"/><circle cx="10" cy="8" r="1.3" fill="#fff"/><circle cx="13.5" cy="8" r="1.3" fill="#fff"/></svg><div class="r" style="left:700px;top:75px;width:32px;height:31px;background:#e6e6e6;border:1px solid #c4c4c4;border-radius:4px;"></div><div class="r" style="left:978px;top:75px;width:32px;height:31px;background:#e6e6e6;border:1px solid #c4c4c4;border-radius:4px;"></div><svg class="r" style="left:15.299999999999999px;top:82px;" width="6" height="18" viewBox="0 0 6 18"><rect x="0.0" y="0" width="1.3" height="1.3" fill="#c4c4c4"/><rect x="3.5" y="0" width="1.3" height="1.3" fill="#c4c4c4"/><rect x="0.0" y="3" width="1.3" height="1.3" fill="#c4c4c4"/><rect x="3.5" y="3" width="1.3" height="1.3" fill="#c4c4c4"/><rect x="0.0" y="6" width="1.3" height="1.3" fill="#c4c4c4"/><rect x="3.5" y="6" width="1.3" height="1.3" fill="#c4c4c4"/><rect x="0.0" y="9" width="1.3" height="1.3" fill="#c4c4c4"/><rect x="3.5" y="9" width="1.3" height="1.3" fill="#c4c4c4"/><rect x="0.0" y="12" width="1.3" height="1.3" fill="#c4c4c4"/><rect x="3.5" y="12" width="1.3" height="1.3" fill="#c4c4c4"/><rect x="0.0" y="15" width="1.3" height="1.3" fill="#c4c4c4"/><rect x="3.5" y="15" width="1.3" height="1.3" fill="#c4c4c4"/></svg><svg class="r" style="left:27.700000000000003px;top:78.0px;" width="24" height="24" viewBox="0 0 24 24"><path d="M5.5 1.5H15L19.5 6V22.5H5.5Z" fill="#fff" stroke="#555" stroke-width="1"/><path d="M15 1.5V6H19.5" fill="none" stroke="#555"/></svg><svg class="r" style="left:60.8px;top:78.0px;" width="24" height="24" viewBox="0 0 24 24"><path d="M3 4H9L10.5 5.5H19V8H3Z" fill="#f4d24e" stroke="#c8a828" stroke-width="0.8"/><path d="M3.5 19.5L5.5 8.5H23L20.5 19.5Z" fill="#fad957" stroke="#caa62a" stroke-width="0.8"/></svg><svg class="r" style="left:93.8px;top:78.0px;" width="24" height="24" viewBox="0 0 24 24"><rect x="2.5" y="1.5" width="19" height="21" rx="2" fill="#6b94cc" stroke="#48699a" stroke-width="0.9"/><rect x="5" y="2.5" width="14" height="7.5" fill="#eceff3"/><path d="M6.5 4.5H17.5M6.5 6.3H17.5M6.5 8.1H17.5" stroke="#555" stroke-width="0.7"/><rect x="6" y="14" width="12" height="7" fill="#f4f4f4"/><rect x="7.5" y="15.5" width="2.5" height="4" fill="#45639a"/></svg><svg class="r" style="left:126.9px;top:78.0px;" width="24" height="24" viewBox="0 0 24 24"><path d="M4.5 2.5H17L21.5 7V21.5H4.5Z" fill="#fff" stroke="#666" stroke-width="0.9"/><rect x="7" y="5" width="12" height="13" fill="none" stroke="#9cb6e8" stroke-width="0.8"/><path d="M6 3H11.5V7.5H10V22H6Z" fill="#f2ce3e" stroke="#c8a020" stroke-width="0.6"/><rect x="13" y="13" width="11" height="11" rx="1.8" fill="#c9a400" stroke="#a88800" stroke-width="0.6"/><path d="M18.5 14.8V22.2M14.8 18.5H22.2M15.8 15.8L21.2 21.2M21.2 15.8L15.8 21.2" stroke="#fff" stroke-width="1.3"/><circle cx="18.5" cy="18.5" r="1.4" fill="#c9a400"/></svg><svg class="r" style="left:159.9px;top:78.0px;" width="24" height="24" viewBox="0 0 24 24"><path d="M3.5 2.5H17L21.5 7V21.5H3.5Z" fill="#fff" stroke="#666" stroke-width="0.9"/><rect x="5.5" y="5" width="14" height="13" fill="none" stroke="#9cb6e8" stroke-width="0.8"/><path d="M9 8Q7 11 10 12L17 21L19.5 19L12.5 10Q13 7 10 6.5L11 9L9.5 10Z" fill="#e8c86a" stroke="#666" stroke-width="0.7"/></svg><svg class="r" style="left:193.0px;top:78.0px;" width="24" height="24" viewBox="0 0 24 24"><circle cx="7" cy="5.5" r="4" fill="#d85a28"/><path d="M15.5 9.5L21.5 3.5" stroke="#5b86c0" stroke-width="2.2" stroke-linecap="round"/><rect x="3" y="12" width="8" height="8.5" fill="#7aa87a" stroke="#4a7a4a" stroke-width="0.6"/><text x="17" y="20" font-family="Liberation Sans" font-size="10" fill="#333" text-anchor="middle">a</text></svg><svg class="r" style="left:229.6px;top:82px;" width="6" height="18" viewBox="0 0 6 18"><rect x="0.0" y="0" width="1.3" height="1.3" fill="#c4c4c4"/><rect x="3.5" y="0" width="1.3" height="1.3" fill="#c4c4c4"/><rect x="0.0" y="3" width="1.3" height="1.3" fill="#c4c4c4"/><rect x="3.5" y="3" width="1.3" height="1.3" fill="#c4c4c4"/><rect x="0.0" y="6" width="1.3" height="1.3" fill="#c4c4c4"/><rect x="3.5" y="6" width="1.3" height="1.3" fill="#c4c4c4"/><rect x="0.0" y="9" width="1.3" height="1.3" fill="#c4c4c4"/><rect x="3.5" y="9" width="1.3" height="1.3" fill="#c4c4c4"/><rect x="0.0" y="12" width="1.3" height="1.3" fill="#c4c4c4"/><rect x="3.5" y="12" width="1.3" height="1.3" fill="#c4c4c4"/><rect x="0.0" y="15" width="1.3" height="1.3" fill="#c4c4c4"/><rect x="3.5" y="15" width="1.3" height="1.3" fill="#c4c4c4"/></svg><svg class="r" style="left:242.5px;top:78.0px;" width="24" height="24" viewBox="0 0 24 24"><path d="M8 21.5Q4 16 3 12.5Q2.5 10.5 4.5 11L7.5 14V4.5Q7.5 3 9 3Q10.5 3 10.5 4.5V10V2.5Q10.5 1 12 1Q13.5 1 13.5 2.5V10V3.5Q13.5 2 15 2Q16.5 2 16.5 3.5V10.5V5.5Q16.5 4 18 4Q19.5 4 19.5 5.5V15Q19.5 19 17.5 21.5Z" fill="#fff" stroke="#111" stroke-width="1.1"/></svg><svg class="r" style="left:275.0px;top:78.0px;" width="24" height="24" viewBox="0 0 24 24"><rect x="5" y="5" width="14" height="14" fill="#f6e24a" stroke="#c8a820" stroke-width="0.8"/><path d="M12 1L15.5 5H13.5V9H10.5V5H8.5Z M12 23L15.5 19H13.5V15H10.5V19H8.5Z M1 12L5 8.5V10.5H9V13.5H5V15.5Z M23 12L19 8.5V10.5H15V13.5H19V15.5Z" fill="#5b88c4" stroke="#3a5a8a" stroke-width="0.5"/></svg><svg class="r" style="left:307.5px;top:78.0px;" width="24" height="24" viewBox="0 0 24 24"><path d="M9.32 13.68L3.3200000000000003 19.68" stroke="#222" stroke-width="3.2" stroke-linecap="round"/><path d="M8.120000000000001 14.879999999999999L3.8200000000000003 19.18" stroke="#f2c41a" stroke-width="1.8"/><circle cx="14" cy="9" r="6.5" fill="#f4f4f4" stroke="#333" stroke-width="1"/><path d="M10.5 9H17.5M14 5.5V12.5" stroke="#4a7ab8" stroke-width="1.8"/></svg><svg class="r" style="left:340.5px;top:78.0px;" width="24" height="24" viewBox="0 0 24 24"><path d="M9.32 13.68L3.3200000000000003 19.68" stroke="#222" stroke-width="3.2" stroke-linecap="round"/><path d="M8.120000000000001 14.879999999999999L3.8200000000000003 19.18" stroke="#f2c41a" stroke-width="1.8"/><circle cx="14" cy="9" r="6.5" fill="#f4f4f4" stroke="#333" stroke-width="1"/><path d="M10.5 9H17.5" stroke="#4a7ab8" stroke-width="1.8"/></svg><svg class="r" style="left:374.6px;top:78.0px;" width="24" height="24" viewBox="0 0 24 24"><path d="M3 2H9L7 4L9.5 6.5L7.5 8.5L5 6L3 8Z M21 2H15L17 4L14.5 6.5L16.5 8.5L19 6L21 8Z M21 22H15L17 20L14.5 17.5L16.5 15.5L19 18L21 16Z" fill="#5b88c4" stroke="#3a5a8a" stroke-width="0.5"/><path d="M8.68 15.32L2.6799999999999997 21.32" stroke="#222" stroke-width="3.2" stroke-linecap="round"/><path d="M7.4799999999999995 16.52L3.1799999999999997 20.82" stroke="#f2c41a" stroke-width="1.8"/><circle cx="13" cy="11" r="6" fill="#ececec" stroke="#333" stroke-width="1"/></svg><svg class="r" style="left:406.7px;top:78.0px;" width="24" height="24" viewBox="0 0 24 24"><rect x="3" y="3" width="10" height="12" fill="#f6e24a" stroke="#c8a820" stroke-width="0.8"/><path d="M8.815999999999999 14.184000000000001L2.815999999999999 20.184" stroke="#222" stroke-width="3.2" stroke-linecap="round"/><path d="M7.615999999999999 15.384L3.315999999999999 19.684" stroke="#f2c41a" stroke-width="1.8"/><circle cx="14" cy="9" r="7.2" fill="#f2f0e4" stroke="#333" stroke-width="1"/><path d="M14 2V16" stroke="#ccc" stroke-width="1"/></svg><svg class="r" style="left:439.8px;top:78.0px;" width="24" height="24" viewBox="0 0 24 24"><rect x="3" y="3" width="10" height="12" fill="#e6e6e6" stroke="#777" stroke-width="0.8"/><path d="M8.815999999999999 14.184000000000001L2.815999999999999 20.184" stroke="#222" stroke-width="3.2" stroke-linecap="round"/><path d="M7.615999999999999 15.384L3.315999999999999 19.684" stroke="#f2c41a" stroke-width="1.8"/><circle cx="14" cy="9" r="7.2" fill="#f0f0f0" stroke="#333" stroke-width="1"/><path d="M14 2V16" stroke="#bbb" stroke-width="1"/></svg><svg class="r" style="left:472.8px;top:78.0px;" width="24" height="24" viewBox="0 0 24 24"><rect x="3" y="3" width="10" height="12" fill="#f0f0f0" stroke="#ddd" stroke-width="0.8"/><path d="M8 15L3 21" stroke="#e4e4e0" stroke-width="2.4"/><circle cx="14" cy="9" r="7" fill="#f6f6f6" stroke="#ddd"/><text x="14" y="12" font-family="Liberation Sans" font-weight="700" font-size="8" fill="#d4d4d4" text-anchor="middle">1:1</text></svg><svg class="r" style="left:505.79999999999995px;top:78.0px;" width="24" height="24" viewBox="0 0 24 24"><path d="M7.104 13.896L1.104 19.896" stroke="#222" stroke-width="3.2" stroke-linecap="round"/><path d="M5.904 15.096L1.604 19.396" stroke="#f2c41a" stroke-width="1.8"/><circle cx="12" cy="9" r="6.8" fill="#f4f4f4" stroke="#333" stroke-width="1"/><rect x="13" y="12" width="10.5" height="10.5" fill="#5b88c4" stroke="#3a5a8a" stroke-width="0.5"/><path d="M20 14L16 17.2L20 20.5" stroke="#fff" stroke-width="1.8" fill="none"/></svg><svg class="r" style="left:538.9px;top:78.0px;" width="24" height="24" viewBox="0 0 24 24"><path d="M8 15L3 21" stroke="#e4e4e0" stroke-width="2.4"/><circle cx="12" cy="9" r="6.8" fill="#f6f6f6" stroke="#e0e0e0"/><rect x="13" y="12" width="10.5" height="10.5" fill="#dcdde0"/><path d="M16.5 14L20.5 17.2L16.5 20.5" stroke="#fff" stroke-width="1.8" fill="none"/></svg><svg class="r" style="left:573.0px;top:78.0px;" width="24" height="24" viewBox="0 0 24 24"><path d="M4 3Q4 1.5 5.5 1.5H20.5V20.5H6Q4 20.5 3.5 22Q3 20 3.5 19Z" fill="#e8e8e8" stroke="#888" stroke-width="0.9"/><path d="M4 3V19" stroke="#aaa"/><rect x="12" y="12" width="11" height="11" rx="1.8" fill="#c9a400" stroke="#a88800" stroke-width="0.6"/><path d="M17.5 13.8V21.2M13.8 17.5H21.2M14.8 14.8L20.2 20.2M20.2 14.8L14.8 20.2" stroke="#fff" stroke-width="1.3"/><circle cx="17.5" cy="17.5" r="1.4" fill="#c9a400"/></svg><svg class="r" style="left:605.0px;top:78.0px;" width="24" height="24" viewBox="0 0 24 24"><path d="M2 13L6 4L20 3L21.5 12L14 18Z" fill="#e0e0e0" stroke="#999" stroke-width="0.8"/><path d="M5 8L20 7M3.5 11L21 10M9 4L8 16M14 3.5L13 17" stroke="#aaa" stroke-width="0.6"/><rect x="12" y="12" width="11" height="11" rx="1.8" fill="#c9a400" stroke="#a88800" stroke-width="0.6"/><path d="M17.5 13.8V21.2M13.8 17.5H21.2M14.8 14.8L20.2 20.2M20.2 14.8L14.8 20.2" stroke="#fff" stroke-width="1.3"/><circle cx="17.5" cy="17.5" r="1.4" fill="#c9a400"/></svg><svg class="r" style="left:641.0px;top:78.0px;" width="24" height="24" viewBox="0 0 24 24"><path d="M4 1.5H13.5V20.5L8.75 17L4 20.5Z" fill="#6b94cc" stroke="#3a5a8a" stroke-width="0.8"/><rect x="12" y="12" width="11" height="11" rx="1.8" fill="#c9a400" stroke="#a88800" stroke-width="0.6"/><path d="M17.5 13.8V21.2M13.8 17.5H21.2M14.8 14.8L20.2 20.2M20.2 14.8L14.8 20.2" stroke="#fff" stroke-width="1.3"/><circle cx="17.5" cy="17.5" r="1.4" fill="#c9a400"/></svg><svg class="r" style="left:671.0px;top:78.0px;" width="24" height="24" viewBox="0 0 24 24"><path d="M4 3Q4 1.5 5.5 1.5H20.5V20.5H6Q4 20.5 3.5 22Q3 20 3.5 19Z" fill="#e8e8e8" stroke="#888" stroke-width="0.9"/><path d="M4 3V19" stroke="#aaa"/><path d="M12 0.5H15.5V9L13.75 7.2L12 9Z" fill="#6b94cc" stroke="#3a5a8a" stroke-width="0.6"/></svg><svg class="r" style="left:703.6px;top:78.0px;" width="24" height="24" viewBox="0 0 24 24"><circle cx="12" cy="12" r="10.5" fill="#fafafa" stroke="#333" stroke-width="1.1"/><circle cx="12" cy="12" r="9" fill="none" stroke="#4a7ac0" stroke-width="1" stroke-dasharray="0.9 3.8"/><path d="M12 4.5V12L16 15.5" stroke="#333" stroke-width="1.2" fill="none"/></svg><svg class="r" style="left:737.0px;top:78.0px;" width="24" height="24" viewBox="0 0 24 24"><path d="M3.5 11Q4 3 12 3Q16.5 3 19 6.5L21.5 4V12H13.5L16.5 9Q15 6.5 12 6.5Q7.5 6.5 7 11Z M20.5 13Q20 21 12 21Q7.5 21 5 17.5L2.5 20V12H10.5L7.5 15Q9 17.5 12 17.5Q16.5 17.5 17 13Z" fill="#3f86d8" stroke="#2a66b0" stroke-width="0.5"/></svg><svg class="r" style="left:773.1px;top:82px;" width="6" height="18" viewBox="0 0 6 18"><rect x="0.0" y="0" width="1.3" height="1.3" fill="#c4c4c4"/><rect x="3.5" y="0" width="1.3" height="1.3" fill="#c4c4c4"/><rect x="0.0" y="3" width="1.3" height="1.3" fill="#c4c4c4"/><rect x="3.5" y="3" width="1.3" height="1.3" fill="#c4c4c4"/><rect x="0.0" y="6" width="1.3" height="1.3" fill="#c4c4c4"/><rect x="3.5" y="6" width="1.3" height="1.3" fill="#c4c4c4"/><rect x="0.0" y="9" width="1.3" height="1.3" fill="#c4c4c4"/><rect x="3.5" y="9" width="1.3" height="1.3" fill="#c4c4c4"/><rect x="0.0" y="12" width="1.3" height="1.3" fill="#c4c4c4"/><rect x="3.5" y="12" width="1.3" height="1.3" fill="#c4c4c4"/><rect x="0.0" y="15" width="1.3" height="1.3" fill="#c4c4c4"/><rect x="3.5" y="15" width="1.3" height="1.3" fill="#c4c4c4"/></svg><svg class="r" style="left:786.0px;top:78.0px;" width="24" height="24" viewBox="0 0 24 24"><rect x="2.5" y="2.5" width="17" height="17" fill="#ecebe4" stroke="#c8c8c8" stroke-width="0.9" stroke-dasharray="1.5 1.2"/><path d="M12 10L12 22L15 19L17.5 23.5L19.5 22.5L17 18H21Z" fill="#fff" stroke="#bbb" stroke-width="0.9"/></svg><svg class="r" style="left:815px;top:87px;" width="10" height="8" viewBox="0 0 10 8"><path d="M1 2L9 2L5 6.5Z" fill="#aaa"/></svg><svg class="r" style="left:831.0px;top:78.0px;" width="24" height="24" viewBox="0 0 24 24"><rect x="3" y="3" width="13" height="11" fill="#f6f6f6" stroke="#ddd"/><path d="M5 6.5H14M5 10H14" stroke="#ddd" stroke-width="1.5"/><rect x="7" y="10" width="13" height="11" fill="#e8e8e2" stroke="#ddd"/></svg><svg class="r" style="left:859px;top:87px;" width="10" height="8" viewBox="0 0 10 8"><path d="M1 2L9 2L5 6.5Z" fill="#aaa"/></svg><svg class="r" style="left:876.0px;top:78.0px;" width="24" height="24" viewBox="0 0 24 24"><rect x="1.5" y="2" width="11" height="11" fill="#f6e24a" stroke="#c8a820" stroke-width="0.8"/><rect x="5" y="5.5" width="11" height="11" fill="#f6e24a" stroke="#c8a820" stroke-width="0.8"/><rect x="12" y="13" width="10" height="10" rx="2" fill="#e02020"/><circle cx="17" cy="18" r="3.2" fill="none" stroke="#fff" stroke-width="1.2"/><path d="M15 20L19 16" stroke="#fff" stroke-width="1.2"/></svg><svg class="r" style="left:904.8px;top:87px;" width="10" height="8" viewBox="0 0 10 8"><path d="M1 2L9 2L5 6.5Z" fill="#444"/></svg><svg class="r" style="left:921.0px;top:78.0px;" width="24" height="24" viewBox="0 0 24 24"><rect x="2" y="2" width="13" height="13" fill="#fde84a" stroke="#c8a820" stroke-width="0.8"/><path d="M17.5 24L14.5 18.5Q13.5 15 17.5 15Q21.5 15 20.5 18.5Z" fill="#5b86a8"/><circle cx="17.5" cy="17.5" r="1.2" fill="#fff"/></svg><svg class="r" style="left:949.7px;top:87px;" width="10" height="8" viewBox="0 0 10 8"><path d="M1 2L9 2L5 6.5Z" fill="#444"/></svg><svg class="r" style="left:969.4px;top:82px;" width="6" height="18" viewBox="0 0 6 18"><rect x="0.0" y="0" width="1.3" height="1.3" fill="#c4c4c4"/><rect x="3.5" y="0" width="1.3" height="1.3" fill="#c4c4c4"/><rect x="0.0" y="3" width="1.3" height="1.3" fill="#c4c4c4"/><rect x="3.5" y="3" width="1.3" height="1.3" fill="#c4c4c4"/><rect x="0.0" y="6" width="1.3" height="1.3" fill="#c4c4c4"/><rect x="3.5" y="6" width="1.3" height="1.3" fill="#c4c4c4"/><rect x="0.0" y="9" width="1.3" height="1.3" fill="#c4c4c4"/><rect x="3.5" y="9" width="1.3" height="1.3" fill="#c4c4c4"/><rect x="0.0" y="12" width="1.3" height="1.3" fill="#c4c4c4"/><rect x="3.5" y="12" width="1.3" height="1.3" fill="#c4c4c4"/><rect x="0.0" y="15" width="1.3" height="1.3" fill="#c4c4c4"/><rect x="3.5" y="15" width="1.3" height="1.3" fill="#c4c4c4"/></svg><svg class="r" style="left:981.5px;top:78.0px;" width="24" height="24" viewBox="0 0 24 24"><circle cx="11" cy="9.5" r="8.5" fill="#5b8ed0" stroke="#4070b0" stroke-width="0.8"/><circle cx="12" cy="5.3" r="1.5" fill="#fff"/><path d="M9 8.5H12.8L11.2 14.5Q11 15.3 11.8 15.1L12.8 14.7L12.5 15.8Q10.8 16.8 9.5 16.6Q8.4 16.3 8.8 15L10 10H8.8Z" fill="#fff"/><path d="M12.5 10L12.5 22L15.5 19L18 23.5L20 22.5L17.5 18H21.5Z" fill="#fff" stroke="#222" stroke-width="0.9"/></svg><svg class="r" style="left:1015.0px;top:78.0px;" width="24" height="24" viewBox="0 0 24 24"><path d="M3 2V21M21 2V21M1.5 21.5H22.5" stroke="#d0d0d0" stroke-width="1.2"/><path d="M3 5H21M3 10.5H21M3 16H21" stroke="#ddd"/><g fill="none" stroke="#e0c8c8" stroke-width="0.9"><path d="M8 3L10 5L8 7L6 5Z M15 3L17 5L15 7L13 5Z"/><path d="M7 8.5L9 10.5L7 12.5L5 10.5Z M11 8.5L13 10.5L11 12.5L9 10.5Z M17 8.5L19 10.5L17 12.5L15 10.5Z"/><path d="M7 14L9 16L7 18L5 16Z M12 14L14 16L12 18L10 16Z M17 14L19 16L17 18L15 16Z"/></g></svg><svg class="r" style="left:1047.5px;top:78.0px;" width="24" height="24" viewBox="0 0 24 24"><path d="M12 1.5L13.6 5L17.2 3.4L16.6 7.2L20.4 8L17.8 11L20.4 14L16.6 14.8L17.2 18.6L13.6 17L12 20.5L10.4 17L6.8 18.6L7.4 14.8L3.6 14L6.2 11L3.6 8L7.4 7.2L6.8 3.4L10.4 5Z" fill="#6e9ad8" stroke="#4a74b4" stroke-width="0.7"/><circle cx="12" cy="11" r="2.6" fill="#fafafa"/></svg><svg class="r" style="left:1080.0px;top:78.0px;" width="24" height="24" viewBox="0 0 24 24"><path d="M4 2.5H19.5L20 7H18L17 5H8.5L14 11.5L8 18.5H17.5L18.5 16.5H20.5L19.5 21H3.5V20L10.5 11.5L4 3.5Z" fill="#9a1aa0"/></svg><svg class="r" style="left:1113.5px;top:78.0px;" width="24" height="24" viewBox="0 0 24 24"><rect x="3.5" y="2.5" width="17" height="19" fill="#f8f8f8" stroke="#ddd"/><path d="M3.5 6H20.5M5.5 9.5H8.5M10.5 9.5H18.5M5.5 12.5H8.5M10.5 12.5H18.5M5.5 15.5H8.5M10.5 15.5H18.5M5.5 18.5H8.5M10.5 18.5H18.5" stroke="#ddd" stroke-width="1"/></svg><svg class="r" style="left:1159.0px;top:78.0px;" width="24" height="24" viewBox="0 0 24 24"><path d="M2.5 4.5H21.5M2.5 2V7M21.5 2V7" stroke="#2a4a7a" stroke-width="1.5"/><rect x="1.5" y="12" width="21" height="9" fill="#c8c8c8" stroke="#555" stroke-width="1"/><path d="M5 12V16M8 12V14.5M11 12V16M14 12V14.5M17 12V16M20 12V14.5" stroke="#444" stroke-width="0.9"/></svg><svg class="r" style="left:1203.0px;top:78.0px;" width="24" height="24" viewBox="0 0 24 24"><path d="M4 2.5H20Q22 2.5 22 4.5V11Q22 13 20 13H12L8.5 17L9 13H4Q2 13 2 11V4.5Q2 2.5 4 2.5Z" fill="#fbec8a" stroke="#c8a820" stroke-width="0.9"/><circle cx="6" cy="19" r="3.4" fill="#74a874" stroke="#3f7a3f" stroke-width="0.8"/></svg><svg class="r" style="left:1235.7px;top:78.0px;" width="24" height="24" viewBox="0 0 24 24"><path d="M11 2L12.5 4.5L15.5 3.5L15.5 6.5L18.5 7.5L16.5 10L18.5 12.5L15.5 13.5L15.5 16.5L12.5 15.5L11 18L9.5 15.5L6.5 16.5L6.5 13.5L3.5 12.5L5.5 10L3.5 7.5L6.5 6.5L6.5 3.5L9.5 4.5Z" fill="#f2f2f2" stroke="#ddd" stroke-width="0.9"/><circle cx="11" cy="10" r="4.2" fill="#e2e2e2" stroke="#d4d4d4"/><path d="M10 8V12L13 10Z" fill="#fff"/><path d="M13.5 12L13.5 22L16 19.5L18 23L19.5 22.2L17.7 18.8H20.5Z" fill="#fafafa" stroke="#ddd" stroke-width="0.8"/></svg><svg class="r" style="left:1142px;top:87px;" width="10" height="8" viewBox="0 0 10 8"><path d="M1 2L9 2L5 6.5Z" fill="#aaa"/></svg><svg class="r" style="left:1187px;top:87px;" width="10" height="8" viewBox="0 0 10 8"><path d="M1 2L9 2L5 6.5Z" fill="#444"/></svg><svg class="r" style="left:1265px;top:87px;" width="10" height="8" viewBox="0 0 10 8"><path d="M1 2L9 2L5 6.5Z" fill="#aaa"/></svg><svg class="r" style="left:15.499999999999998px;top:120.5px;" width="6" height="18" viewBox="0 0 6 18"><rect x="0.0" y="0" width="1.3" height="1.3" fill="#c4c4c4"/><rect x="3.5" y="0" width="1.3" height="1.3" fill="#c4c4c4"/><rect x="0.0" y="3" width="1.3" height="1.3" fill="#c4c4c4"/><rect x="3.5" y="3" width="1.3" height="1.3" fill="#c4c4c4"/><rect x="0.0" y="6" width="1.3" height="1.3" fill="#c4c4c4"/><rect x="3.5" y="6" width="1.3" height="1.3" fill="#c4c4c4"/><rect x="0.0" y="9" width="1.3" height="1.3" fill="#c4c4c4"/><rect x="3.5" y="9" width="1.3" height="1.3" fill="#c4c4c4"/><rect x="0.0" y="12" width="1.3" height="1.3" fill="#c4c4c4"/><rect x="3.5" y="12" width="1.3" height="1.3" fill="#c4c4c4"/><rect x="0.0" y="15" width="1.3" height="1.3" fill="#c4c4c4"/><rect x="3.5" y="15" width="1.3" height="1.3" fill="#c4c4c4"/></svg><svg class="r" style="left:28.5px;top:116.5px;" width="24" height="24" viewBox="0 0 24 24"><path d="M1.5 13L9 5L15 17L7.5 22Z" fill="#d8642e" stroke="#a84a1e" stroke-width="0.6"/><path d="M3.5 8L12 4.5L15.5 17.5L7.5 19.5Z" fill="#f2c43e" stroke="#c09a20" stroke-width="0.6"/><path d="M8.5 2L20.5 3.5L19 15.5L7 14Z" fill="#5b88c4" stroke="#3a5a8a" stroke-width="0.7"/><rect x="14" y="14" width="9.5" height="9.5" rx="1.8" fill="#4f9a4f"/><path d="M18.75 15.8V21.7M15.8 18.75H21.7" stroke="#fff" stroke-width="1.8"/></svg><svg class="r" style="left:61.2px;top:116.5px;" width="24" height="24" viewBox="0 0 24 24"><path d="M1.5 10L11 13.5L19.5 10V19L11 23L1.5 19Z" fill="#d9b028" stroke="#3a3a20" stroke-width="0.8"/><path d="M11 13.5L19.5 10V19L11 23Z" fill="#f0dc58"/><circle cx="11" cy="8" r="7" fill="#7aa0d4" stroke="#3e5e90" stroke-width="0.8"/><path d="M7 5Q9 8 8 11M12 3Q14 6 13 9M15 10Q12 12 10 11" stroke="#2a4a80" stroke-width="1.5" fill="none"/><rect x="13" y="13" width="11" height="11" rx="1.8" fill="#c9a400" stroke="#a88800" stroke-width="0.6"/><path d="M18.5 14.8V22.2M14.8 18.5H22.2M15.8 15.8L21.2 21.2M21.2 15.8L15.8 21.2" stroke="#fff" stroke-width="1.3"/><circle cx="18.5" cy="18.5" r="1.4" fill="#c9a400"/></svg><svg class="r" style="left:94.0px;top:116.5px;" width="24" height="24" viewBox="0 0 24 24"><circle cx="3" cy="3" r="1.8" fill="#fff" stroke="#333" stroke-width="0.8"/><circle cx="17" cy="3" r="1.8" fill="#fff" stroke="#333" stroke-width="0.8"/><circle cx="21" cy="3" r="1.5" fill="#fff" stroke="#333" stroke-width="0.8"/><circle cx="9" cy="19" r="1.8" fill="#fff" stroke="#333" stroke-width="0.8"/><path d="M3.8 4.5L8.4 17.3M9.7 17.3L16.2 4.5M18.8 3H19.5" stroke="#2e3e50" stroke-width="1.2"/><rect x="13" y="13" width="11" height="11" rx="1.8" fill="#c9a400" stroke="#a88800" stroke-width="0.6"/><path d="M18.5 14.8V22.2M14.8 18.5H22.2M15.8 15.8L21.2 21.2M21.2 15.8L15.8 21.2" stroke="#fff" stroke-width="1.3"/><circle cx="18.5" cy="18.5" r="1.4" fill="#c9a400"/></svg><svg class="r" style="left:126.69999999999999px;top:116.5px;" width="24" height="24" viewBox="0 0 24 24"><path d="M2 23Q5 11 21 1Q19 12 6 19Z" fill="#7396c8" stroke="#45618e" stroke-width="0.8"/><path d="M3 22Q9 13 18 5" stroke="#d0dcf0" stroke-width="0.9" fill="none"/><rect x="13" y="13" width="11" height="11" rx="1.8" fill="#c9a400" stroke="#a88800" stroke-width="0.6"/><path d="M18.5 14.8V22.2M14.8 18.5H22.2M15.8 15.8L21.2 21.2M21.2 15.8L15.8 21.2" stroke="#fff" stroke-width="1.3"/><circle cx="18.5" cy="18.5" r="1.4" fill="#c9a400"/></svg><svg class="r" style="left:160.5px;top:116.5px;" width="24" height="24" viewBox="0 0 24 24"><rect x="2.5" y="7" width="18" height="11" rx="1.5" fill="#6b94cc" stroke="#3a5a8a" stroke-width="0.8"/><path d="M5 7V3M8.5 7V3M12 7V3M15.5 7V3M19 7V3M5 18V21M8.5 18V21M12 18V21" stroke="#2e4a70" stroke-width="1.1"/><rect x="13" y="13" width="11" height="11" rx="1.8" fill="#c9a400" stroke="#a88800" stroke-width="0.6"/><path d="M18.5 14.8V22.2M14.8 18.5H22.2M15.8 15.8L21.2 21.2M21.2 15.8L15.8 21.2" stroke="#fff" stroke-width="1.3"/><circle cx="18.5" cy="18.5" r="1.4" fill="#c9a400"/></svg><svg class="r" style="left:193.3px;top:116.5px;" width="24" height="24" viewBox="0 0 24 24"><rect x="2" y="2" width="18" height="19" fill="#6b94cc" stroke="#2e4a70" stroke-width="1"/><path d="M2 12H20M11 2V21M2 2L11 12M11 12L20 2M2 16.5H11" stroke="#2e4a70" stroke-width="0.9"/><rect x="3" y="3" width="7" height="8" fill="#a8c0e0" opacity="0.6"/><rect x="13" y="13" width="11" height="11" rx="1.8" fill="#c9a400" stroke="#a88800" stroke-width="0.6"/><path d="M18.5 14.8V22.2M14.8 18.5H22.2M15.8 15.8L21.2 21.2M21.2 15.8L15.8 21.2" stroke="#fff" stroke-width="1.3"/><circle cx="18.5" cy="18.5" r="1.4" fill="#c9a400"/></svg><svg class="r" style="left:226.0px;top:116.5px;" width="24" height="24" viewBox="0 0 24 24"><rect x="2" y="2" width="19" height="19" rx="2" fill="#b6c8e2" stroke="#4a6a9a" stroke-width="1"/><path d="M4 4L10 16L18 4" stroke="#2e3e50" stroke-width="1.2" fill="none"/><circle cx="10" cy="16" r="1.6" fill="#fff" stroke="#333" stroke-width="0.7"/><circle cx="18" cy="4" r="1.5" fill="#fff" stroke="#333" stroke-width="0.7"/><rect x="13" y="13" width="11" height="11" rx="1.8" fill="#c9a400" stroke="#a88800" stroke-width="0.6"/><path d="M18.5 14.8V22.2M14.8 18.5H22.2M15.8 15.8L21.2 21.2M21.2 15.8L15.8 21.2" stroke="#fff" stroke-width="1.3"/><circle cx="18.5" cy="18.5" r="1.4" fill="#c9a400"/></svg><svg class="r" style="left:262.6px;top:120.5px;" width="6" height="18" viewBox="0 0 6 18"><rect x="0.0" y="0" width="1.3" height="1.3" fill="#c4c4c4"/><rect x="3.5" y="0" width="1.3" height="1.3" fill="#c4c4c4"/><rect x="0.0" y="3" width="1.3" height="1.3" fill="#c4c4c4"/><rect x="3.5" y="3" width="1.3" height="1.3" fill="#c4c4c4"/><rect x="0.0" y="6" width="1.3" height="1.3" fill="#c4c4c4"/><rect x="3.5" y="6" width="1.3" height="1.3" fill="#c4c4c4"/><rect x="0.0" y="9" width="1.3" height="1.3" fill="#c4c4c4"/><rect x="3.5" y="9" width="1.3" height="1.3" fill="#c4c4c4"/><rect x="0.0" y="12" width="1.3" height="1.3" fill="#c4c4c4"/><rect x="3.5" y="12" width="1.3" height="1.3" fill="#c4c4c4"/><rect x="0.0" y="15" width="1.3" height="1.3" fill="#c4c4c4"/><rect x="3.5" y="15" width="1.3" height="1.3" fill="#c4c4c4"/></svg><svg class="r" style="left:275.0px;top:116.5px;" width="24" height="24" viewBox="0 0 24 24"><path d="M3 20L5 13L13 2L16 4L8 15Z M7 21L9 14L17 3L20 5L12 16Z" fill="#e4e2dc" stroke="#d8d6d0" stroke-width="0.8"/></svg><svg class="r" style="left:307.0px;top:116.5px;" width="24" height="24" viewBox="0 0 24 24"><path d="M5 22L7 15L16 2L19.5 4.5L10.5 17.5Z" fill="#e8e6e0" stroke="#dddbd5" stroke-width="0.8"/></svg><svg class="r" style="left:341.0px;top:116.5px;" width="24" height="24" viewBox="0 0 24 24"><rect x="2.5" y="1.5" width="19" height="20" rx="2" fill="#dfe2e6" stroke="#d4d8dc"/><rect x="5" y="3" width="14" height="7" fill="#f2f2f2"/><path d="M6.5 5H17.5M6.5 7H17.5" stroke="#dcdcdc" stroke-width="0.7"/><rect x="6" y="14" width="9" height="6" fill="#f2f2f2"/><path d="M14 22L15 18L21 10L23 11.5L17 19.5Z" fill="#e4e2dc"/></svg><svg class="r" style="left:374.0px;top:116.5px;" width="24" height="24" viewBox="0 0 24 24"><path d="M4 19L19 4" stroke="#e0e0e0" stroke-width="1" stroke-dasharray="1.5 1.5"/><rect x="2" y="17" width="4" height="4" fill="#fff" stroke="#ddd" stroke-width="0.8"/><rect x="17" y="2" width="4" height="4" fill="#fff" stroke="#ddd" stroke-width="0.8"/></svg><svg class="r" style="left:418.8px;top:116.5px;" width="24" height="24" viewBox="0 0 24 24"><circle cx="12" cy="3.5" r="2.3" fill="#ececec" stroke="#e0e0e0" stroke-width="0.6"/><circle cx="20" cy="6.5" r="2.3" fill="#ececec" stroke="#e0e0e0" stroke-width="0.6"/><circle cx="5" cy="11" r="2.3" fill="#ececec" stroke="#e0e0e0" stroke-width="0.6"/><rect x="13" y="13" width="10.5" height="10" rx="1.8" fill="#e0dfd8"/><circle cx="18.2" cy="18" r="2.5" fill="none" stroke="#fafafa" stroke-width="1.1"/></svg><svg class="r" style="left:453.0px;top:116.5px;" width="24" height="24" viewBox="0 0 24 24"><rect x="2" y="1.5" width="4" height="4" fill="#fff" stroke="#ccc" stroke-width="0.8"/><path d="M6 3.5H14M3.5 6L1.5 22" stroke="#ddd" stroke-width="0.8"/><path d="M6 21L15 12M10 13L18 21M14 8Q17 7 19 10L16 12Z" stroke="#e2e0da" stroke-width="2.2" fill="#e2e0da"/></svg><svg class="r" style="left:497.0px;top:116.5px;" width="24" height="24" viewBox="0 0 24 24"><rect x="1.5" y="2.5" width="19" height="5" fill="#e8e6dc" stroke="#dcdad0" stroke-width="0.8"/><rect x="1.5" y="9.5" width="19" height="5" fill="#e8e6dc" stroke="#dcdad0" stroke-width="0.8"/><rect x="1.5" y="16.5" width="19" height="5" fill="#e8e6dc" stroke="#dcdad0" stroke-width="0.8"/><path d="M8 23L9.5 18L18.5 2L21.5 3.5L12.5 19.5Z" fill="#f0eee8" stroke="#d8d6d0" stroke-width="0.8"/></svg><svg class="r" style="left:529.0px;top:116.5px;" width="24" height="24" viewBox="0 0 24 24"><rect x="2" y="1.5" width="13" height="10" fill="#ecebe4"/><path d="M3 5.5H22" stroke="#e4d4d4" stroke-width="1.5"/><path d="M5 7H20L19 22H6Z" fill="#f4f0f0" stroke="#dcc8c8" stroke-width="1.2"/><path d="M9 9V20M12.5 9V20M16 9V20" stroke="#dcc8c8" stroke-width="1.3"/></svg><svg class="r" style="left:563.0px;top:116.5px;" width="24" height="24" viewBox="0 0 24 24"><path d="M1 6L22 13M1 8L17 10" stroke="#ddd" stroke-width="1.2"/><ellipse cx="19.5" cy="7" rx="3" ry="2.8" fill="none" stroke="#dcd0d4" stroke-width="1.3"/><ellipse cx="19.5" cy="17" rx="3" ry="2.8" fill="none" stroke="#dcd0d4" stroke-width="1.3"/><path d="M6 10L17 15" stroke="#ddd" stroke-width="1"/></svg><svg class="r" style="left:596.0px;top:116.5px;" width="24" height="24" viewBox="0 0 24 24"><path d="M9.5 1.5H16L19.5 5V17.5H9.5Z" fill="#fafafa" stroke="#ddd" stroke-width="0.9"/><path d="M3.5 5.5H10L13.5 9V22.5H3.5Z" fill="#fafafa" stroke="#ddd" stroke-width="0.9"/><path d="M5.5 13H11.5M5.5 15.5H11.5M5.5 18H11.5" stroke="#e2e2e2" stroke-width="0.8"/></svg><svg class="r" style="left:629.0px;top:116.5px;" width="24" height="24" viewBox="0 0 24 24"><rect x="2.5" y="1.5" width="15" height="20" rx="1" fill="#f4f4f4" stroke="#ddd" stroke-width="0.9"/><rect x="6" y="0.5" width="8" height="3" fill="#e8e8e8"/><path d="M5 5.5H13L16.5 9V20.5H5Z" fill="#fff" stroke="#e0e0e0" stroke-width="0.8"/><path d="M7 12H14M7 14.5H14M7 17H14" stroke="#e2e2e2" stroke-width="0.8"/></svg><svg class="r" style="left:662.0px;top:116.5px;" width="24" height="24" viewBox="0 0 24 24"><path d="M1 10L8 2.5V6.5Q20 6 20 14.5Q20 20 14 21.5Q17 19 16 15Q15 11.5 8 12V17Z" fill="#e4e0dc"/></svg><svg class="r" style="left:694.0px;top:116.5px;" width="24" height="24" viewBox="0 0 24 24"><path d="M23 10L16 2.5V6.5Q4 6 4 14.5Q4 20 10 21.5Q7 19 8 15Q9 11.5 16 12V17Z" fill="#e2e4e2"/></svg><svg class="r" style="left:293px;top:133.5px;" width="10" height="8" viewBox="0 0 10 8"><path d="M1 2L9 2L5 6.5Z" fill="#bbb"/></svg><svg class="r" style="left:402.7px;top:125.5px;" width="10" height="8" viewBox="0 0 10 8"><path d="M1 2L9 2L5 6.5Z" fill="#bbb"/></svg><svg class="r" style="left:481px;top:125.5px;" width="10" height="8" viewBox="0 0 10 8"><path d="M1 2L9 2L5 6.5Z" fill="#bbb"/></svg><svg class="r" style="left:731.3000000000001px;top:120.5px;" width="6" height="18" viewBox="0 0 6 18"><rect x="0.0" y="0" width="1.3" height="1.3" fill="#c4c4c4"/><rect x="3.5" y="0" width="1.3" height="1.3" fill="#c4c4c4"/><rect x="0.0" y="3" width="1.3" height="1.3" fill="#c4c4c4"/><rect x="3.5" y="3" width="1.3" height="1.3" fill="#c4c4c4"/><rect x="0.0" y="6" width="1.3" height="1.3" fill="#c4c4c4"/><rect x="3.5" y="6" width="1.3" height="1.3" fill="#c4c4c4"/><rect x="0.0" y="9" width="1.3" height="1.3" fill="#c4c4c4"/><rect x="3.5" y="9" width="1.3" height="1.3" fill="#c4c4c4"/><rect x="0.0" y="12" width="1.3" height="1.3" fill="#c4c4c4"/><rect x="3.5" y="12" width="1.3" height="1.3" fill="#c4c4c4"/><rect x="0.0" y="15" width="1.3" height="1.3" fill="#c4c4c4"/><rect x="3.5" y="15" width="1.3" height="1.3" fill="#c4c4c4"/></svg><svg class="r" style="left:742.6px;top:116.5px;" width="24" height="24" viewBox="0 0 24 24"><path d="M1.5 11L6 5.5H22.5V16.5H6Z" fill="#ecebe2" stroke="#dcdbd0" stroke-width="0.8"/><text x="14" y="14.2" font-family="Liberation Sans" font-weight="700" font-size="9" fill="#d4d2ca" text-anchor="middle">abc</text></svg><svg class="r" style="left:775.6px;top:116.5px;" width="24" height="24" viewBox="0 0 24 24"><path d="M9 11L9 2.5A8 8 0 0 1 16.5 8Z" fill="#e6e0e0"/><path d="M9 11L16.5 8A8 8 0 0 1 12 18Z" fill="#e4dede"/><path d="M9 11L12 18A8 8 0 0 1 1.5 9Z" fill="#dfe6e2"/><path d="M1.5 9A8 8 0 0 1 9 2.5V11Z" fill="#e2e2dc"/><rect x="9" y="17" width="4" height="6" fill="#ebe9e0"/><rect x="13" y="12" width="4" height="11" fill="#dde4e0"/><rect x="17" y="18" width="4" height="5" fill="#e8e0e2"/></svg><div class="r" style="left:809px;top:120px;width:1px;height:18px;background:#dcdcdc;"></div><svg class="r" style="left:815.8px;top:116.5px;" width="24" height="24" viewBox="0 0 24 24"><path d="M1.5 10L6 4.5H21.5V15.5H6Z" fill="#e2ecf8" stroke="#4a8ae0" stroke-width="1"/><text x="12" y="13.2" font-family="Liberation Sans" font-weight="700" font-size="9" fill="#222" text-anchor="middle">ab</text><path d="M18 8V17" stroke="#fff" stroke-width="2.2"/><path d="M18 8V17" stroke="#888" stroke-width="0.7"/><circle cx="18.5" cy="19" r="4" fill="#b01818"/><circle cx="17.5" cy="18" r="1.2" fill="#e06060"/></svg><svg class="r" style="left:848.0px;top:116.5px;" width="24" height="24" viewBox="0 0 24 24"><path d="M1.5 11L6 5.5H22.5V16.5H6Z" fill="#fff" stroke="#e41818" stroke-width="1.3"/><rect x="6.5" y="6.8" width="14.8" height="8.5" fill="#e41818"/><text x="14" y="14.2" font-family="Liberation Sans" font-weight="700" font-size="9" fill="#fff" text-anchor="middle">abc</text></svg><div class="r" style="left:882px;top:120px;width:1px;height:18px;background:#dcdcdc;"></div><svg class="r" style="left:889.6px;top:116.5px;" width="24" height="24" viewBox="0 0 24 24"><path d="M1.5 10L6 4.5H21.5V15.5H6Z" fill="#ecebe2" stroke="#dcdbd0" stroke-width="0.8"/><text x="11" y="13.2" font-family="Liberation Sans" font-weight="700" font-size="9" fill="#d0cec6" text-anchor="middle">ab</text><path d="M18 8V17" stroke="#e6e6e6" stroke-width="1.5"/><circle cx="18.5" cy="19" r="4" fill="#d8d4d4"/></svg><svg class="r" style="left:922.5px;top:116.5px;" width="24" height="24" viewBox="0 0 24 24"><path d="M1.5 10L6 4.5H22.5V15.5H6Z" fill="#ecebe2" stroke="#dcdbd0" stroke-width="0.8"/><text x="14" y="13.2" font-family="Liberation Sans" font-weight="700" font-size="9" fill="#d0cec6" text-anchor="middle">abc</text><path d="M8 19Q14 13 21 19Q14 24 8 19Z" fill="#f4f4f4" stroke="#ddd" stroke-width="0.8"/><circle cx="14.5" cy="19" r="2" fill="#ddd"/></svg><svg class="r" style="left:956.0px;top:116.5px;" width="24" height="24" viewBox="0 0 24 24"><path d="M1.5 10L6 4.5H22.5V15.5H6Z" fill="#ecebe2" stroke="#dcdbd0" stroke-width="0.8"/><text x="14" y="13.2" font-family="Liberation Sans" font-weight="700" font-size="9" fill="#d0cec6" text-anchor="middle">abc</text><rect x="13" y="13" width="10.5" height="10.5" rx="1.8" fill="#d8d8dc"/><path d="M15 17H19V15L22 18.2L19 21.5V19.5H15Z" fill="#fff"/></svg><svg class="r" style="left:988.5px;top:116.5px;" width="24" height="24" viewBox="0 0 24 24"><path d="M1.5 10L6 4.5H22.5V15.5H6Z" fill="#ecebe2" stroke="#dcdbd0" stroke-width="0.8"/><text x="14" y="13.2" font-family="Liberation Sans" font-weight="700" font-size="9" fill="#d0cec6" text-anchor="middle">abc</text><rect x="13" y="13" width="10.5" height="10.5" rx="1.8" fill="#d8d8dc"/><circle cx="18.2" cy="18.2" r="3" fill="none" stroke="#fff" stroke-width="1.3"/></svg><svg class="r" style="left:1022.0px;top:116.5px;" width="24" height="24" viewBox="0 0 24 24"><path d="M1.5 10L6 4.5H22.5V15.5H6Z" fill="#ecebe2" stroke="#dcdbd0" stroke-width="0.8"/><text x="14" y="13.2" font-family="Liberation Sans" font-weight="700" font-size="9" fill="#d0cec6" text-anchor="middle">abc</text><rect x="13" y="13" width="10.5" height="10.5" rx="1.8" fill="#dcdbd4"/><path d="M15 22L16 19L20.5 14.5L22 16L17.5 20.5Z" fill="#fff"/></svg><svg class="r" style="left:1058.6px;top:120.5px;" width="6" height="18" viewBox="0 0 6 18"><rect x="0.0" y="0" width="1.3" height="1.3" fill="#c4c4c4"/><rect x="3.5" y="0" width="1.3" height="1.3" fill="#c4c4c4"/><rect x="0.0" y="3" width="1.3" height="1.3" fill="#c4c4c4"/><rect x="3.5" y="3" width="1.3" height="1.3" fill="#c4c4c4"/><rect x="0.0" y="6" width="1.3" height="1.3" fill="#c4c4c4"/><rect x="3.5" y="6" width="1.3" height="1.3" fill="#c4c4c4"/><rect x="0.0" y="9" width="1.3" height="1.3" fill="#c4c4c4"/><rect x="3.5" y="9" width="1.3" height="1.3" fill="#c4c4c4"/><rect x="0.0" y="12" width="1.3" height="1.3" fill="#c4c4c4"/><rect x="3.5" y="12" width="1.3" height="1.3" fill="#c4c4c4"/><rect x="0.0" y="15" width="1.3" height="1.3" fill="#c4c4c4"/><rect x="3.5" y="15" width="1.3" height="1.3" fill="#c4c4c4"/></svg><svg class="r" style="left:1071.0px;top:116.5px;" width="24" height="24" viewBox="0 0 24 24"><circle cx="11" cy="11" r="10" fill="#3a7ad8" stroke="#2a5aa8" stroke-width="0.8"/><ellipse cx="11" cy="11" rx="4.5" ry="10" fill="#d8e4f0"/><ellipse cx="11" cy="11" rx="2" ry="10" fill="#4a90e8"/><path d="M1.5 8H20.5M1.5 14H20.5" stroke="#a0b8d8" stroke-width="0.9"/><path d="M3 5Q6 9 5 14M18 5Q16 9 17 14" stroke="#505050" stroke-width="2.5" fill="none" opacity="0.7"/><rect x="13.5" y="13.5" width="10" height="10" rx="1.5" fill="#3a9040"/><path d="M18.5 15.2V21.8M15.2 18.5H21.8" stroke="#fff" stroke-width="1.8"/></svg><svg class="r" style="left:1104.0px;top:116.5px;" width="24" height="24" viewBox="0 0 24 24"><circle cx="11" cy="11" r="10" fill="#3a7ad8" stroke="#2a5aa8" stroke-width="0.8"/><ellipse cx="11" cy="11" rx="4.5" ry="10" fill="#d8e4f0"/><ellipse cx="11" cy="11" rx="2" ry="10" fill="#4a90e8"/><path d="M1.5 8H20.5M1.5 14H20.5" stroke="#a0b8d8" stroke-width="0.9"/><path d="M3 5Q6 9 5 14M18 5Q16 9 17 14" stroke="#505050" stroke-width="2.5" fill="none" opacity="0.7"/><rect x="13.5" y="13.5" width="10" height="10" rx="1.5" fill="#3a9040"/><circle cx="18" cy="18" r="2.5" fill="none" stroke="#fff" stroke-width="1.2"/><path d="M19.8 19.8L22 22" stroke="#fff" stroke-width="1.3"/></svg><svg class="r" style="left:1137.0px;top:116.5px;" width="24" height="24" viewBox="0 0 24 24"><circle cx="12" cy="10.5" r="10" fill="#3a6ab8" stroke="#2a4a88" stroke-width="0.8"/><path d="M3 6H21M2.5 11H21.5M4 15.5H20M12 0.5V20" stroke="#c8d8ec" stroke-width="1"/><path d="M6 4L9 7L7 10M15 4L18 8L15 12" stroke="#e8eef6" stroke-width="1.5" fill="none"/><path d="M2.5 20Q3 14 7 13.5Q10 13.5 10.5 17H13.5Q14 13.5 17 13.5Q21 14 21.5 20Z" fill="#000"/><ellipse cx="6.5" cy="20" rx="4" ry="2.8" fill="#fff" stroke="#000" stroke-width="1.3"/><ellipse cx="17.5" cy="20" rx="4" ry="2.8" fill="#fff" stroke="#000" stroke-width="1.3"/></svg><svg class="r" style="left:1173.6px;top:120.5px;" width="6" height="18" viewBox="0 0 6 18"><rect x="0.0" y="0" width="1.3" height="1.3" fill="#c4c4c4"/><rect x="3.5" y="0" width="1.3" height="1.3" fill="#c4c4c4"/><rect x="0.0" y="3" width="1.3" height="1.3" fill="#c4c4c4"/><rect x="3.5" y="3" width="1.3" height="1.3" fill="#c4c4c4"/><rect x="0.0" y="6" width="1.3" height="1.3" fill="#c4c4c4"/><rect x="3.5" y="6" width="1.3" height="1.3" fill="#c4c4c4"/><rect x="0.0" y="9" width="1.3" height="1.3" fill="#c4c4c4"/><rect x="3.5" y="9" width="1.3" height="1.3" fill="#c4c4c4"/><rect x="0.0" y="12" width="1.3" height="1.3" fill="#c4c4c4"/><rect x="3.5" y="12" width="1.3" height="1.3" fill="#c4c4c4"/><rect x="0.0" y="15" width="1.3" height="1.3" fill="#c4c4c4"/><rect x="3.5" y="15" width="1.3" height="1.3" fill="#c4c4c4"/></svg><svg class="r" style="left:1185.7px;top:116.5px;" width="24" height="24" viewBox="0 0 24 24"><path d="M11.5 1.5Q6 1.5 6 4.5V7.5H12V8.5H4Q1 8.5 1 13Q1 17.5 4 17.5H6V14Q6 11.5 9 11.5H14.5Q17 11.5 17 9V4.5Q17 1.5 11.5 1.5Z" fill="#3b77a8"/><circle cx="9" cy="4.3" r="1" fill="#fff"/><path d="M12.5 22.5Q18 22.5 18 19.5V16.5H12V15.5H20Q23 15.5 23 11Q23 6.5 20 6.5H18V10Q18 12.5 15 12.5H9.5Q7 12.5 7 15V19.5Q7 22.5 12.5 22.5Z" fill="#f7cf3c"/><circle cx="15" cy="19.7" r="1" fill="#fff"/><path d="M15.5 17.5L21 20L15.5 22.5" stroke="#222" stroke-width="1.1" fill="none"/></svg><svg class="r" style="left:1222.3px;top:120.5px;" width="6" height="18" viewBox="0 0 6 18"><rect x="0.0" y="0" width="1.3" height="1.3" fill="#c4c4c4"/><rect x="3.5" y="0" width="1.3" height="1.3" fill="#c4c4c4"/><rect x="0.0" y="3" width="1.3" height="1.3" fill="#c4c4c4"/><rect x="3.5" y="3" width="1.3" height="1.3" fill="#c4c4c4"/><rect x="0.0" y="6" width="1.3" height="1.3" fill="#c4c4c4"/><rect x="3.5" y="6" width="1.3" height="1.3" fill="#c4c4c4"/><rect x="0.0" y="9" width="1.3" height="1.3" fill="#c4c4c4"/><rect x="3.5" y="9" width="1.3" height="1.3" fill="#c4c4c4"/><rect x="0.0" y="12" width="1.3" height="1.3" fill="#c4c4c4"/><rect x="3.5" y="12" width="1.3" height="1.3" fill="#c4c4c4"/><rect x="0.0" y="15" width="1.3" height="1.3" fill="#c4c4c4"/><rect x="3.5" y="15" width="1.3" height="1.3" fill="#c4c4c4"/></svg><svg class="r" style="left:1234.8px;top:116.5px;" width="24" height="24" viewBox="0 0 24 24"><rect x="2.5" y="1.5" width="19" height="21" fill="#dfe1e4" stroke="#d6d8dc" stroke-width="0.8"/><rect x="2.5" y="1.5" width="5" height="21" fill="#c8cacd"/><text x="14.5" y="16" font-family="Liberation Sans" font-size="12" fill="#f2f2f2" text-anchor="middle">?</text></svg><svg class="r" style="left:1271.3999999999999px;top:120.5px;" width="6" height="18" viewBox="0 0 6 18"><rect x="0.0" y="0" width="1.3" height="1.3" fill="#c4c4c4"/><rect x="3.5" y="0" width="1.3" height="1.3" fill="#c4c4c4"/><rect x="0.0" y="3" width="1.3" height="1.3" fill="#c4c4c4"/><rect x="3.5" y="3" width="1.3" height="1.3" fill="#c4c4c4"/><rect x="0.0" y="6" width="1.3" height="1.3" fill="#c4c4c4"/><rect x="3.5" y="6" width="1.3" height="1.3" fill="#c4c4c4"/><rect x="0.0" y="9" width="1.3" height="1.3" fill="#c4c4c4"/><rect x="3.5" y="9" width="1.3" height="1.3" fill="#c4c4c4"/><rect x="0.0" y="12" width="1.3" height="1.3" fill="#c4c4c4"/><rect x="3.5" y="12" width="1.3" height="1.3" fill="#c4c4c4"/><rect x="0.0" y="15" width="1.3" height="1.3" fill="#c4c4c4"/><rect x="3.5" y="15" width="1.3" height="1.3" fill="#c4c4c4"/></svg><svg class="r" style="left:1285px;top:176px;" width="16" height="16" viewBox="0 0 16 16"><rect x="1.5" y="2" width="13" height="12" rx="1" fill="#f4f4f4" stroke="#e0e0e0"/><path d="M4 6H7M9 6H13M4 10H7M9 10H13" stroke="#e0e0e0"/></svg><div class="r" style="left:1309px;top:178px;width:1px;height:13px;background:#e0e0e0;"></div><svg class="r" style="left:1317.3px;top:176px;" width="16" height="16" viewBox="0 0 16 16"><path d="M1.5 3H6M1.5 3V15H6" stroke="#999" fill="none"/><rect x="4.5" y="6" width="3" height="3" fill="#f5a623"/><rect x="4.5" y="11" width="3" height="3" fill="#f5a623"/><path d="M11.5 15L15.5 10H13V2H10V10H7.5Z" fill="#5a86c0" stroke="#3a5a8a" stroke-width="0.7"/></svg><svg class="r" style="left:1342.6px;top:176px;" width="16" height="16" viewBox="0 0 16 16"><path d="M1.5 3H6M1.5 3V15H6" stroke="#999" fill="none"/><rect x="4.5" y="6" width="3" height="3" fill="#f5a623"/><rect x="4.5" y="11" width="3" height="3" fill="#f5a623"/><path d="M11.5 1L15.5 6H13V14H10V6H7.5Z" fill="#5a86c0" stroke="#3a5a8a" stroke-width="0.7"/></svg><svg class="r" style="left:1367px;top:176px;" width="16" height="16" viewBox="0 0 16 16"><path d="M5 1L6.2 4.2L9.5 4.3L6.9 6.3L7.8 9.5L5 7.6L2.2 9.5L3.1 6.3L0.5 4.3L3.8 4.2Z" fill="#f8e040" stroke="#c8a020" stroke-width="0.5"/><path d="M11.5 15L15.5 10H13V2H10V10H7.5Z" fill="#5a86c0" stroke="#3a5a8a" stroke-width="0.7"/><rect x="4" y="11" width="3" height="3" fill="#f5a623"/></svg><div class="r" style="left:1391px;top:178px;width:1px;height:13px;background:#e0e0e0;"></div><svg class="r" style="left:1399.5px;top:176px;" width="16" height="16" viewBox="0 0 16 16"><rect x="1" y="1" width="9" height="9" fill="#f6e24a" stroke="#c8a820" stroke-width="0.8"/><rect x="3.5" y="3.5" width="9" height="9" fill="#f6e24a" stroke="#c8a820" stroke-width="0.8"/><rect x="9" y="9" width="7" height="7" rx="1.5" fill="#e02020"/><circle cx="12.5" cy="12.5" r="2" fill="none" stroke="#fff" stroke-width="0.9"/></svg><div class="r" style="left:1423px;top:178px;width:1px;height:13px;background:#e0e0e0;"></div><svg class="r" style="left:1430.25px;top:176px;" width="16" height="16" viewBox="0 0 16 16"><path d="M4 2H10L13 5V15H4Z" fill="#f4f4f4" stroke="#e2e2e2"/></svg><svg class="r" style="left:1456px;top:176px;" width="16" height="16" viewBox="0 0 16 16"><rect x="3" y="1" width="10" height="5" fill="#f0f0f0" stroke="#e0e0e0"/><rect x="1" y="5" width="14" height="7" rx="1.5" fill="#e4e4e4"/><rect x="3" y="10" width="10" height="5" fill="#f4f4f4" stroke="#e0e0e0"/></svg><div class="r" style="left:1480px;top:178px;width:1px;height:13px;background:#e0e0e0;"></div><svg class="r" style="left:1487.75px;top:176px;" width="16" height="16" viewBox="0 0 16 16"><rect x="1.5" y="1.5" width="12" height="12" fill="#eef0f4" stroke="#7a8aa0" stroke-dasharray="1.2 1"/><circle cx="5.5" cy="5.5" r="4.2" fill="#5b8ed0"/><text x="5.5" y="8.5" font-family="Liberation Serif" font-style="italic" font-weight="700" font-size="7" fill="#fff" text-anchor="middle">i</text><path d="M8 7V16L10 14L11.5 16.5L13 15.8L11.8 13.5H14Z" fill="#fff" stroke="#333" stroke-width="0.7"/></svg><svg class="r" style="left:1508.75px;top:180.5px;" width="10" height="8" viewBox="0 0 10 8"><path d="M1 2L9 2L5 6.5Z" fill="#444"/></svg><svg class="r" style="left:1525.75px;top:176px;" width="16" height="16" viewBox="0 0 16 16"><path d="M2.5 2Q1 4.5 3 6.5Q5 7.5 6.5 6.5L13 14L14.5 12.5L8 5.5Q8.5 3 6 1.5L5.5 4L4 4.5Z" fill="#888" stroke="#444" stroke-width="0.6"/><path d="M10 11L13.5 15L15 13.5L11.5 9.5Z" fill="#e8c040" stroke="#8a6a10" stroke-width="0.5"/></svg><div class="r" style="left:1549px;top:178px;width:1px;height:13px;background:#e0e0e0;"></div><svg class="r" style="left:1557px;top:176px;" width="16" height="16" viewBox="0 0 16 16"><rect x="1.5" y="1" width="13" height="14" fill="#6f9ad4" stroke="#3a5a8a" stroke-width="0.7"/><rect x="1.5" y="1" width="3.5" height="14" fill="#1e2e48"/><text x="10" y="12" font-family="Liberation Sans" font-size="9" fill="#fff" text-anchor="middle">?</text></svg></body></html>
